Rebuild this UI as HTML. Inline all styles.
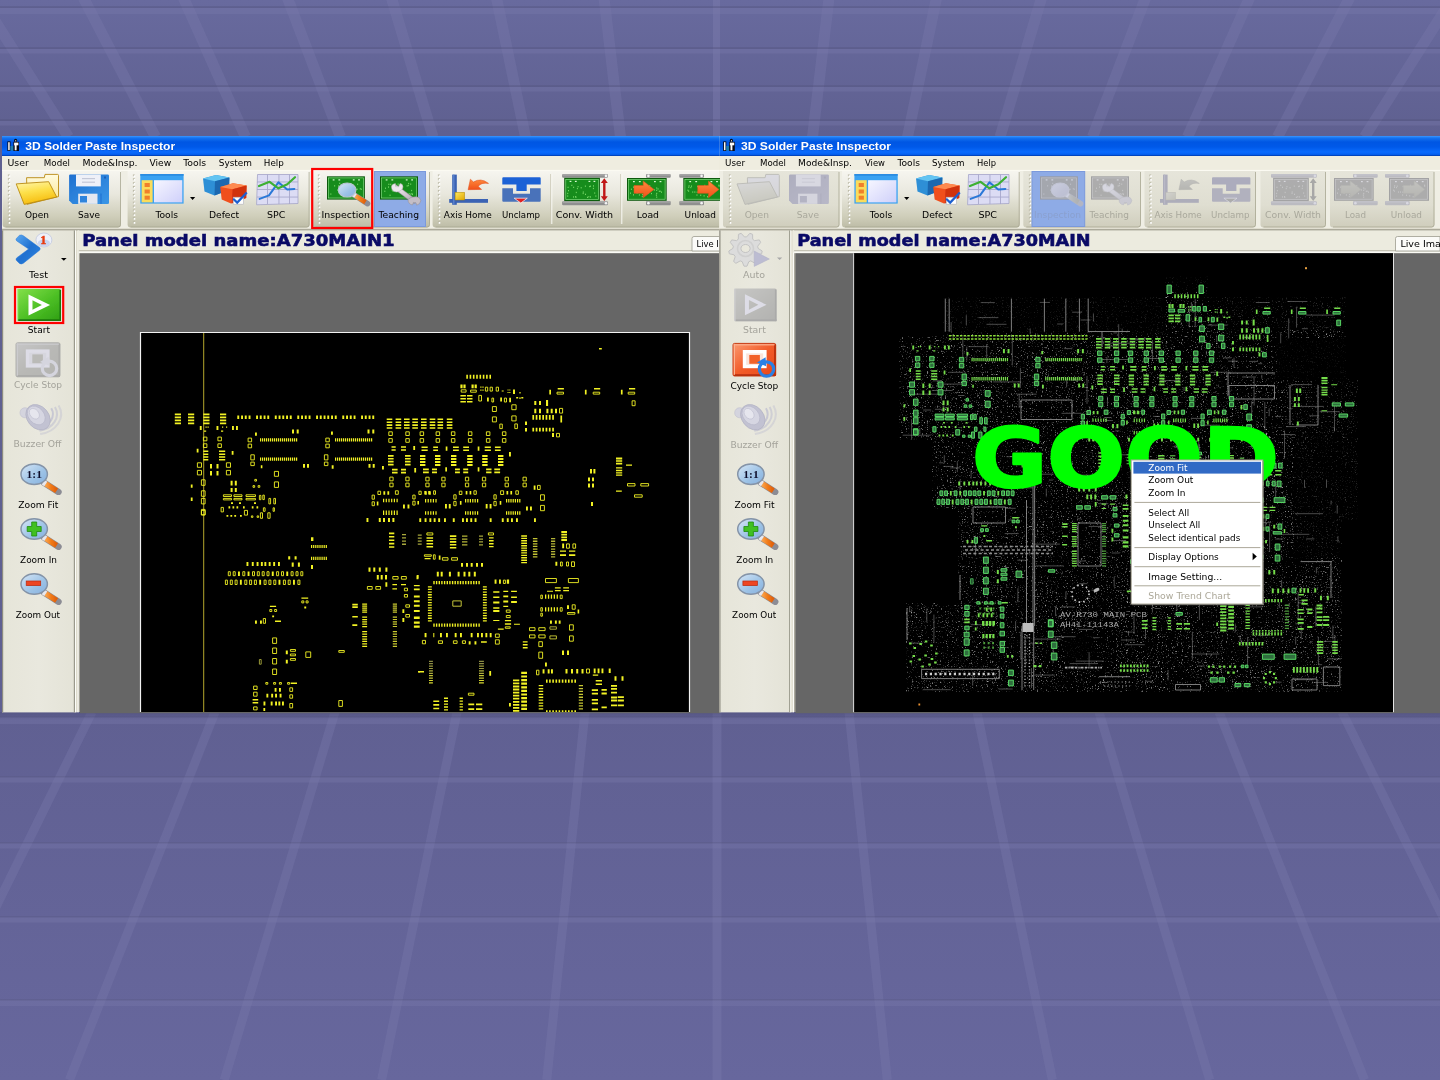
<!DOCTYPE html>
<html><head><meta charset="utf-8"><title>3D Solder Paste Inspector</title>
<style>
html,body{margin:0;padding:0;width:1440px;height:1080px;overflow:hidden;background:#65659a;}
svg{display:block;position:absolute;left:0;top:0;opacity:0.9999;}
text{white-space:pre;}
</style></head><body>
<svg width="1440" height="1080" viewBox="0 0 1440 1080">
<defs>
<linearGradient id="bgg" x1="0" y1="0" x2="0" y2="1">
<stop offset="0" stop-color="#686a9e"/><stop offset="0.125" stop-color="#5f6090"/>
<stop offset="0.66" stop-color="#606092"/><stop offset="1" stop-color="#67679d"/></linearGradient>
</defs>
<rect x="0" y="0" width="1440" height="1080" fill="url(#bgg)" />
<g stroke="#7a7aac" stroke-opacity="0.36" fill="none">
<line x1="604.0" y1="-2" x2="620.5" y2="137" stroke-width="11"/>
<line x1="829.0" y1="-2" x2="812.5" y2="137" stroke-width="11"/>
<line x1="496.5" y1="-2" x2="525.5" y2="137" stroke-width="11"/>
<line x1="936.5" y1="-2" x2="907.5" y2="137" stroke-width="11"/>
<line x1="391.5" y1="-2" x2="433.0" y2="137" stroke-width="11"/>
<line x1="1041.5" y1="-2" x2="1000.0" y2="137" stroke-width="11"/>
<line x1="287.5" y1="-2" x2="340.5" y2="137" stroke-width="11"/>
<line x1="1145.5" y1="-2" x2="1092.5" y2="137" stroke-width="11"/>
<line x1="183.5" y1="-2" x2="245.5" y2="137" stroke-width="11"/>
<line x1="1249.5" y1="-2" x2="1187.5" y2="137" stroke-width="11"/>
<line x1="83.5" y1="-2" x2="155.5" y2="137" stroke-width="11"/>
<line x1="1349.5" y1="-2" x2="1277.5" y2="137" stroke-width="11"/>
<line x1="-19.5" y1="-2" x2="68.5" y2="137" stroke-width="11"/>
<line x1="1452.5" y1="-2" x2="1364.5" y2="137" stroke-width="11"/>
<line x1="716.5" y1="0" x2="716.5" y2="136" stroke-width="7" stroke-opacity="0.5"/>
<line x1="585" y1="712" x2="546.72" y2="1080" stroke-width="9"/>
<line x1="849" y1="712" x2="887.28" y2="1080" stroke-width="9"/>
<line x1="457" y1="712" x2="381.59999999999997" y2="1080" stroke-width="9"/>
<line x1="977" y1="712" x2="1052.4" y2="1080" stroke-width="9"/>
<line x1="335" y1="712" x2="224.21999999999997" y2="1080" stroke-width="9"/>
<line x1="1099" y1="712" x2="1209.78" y2="1080" stroke-width="9"/>
<line x1="215" y1="712" x2="69.41999999999996" y2="1080" stroke-width="9"/>
<line x1="1219" y1="712" x2="1364.58" y2="1080" stroke-width="9"/>
<line x1="92" y1="712" x2="-89.25" y2="1080" stroke-width="9"/>
<line x1="1342" y1="712" x2="1523.25" y2="1080" stroke-width="9"/>
<line x1="717" y1="712" x2="717" y2="1080" stroke-width="9" stroke-opacity="0.4"/>
</g>
<rect x="0" y="6.2" width="1440" height="1.8" fill="#55557f" opacity="0.45"/>
<rect x="0" y="8" width="1440" height="6" fill="#7a7aac" opacity="0.38"/>
<rect x="0" y="47.2" width="1440" height="1.8" fill="#55557f" opacity="0.45"/>
<rect x="0" y="49" width="1440" height="4.5" fill="#7a7aac" opacity="0.38"/>
<rect x="0" y="85.2" width="1440" height="1.8" fill="#55557f" opacity="0.45"/>
<rect x="0" y="87" width="1440" height="4.5" fill="#7a7aac" opacity="0.38"/>
<rect x="0" y="119.2" width="1440" height="1.8" fill="#55557f" opacity="0.45"/>
<rect x="0" y="121" width="1440" height="4.5" fill="#7a7aac" opacity="0.38"/>
<rect x="0" y="716.0" width="1440" height="1.5" fill="#55557f" opacity="0.3"/>
<rect x="0" y="717.5" width="1440" height="6.5" fill="#7a7aac" opacity="0.38"/>
<rect x="0" y="776.0" width="1440" height="1.5" fill="#55557f" opacity="0.3"/>
<rect x="0" y="777.5" width="1440" height="5" fill="#7a7aac" opacity="0.38"/>
<rect x="0" y="842.0" width="1440" height="1.5" fill="#55557f" opacity="0.3"/>
<rect x="0" y="843.5" width="1440" height="5" fill="#7a7aac" opacity="0.38"/>
<rect x="0" y="916.0" width="1440" height="1.5" fill="#55557f" opacity="0.3"/>
<rect x="0" y="917.5" width="1440" height="5" fill="#7a7aac" opacity="0.38"/>
<rect x="0" y="999.0" width="1440" height="1.5" fill="#55557f" opacity="0.3"/>
<rect x="0" y="1000.5" width="1440" height="5.5" fill="#7a7aac" opacity="0.38"/>
<linearGradient id="shd" x1="0" y1="0" x2="0" y2="1"><stop offset="0" stop-color="#4c4c78" stop-opacity="0.5"/><stop offset="1" stop-color="#4c4c78" stop-opacity="0"/></linearGradient>
<rect x="0" y="712" width="1440" height="8" fill="url(#shd)" />
<defs>
<linearGradient id="ttl" x1="0" y1="0" x2="0" y2="1">
<stop offset="0" stop-color="#3b97ff"/><stop offset="0.1" stop-color="#1473f0"/>
<stop offset="0.3" stop-color="#0056e3"/><stop offset="0.55" stop-color="#0059e9"/><stop offset="0.8" stop-color="#0a6bfd"/><stop offset="0.92" stop-color="#0560f0"/><stop offset="1" stop-color="#0038a8"/></linearGradient>
<linearGradient id="tbg" x1="0" y1="0" x2="0" y2="1">
<stop offset="0" stop-color="#f6f5ef"/><stop offset="0.4" stop-color="#e9e8de"/>
<stop offset="0.8" stop-color="#cfceba"/><stop offset="1" stop-color="#bdbca6"/></linearGradient>
<linearGradient id="tbd" x1="0" y1="0" x2="0" y2="1">
<stop offset="0" stop-color="#e6e5da"/><stop offset="0.6" stop-color="#dfded1"/>
<stop offset="1" stop-color="#cfcdbc"/></linearGradient>
<linearGradient id="sbg" x1="0" y1="0" x2="1" y2="0">
<stop offset="0" stop-color="#e6e5d9"/><stop offset="0.5" stop-color="#e9e8de"/><stop offset="1" stop-color="#e4e3d7"/></linearGradient>
</defs>
<rect x="2" y="136" width="718" height="576" fill="#ece9d8" />
<rect x="2" y="136" width="718" height="20" fill="url(#ttl)" />
<rect x="7.3999999999999995" y="141.4" width="3.1" height="9.6" fill="#0a0a14" />
<rect x="8.2" y="142.2" width="1.5" height="8.0" fill="#fafafa" />
<rect x="10.5" y="146" width="3.2" height="4.6" fill="#1d7fae" />
<rect x="13.399999999999999" y="141.8" width="5.6" height="9.2" fill="#0a0a14" />
<rect x="14.1" y="142.6" width="4.3" height="2.7" fill="#fafafa" />
<rect x="14.7" y="145" width="1.9" height="5.3" fill="#fafafa" />
<circle cx="15.6" cy="140.4" r="1.6" fill="#0a0a14"/>
<rect x="15.2" y="140.2" width="1.0" height="1.2" fill="#e8e8e8" />
<text x="25.2" y="150.3" font-size="11" fill="#fff" text-anchor="start" font-weight="bold" font-family="'Liberation Sans',sans-serif" textLength="150" lengthAdjust="spacingAndGlyphs" stroke="#0a3aa0" stroke-width="0.25" paint-order="stroke">3D Solder Paste Inspector</text>
<rect x="2" y="156" width="718" height="14.5" fill="#efede0" />
<rect x="2" y="170.5" width="718" height="58" fill="#efeee4" />
<rect x="2" y="169.9" width="718" height="1" fill="#fcfcf4" />
<rect x="2" y="228.2" width="718" height="1.2" fill="#dddbcc" />
<rect x="2" y="229.3" width="718" height="1.5" fill="#939182" />
<text x="7.5" y="165.8" font-size="8.6" fill="#000" text-anchor="start" font-weight="normal" font-family="'DejaVu Sans','Liberation Sans',sans-serif" textLength="21.4" lengthAdjust="spacingAndGlyphs" >User</text>
<text x="43.8" y="165.8" font-size="8.6" fill="#000" text-anchor="start" font-weight="normal" font-family="'DejaVu Sans','Liberation Sans',sans-serif" textLength="26.2" lengthAdjust="spacingAndGlyphs" >Model</text>
<text x="82.5" y="165.8" font-size="8.6" fill="#000" text-anchor="start" font-weight="normal" font-family="'DejaVu Sans','Liberation Sans',sans-serif" textLength="55.0" lengthAdjust="spacingAndGlyphs" >Mode&amp;Insp.</text>
<text x="149.5" y="165.8" font-size="8.6" fill="#000" text-anchor="start" font-weight="normal" font-family="'DejaVu Sans','Liberation Sans',sans-serif" textLength="21.7" lengthAdjust="spacingAndGlyphs" >View</text>
<text x="183.2" y="165.8" font-size="8.6" fill="#000" text-anchor="start" font-weight="normal" font-family="'DejaVu Sans','Liberation Sans',sans-serif" textLength="23.0" lengthAdjust="spacingAndGlyphs" >Tools</text>
<text x="218.8" y="165.8" font-size="8.6" fill="#000" text-anchor="start" font-weight="normal" font-family="'DejaVu Sans','Liberation Sans',sans-serif" textLength="33.2" lengthAdjust="spacingAndGlyphs" >System</text>
<text x="263.8" y="165.8" font-size="8.6" fill="#000" text-anchor="start" font-weight="normal" font-family="'DejaVu Sans','Liberation Sans',sans-serif" textLength="20.0" lengthAdjust="spacingAndGlyphs" >Help</text>
<path d="M2.6,171 H121 V224.5 Q121,227.5 118,227.5 H5.6 Q2.6,227.5 2.6,224.5 Z" fill="url(#tbg)"/>
<path d="M120.5,172 V224.5 Q120.5,227.0 118,227.0 H5.6" fill="none" stroke="#a9a792" stroke-width="1" stroke-opacity="0.8"/>
<path d="M127.6,171 H309.6 V224.5 Q309.6,227.5 306.6,227.5 H130.6 Q127.6,227.5 127.6,224.5 Z" fill="url(#tbg)"/>
<path d="M309.1,172 V224.5 Q309.1,227.0 306.6,227.0 H130.6" fill="none" stroke="#a9a792" stroke-width="1" stroke-opacity="0.8"/>
<path d="M312.5,171 H430 V224.5 Q430,227.5 427,227.5 H315.5 Q312.5,227.5 312.5,224.5 Z" fill="url(#tbg)"/>
<path d="M429.5,172 V224.5 Q429.5,227.0 427,227.0 H315.5" fill="none" stroke="#a9a792" stroke-width="1" stroke-opacity="0.8"/>
<path d="M432.6,171 H722 V224.5 Q722,227.5 719,227.5 H435.6 Q432.6,227.5 432.6,224.5 Z" fill="url(#tbg)"/>
<path d="M721.5,172 V224.5 Q721.5,227.0 719,227.0 H435.6" fill="none" stroke="#a9a792" stroke-width="1" stroke-opacity="0.8"/>
<path d="M8.8,174.4V224.6" stroke="#b8b6a2" stroke-width="1.8" stroke-dasharray="1.9 2"/>
<path d="M9.5,175.20000000000002V225.4" stroke="#ffffff" stroke-width="1.6" stroke-dasharray="1.7 2.2"/>
<path d="M133.8,174.4V224.6" stroke="#b8b6a2" stroke-width="1.8" stroke-dasharray="1.9 2"/>
<path d="M134.5,175.20000000000002V225.4" stroke="#ffffff" stroke-width="1.6" stroke-dasharray="1.7 2.2"/>
<path d="M318.8,174.4V224.6" stroke="#b8b6a2" stroke-width="1.8" stroke-dasharray="1.9 2"/>
<path d="M319.5,175.20000000000002V225.4" stroke="#ffffff" stroke-width="1.6" stroke-dasharray="1.7 2.2"/>
<path d="M438.8,174.4V224.6" stroke="#b8b6a2" stroke-width="1.8" stroke-dasharray="1.9 2"/>
<path d="M439.5,175.20000000000002V225.4" stroke="#ffffff" stroke-width="1.6" stroke-dasharray="1.7 2.2"/>
<rect x="550.3" y="174" width="1" height="50" fill="#c9c7b4" />
<rect x="551.3" y="174" width="1" height="50" fill="#fafaf5" />
<rect x="620.3" y="174" width="1" height="50" fill="#c9c7b4" />
<rect x="621.3" y="174" width="1" height="50" fill="#fafaf5" />
<rect x="374.5" y="171.5" width="51" height="55" fill="#8eabe6" stroke="#7b99dc" stroke-width="1"/>
<rect x="312.2" y="169" width="60" height="59" fill="none" stroke="#fe0000" stroke-width="2.2"/>
<text x="25" y="217.8" font-size="8.6" fill="#000" text-anchor="start" font-weight="normal" font-family="'DejaVu Sans','Liberation Sans',sans-serif" textLength="24" lengthAdjust="spacingAndGlyphs" >Open</text>
<text x="78" y="217.8" font-size="8.6" fill="#000" text-anchor="start" font-weight="normal" font-family="'DejaVu Sans','Liberation Sans',sans-serif" textLength="22" lengthAdjust="spacingAndGlyphs" >Save</text>
<text x="155.4" y="217.8" font-size="8.6" fill="#000" text-anchor="start" font-weight="normal" font-family="'DejaVu Sans','Liberation Sans',sans-serif" textLength="22.6" lengthAdjust="spacingAndGlyphs" >Tools</text>
<text x="208.9" y="217.8" font-size="8.6" fill="#000" text-anchor="start" font-weight="normal" font-family="'DejaVu Sans','Liberation Sans',sans-serif" textLength="30.3" lengthAdjust="spacingAndGlyphs" >Defect</text>
<text x="267" y="217.8" font-size="8.6" fill="#000" text-anchor="start" font-weight="normal" font-family="'DejaVu Sans','Liberation Sans',sans-serif" textLength="18.3" lengthAdjust="spacingAndGlyphs" >SPC</text>
<text x="321.5" y="217.8" font-size="8.6" fill="#000" text-anchor="start" font-weight="normal" font-family="'DejaVu Sans','Liberation Sans',sans-serif" textLength="48.5" lengthAdjust="spacingAndGlyphs" >Inspection</text>
<text x="378.5" y="217.8" font-size="8.6" fill="#000" text-anchor="start" font-weight="normal" font-family="'DejaVu Sans','Liberation Sans',sans-serif" textLength="40.5" lengthAdjust="spacingAndGlyphs" >Teaching</text>
<text x="443.8" y="217.8" font-size="8.6" fill="#000" text-anchor="start" font-weight="normal" font-family="'DejaVu Sans','Liberation Sans',sans-serif" textLength="47.9" lengthAdjust="spacingAndGlyphs" >Axis Home</text>
<text x="502" y="217.8" font-size="8.6" fill="#000" text-anchor="start" font-weight="normal" font-family="'DejaVu Sans','Liberation Sans',sans-serif" textLength="38" lengthAdjust="spacingAndGlyphs" >Unclamp</text>
<text x="555.8" y="217.8" font-size="8.6" fill="#000" text-anchor="start" font-weight="normal" font-family="'DejaVu Sans','Liberation Sans',sans-serif" textLength="57.2" lengthAdjust="spacingAndGlyphs" >Conv. Width</text>
<text x="636.7" y="217.8" font-size="8.6" fill="#000" text-anchor="start" font-weight="normal" font-family="'DejaVu Sans','Liberation Sans',sans-serif" textLength="22.3" lengthAdjust="spacingAndGlyphs" >Load</text>
<text x="684.6" y="217.8" font-size="8.6" fill="#000" text-anchor="start" font-weight="normal" font-family="'DejaVu Sans','Liberation Sans',sans-serif" textLength="31.4" lengthAdjust="spacingAndGlyphs" >Unload</text>
<rect x="2" y="230.4" width="73.5" height="482" fill="url(#sbg)" />
<rect x="2" y="230.4" width="1.2" height="482" fill="#8c8b80" />
<rect x="73.8" y="230.4" width="1.2" height="482" fill="#9a998c" />
<rect x="75" y="230.4" width="1.3" height="482" fill="#fdfdf8" />
<rect x="76.3" y="230.4" width="1.2" height="482" fill="#d5d3c4" />
<rect x="77.5" y="230.4" width="1.3" height="482" fill="#fcfcf8" />
<rect x="78.8" y="252" width="1.2" height="460" fill="#a3a296" />
<rect x="77.5" y="230.4" width="642.5" height="22" fill="#ecebdf" />
<rect x="78.8" y="250.4" width="641.2" height="1" fill="#a9a799" />
<rect x="78.8" y="251.4" width="641.2" height="1.8" fill="#fafaf5" />
<text x="82.2" y="246.2" font-size="16.6" fill="#0a0a66" text-anchor="start" font-weight="bold" font-family="'DejaVu Sans','Liberation Sans',sans-serif" textLength="312.4" lengthAdjust="spacingAndGlyphs" stroke="#0a0a66" stroke-width="0.6">Panel model name:A730MAIN1</text>
<rect x="80" y="253.2" width="640" height="460" fill="#666666" />
<rect x="140.5" y="332.5" width="549.0" height="379.5" fill="#000" />
<path d="M140.5,712 V332.5 H689.5 V712" fill="none" stroke="#f2f2f2" stroke-width="1.2"/>
<path d="M692,251 V238.5 Q692,236.5 694,236.5 H720 V251 Z" fill="#fbfbf8" stroke="#9d9c8f" stroke-width="0.8"/>
<text x="696.6" y="246.8" font-size="8" fill="#000" text-anchor="start" font-weight="normal" font-family="'DejaVu Sans','Liberation Sans',sans-serif" textLength="30.4" lengthAdjust="spacingAndGlyphs" >Live Im</text>
<text x="29" y="277.8" font-size="8.6" fill="#000" text-anchor="start" font-weight="normal" font-family="'DejaVu Sans','Liberation Sans',sans-serif" textLength="19" lengthAdjust="spacingAndGlyphs" >Test</text>
<text x="27.8" y="332.5" font-size="8.6" fill="#000" text-anchor="start" font-weight="normal" font-family="'DejaVu Sans','Liberation Sans',sans-serif" textLength="22.2" lengthAdjust="spacingAndGlyphs" >Start</text>
<text x="13.9" y="388" font-size="8.6" fill="#a4a39b" text-anchor="start" font-weight="normal" font-family="'DejaVu Sans','Liberation Sans',sans-serif" textLength="48.1" lengthAdjust="spacingAndGlyphs" >Cycle Stop</text>
<text x="13.5" y="447" font-size="8.6" fill="#a4a39b" text-anchor="start" font-weight="normal" font-family="'DejaVu Sans','Liberation Sans',sans-serif" textLength="48.0" lengthAdjust="spacingAndGlyphs" >Buzzer Off</text>
<text x="18.3" y="507.5" font-size="8.6" fill="#000" text-anchor="start" font-weight="normal" font-family="'DejaVu Sans','Liberation Sans',sans-serif" textLength="40.0" lengthAdjust="spacingAndGlyphs" >Zoom Fit</text>
<text x="20" y="562.5" font-size="8.6" fill="#000" text-anchor="start" font-weight="normal" font-family="'DejaVu Sans','Liberation Sans',sans-serif" textLength="37" lengthAdjust="spacingAndGlyphs" >Zoom In</text>
<text x="15.8" y="617.5" font-size="8.6" fill="#000" text-anchor="start" font-weight="normal" font-family="'DejaVu Sans','Liberation Sans',sans-serif" textLength="44.2" lengthAdjust="spacingAndGlyphs" >Zoom Out</text>
<rect x="719.3" y="136" width="720.7" height="576" fill="#ece9d8" />
<rect x="719.3" y="136" width="720.7" height="20" fill="url(#ttl)" />
<rect x="723.2" y="141.4" width="3.1" height="9.6" fill="#0a0a14" />
<rect x="724.0" y="142.2" width="1.5" height="8.0" fill="#fafafa" />
<rect x="726.3" y="146" width="3.2" height="4.6" fill="#1d7fae" />
<rect x="729.2" y="141.8" width="5.6" height="9.2" fill="#0a0a14" />
<rect x="729.9" y="142.6" width="4.3" height="2.7" fill="#fafafa" />
<rect x="730.5" y="145" width="1.9" height="5.3" fill="#fafafa" />
<circle cx="731.4" cy="140.4" r="1.6" fill="#0a0a14"/>
<rect x="731.0" y="140.2" width="1.0" height="1.2" fill="#e8e8e8" />
<text x="741" y="150.3" font-size="11" fill="#fff" text-anchor="start" font-weight="bold" font-family="'Liberation Sans',sans-serif" textLength="150" lengthAdjust="spacingAndGlyphs" stroke="#0a3aa0" stroke-width="0.25" paint-order="stroke">3D Solder Paste Inspector</text>
<rect x="719.3" y="156" width="720.7" height="14.5" fill="#efede0" />
<rect x="719.3" y="170.5" width="720.7" height="58" fill="#efeee4" />
<rect x="719.3" y="169.9" width="720.7" height="1" fill="#fcfcf4" />
<rect x="719.3" y="228.2" width="720.7" height="1.2" fill="#dddbcc" />
<rect x="719.3" y="229.3" width="720.7" height="1.5" fill="#939182" />
<text x="725" y="165.8" font-size="8.6" fill="#000" text-anchor="start" font-weight="normal" font-family="'DejaVu Sans','Liberation Sans',sans-serif" textLength="20" lengthAdjust="spacingAndGlyphs" >User</text>
<text x="760" y="165.8" font-size="8.6" fill="#000" text-anchor="start" font-weight="normal" font-family="'DejaVu Sans','Liberation Sans',sans-serif" textLength="26" lengthAdjust="spacingAndGlyphs" >Model</text>
<text x="798" y="165.8" font-size="8.6" fill="#000" text-anchor="start" font-weight="normal" font-family="'DejaVu Sans','Liberation Sans',sans-serif" textLength="54" lengthAdjust="spacingAndGlyphs" >Mode&amp;Insp.</text>
<text x="865" y="165.8" font-size="8.6" fill="#000" text-anchor="start" font-weight="normal" font-family="'DejaVu Sans','Liberation Sans',sans-serif" textLength="20" lengthAdjust="spacingAndGlyphs" >View</text>
<text x="897.5" y="165.8" font-size="8.6" fill="#000" text-anchor="start" font-weight="normal" font-family="'DejaVu Sans','Liberation Sans',sans-serif" textLength="22.5" lengthAdjust="spacingAndGlyphs" >Tools</text>
<text x="932" y="165.8" font-size="8.6" fill="#000" text-anchor="start" font-weight="normal" font-family="'DejaVu Sans','Liberation Sans',sans-serif" textLength="32.5" lengthAdjust="spacingAndGlyphs" >System</text>
<text x="977" y="165.8" font-size="8.6" fill="#000" text-anchor="start" font-weight="normal" font-family="'DejaVu Sans','Liberation Sans',sans-serif" textLength="19" lengthAdjust="spacingAndGlyphs" >Help</text>
<path d="M723,171 H839.5 V224.5 Q839.5,227.5 836.5,227.5 H726 Q723,227.5 723,224.5 Z" fill="url(#tbd)"/>
<path d="M839.0,172 V224.5 Q839.0,227.0 836.5,227.0 H726" fill="none" stroke="#a9a792" stroke-width="1" stroke-opacity="0.8"/>
<path d="M842,171 H1019.7 V224.5 Q1019.7,227.5 1016.7,227.5 H845 Q842,227.5 842,224.5 Z" fill="url(#tbg)"/>
<path d="M1019.2,172 V224.5 Q1019.2,227.0 1016.7,227.0 H845" fill="none" stroke="#a9a792" stroke-width="1" stroke-opacity="0.8"/>
<path d="M1023.3,171 H1141 V224.5 Q1141,227.5 1138,227.5 H1026.3 Q1023.3,227.5 1023.3,224.5 Z" fill="url(#tbd)"/>
<path d="M1140.5,172 V224.5 Q1140.5,227.0 1138,227.0 H1026.3" fill="none" stroke="#a9a792" stroke-width="1" stroke-opacity="0.8"/>
<path d="M1144.5,171 H1256 V224.5 Q1256,227.5 1253,227.5 H1147.5 Q1144.5,227.5 1144.5,224.5 Z" fill="url(#tbd)"/>
<path d="M1255.5,172 V224.5 Q1255.5,227.0 1253,227.0 H1147.5" fill="none" stroke="#a9a792" stroke-width="1" stroke-opacity="0.8"/>
<path d="M1260.5,171 H1326 V224.5 Q1326,227.5 1323,227.5 H1263.5 Q1260.5,227.5 1260.5,224.5 Z" fill="url(#tbd)"/>
<path d="M1325.5,172 V224.5 Q1325.5,227.0 1323,227.0 H1263.5" fill="none" stroke="#a9a792" stroke-width="1" stroke-opacity="0.8"/>
<path d="M1330,171 H1434.5 V224.5 Q1434.5,227.5 1431.5,227.5 H1333 Q1330,227.5 1330,224.5 Z" fill="url(#tbd)"/>
<path d="M1434.0,172 V224.5 Q1434.0,227.0 1431.5,227.0 H1333" fill="none" stroke="#a9a792" stroke-width="1" stroke-opacity="0.8"/>
<path d="M729.8,174.4V224.6" stroke="#b8b6a2" stroke-width="1.8" stroke-dasharray="1.9 2"/>
<path d="M730.5,175.20000000000002V225.4" stroke="#ffffff" stroke-width="1.6" stroke-dasharray="1.7 2.2"/>
<path d="M848.8,174.4V224.6" stroke="#b8b6a2" stroke-width="1.8" stroke-dasharray="1.9 2"/>
<path d="M849.5,175.20000000000002V225.4" stroke="#ffffff" stroke-width="1.6" stroke-dasharray="1.7 2.2"/>
<path d="M1029.8,174.4V224.6" stroke="#b8b6a2" stroke-width="1.8" stroke-dasharray="1.9 2"/>
<path d="M1030.5,175.20000000000002V225.4" stroke="#ffffff" stroke-width="1.6" stroke-dasharray="1.7 2.2"/>
<path d="M1150.3,174.4V224.6" stroke="#b8b6a2" stroke-width="1.8" stroke-dasharray="1.9 2"/>
<path d="M1151.0,175.20000000000002V225.4" stroke="#ffffff" stroke-width="1.6" stroke-dasharray="1.7 2.2"/>
<rect x="1032" y="171.5" width="52.7" height="55" fill="#8eabe6" stroke="#7b99dc" stroke-width="1"/>
<text x="744.7" y="217.8" font-size="8.6" fill="#a9a89c" text-anchor="start" font-weight="normal" font-family="'DejaVu Sans','Liberation Sans',sans-serif" textLength="24.3" lengthAdjust="spacingAndGlyphs" >Open</text>
<text x="796.8" y="217.8" font-size="8.6" fill="#a9a89c" text-anchor="start" font-weight="normal" font-family="'DejaVu Sans','Liberation Sans',sans-serif" textLength="22.2" lengthAdjust="spacingAndGlyphs" >Save</text>
<text x="869.7" y="217.8" font-size="8.6" fill="#000" text-anchor="start" font-weight="normal" font-family="'DejaVu Sans','Liberation Sans',sans-serif" textLength="22.5" lengthAdjust="spacingAndGlyphs" >Tools</text>
<text x="922" y="217.8" font-size="8.6" fill="#000" text-anchor="start" font-weight="normal" font-family="'DejaVu Sans','Liberation Sans',sans-serif" textLength="30.5" lengthAdjust="spacingAndGlyphs" >Defect</text>
<text x="978.5" y="217.8" font-size="8.6" fill="#000" text-anchor="start" font-weight="normal" font-family="'DejaVu Sans','Liberation Sans',sans-serif" textLength="18.5" lengthAdjust="spacingAndGlyphs" >SPC</text>
<text x="1034" y="217.8" font-size="8.6" fill="#8aa0cf" text-anchor="start" font-weight="normal" font-family="'DejaVu Sans','Liberation Sans',sans-serif" textLength="47" lengthAdjust="spacingAndGlyphs" >Inspection</text>
<text x="1089.5" y="217.8" font-size="8.6" fill="#a9a89c" text-anchor="start" font-weight="normal" font-family="'DejaVu Sans','Liberation Sans',sans-serif" textLength="39.5" lengthAdjust="spacingAndGlyphs" >Teaching</text>
<text x="1154.5" y="217.8" font-size="8.6" fill="#a9a89c" text-anchor="start" font-weight="normal" font-family="'DejaVu Sans','Liberation Sans',sans-serif" textLength="47.2" lengthAdjust="spacingAndGlyphs" >Axis Home</text>
<text x="1211" y="217.8" font-size="8.6" fill="#a9a89c" text-anchor="start" font-weight="normal" font-family="'DejaVu Sans','Liberation Sans',sans-serif" textLength="38.5" lengthAdjust="spacingAndGlyphs" >Unclamp</text>
<text x="1265" y="217.8" font-size="8.6" fill="#a9a89c" text-anchor="start" font-weight="normal" font-family="'DejaVu Sans','Liberation Sans',sans-serif" textLength="56" lengthAdjust="spacingAndGlyphs" >Conv. Width</text>
<text x="1345" y="217.8" font-size="8.6" fill="#a9a89c" text-anchor="start" font-weight="normal" font-family="'DejaVu Sans','Liberation Sans',sans-serif" textLength="21" lengthAdjust="spacingAndGlyphs" >Load</text>
<text x="1390.8" y="217.8" font-size="8.6" fill="#a9a89c" text-anchor="start" font-weight="normal" font-family="'DejaVu Sans','Liberation Sans',sans-serif" textLength="31.2" lengthAdjust="spacingAndGlyphs" >Unload</text>
<rect x="719.3" y="230.4" width="71.5" height="482" fill="url(#sbg)" />
<rect x="719.3" y="230.4" width="1.2" height="482" fill="#8c8b80" />
<rect x="789.0999999999999" y="230.4" width="1.2" height="482" fill="#9a998c" />
<rect x="790.3" y="230.4" width="1.3" height="482" fill="#fdfdf8" />
<rect x="791.5999999999999" y="230.4" width="1.2" height="482" fill="#d5d3c4" />
<rect x="792.8" y="230.4" width="1.3" height="482" fill="#fcfcf8" />
<rect x="794.0999999999999" y="252" width="1.2" height="460" fill="#a3a296" />
<rect x="792.8" y="230.4" width="647.2" height="22" fill="#ecebdf" />
<rect x="794.0999999999999" y="250.4" width="645.9000000000001" height="1" fill="#a9a799" />
<rect x="794.0999999999999" y="251.4" width="645.9000000000001" height="1.8" fill="#fafaf5" />
<text x="797.2" y="246.2" font-size="16.6" fill="#0a0a66" text-anchor="start" font-weight="bold" font-family="'DejaVu Sans','Liberation Sans',sans-serif" textLength="293.4" lengthAdjust="spacingAndGlyphs" stroke="#0a0a66" stroke-width="0.6">Panel model name:A730MAIN</text>
<rect x="795.3" y="253.2" width="644.7" height="460" fill="#666666" />
<rect x="853.5" y="253.2" width="539.5" height="458.8" fill="#000" />
<path d="M1395.5,251 V238.5 Q1395.5,236.5 1397.5,236.5 H1440 V251 Z" fill="#fbfbf8" stroke="#9d9c8f" stroke-width="0.8"/>
<text x="1400.4" y="246.8" font-size="8" fill="#000" text-anchor="start" font-weight="normal" font-family="'DejaVu Sans','Liberation Sans',sans-serif" textLength="46.6" lengthAdjust="spacingAndGlyphs" >Live Imag</text>
<rect x="1393" y="253.2" width="0.9" height="459" fill="#f2f2f2" />
<rect x="853.2" y="253.2" width="0.9" height="459" fill="#f2f2f2" />
<text x="743" y="277.5" font-size="8.6" fill="#a4a39b" text-anchor="start" font-weight="normal" font-family="'DejaVu Sans','Liberation Sans',sans-serif" textLength="22" lengthAdjust="spacingAndGlyphs" >Auto</text>
<text x="743" y="332.5" font-size="8.6" fill="#a4a39b" text-anchor="start" font-weight="normal" font-family="'DejaVu Sans','Liberation Sans',sans-serif" textLength="22.8" lengthAdjust="spacingAndGlyphs" >Start</text>
<text x="730.4" y="447.6" font-size="8.6" fill="#a4a39b" text-anchor="start" font-weight="normal" font-family="'DejaVu Sans','Liberation Sans',sans-serif" textLength="47.6" lengthAdjust="spacingAndGlyphs" >Buzzer Off</text>
<text x="730.4" y="388.6" font-size="8.6" fill="#000" text-anchor="start" font-weight="normal" font-family="'DejaVu Sans','Liberation Sans',sans-serif" textLength="47.9" lengthAdjust="spacingAndGlyphs" >Cycle Stop</text>
<text x="734.6" y="507.5" font-size="8.6" fill="#000" text-anchor="start" font-weight="normal" font-family="'DejaVu Sans','Liberation Sans',sans-serif" textLength="40.0" lengthAdjust="spacingAndGlyphs" >Zoom Fit</text>
<text x="736.3" y="562.5" font-size="8.6" fill="#000" text-anchor="start" font-weight="normal" font-family="'DejaVu Sans','Liberation Sans',sans-serif" textLength="37.0" lengthAdjust="spacingAndGlyphs" >Zoom In</text>
<text x="732.1" y="617.5" font-size="8.6" fill="#000" text-anchor="start" font-weight="normal" font-family="'DejaVu Sans','Liberation Sans',sans-serif" textLength="44.2" lengthAdjust="spacingAndGlyphs" >Zoom Out</text>
<defs>
<filter id="dis" x="-10%" y="-10%" width="120%" height="120%" color-interpolation-filters="sRGB">
<feColorMatrix type="matrix" values="0.1 0.19 0.035 0 0.535  0.1 0.19 0.035 0 0.535  0.07 0.15 0.13 0 0.555  0 0 0 0.9 0"/>
</filter>
<filter id="soft" x="-10%" y="-10%" width="120%" height="120%"><feGaussianBlur stdDeviation="0.35"/></filter>
<linearGradient id="fold" x1="0" y1="0" x2="0.3" y2="1"><stop offset="0" stop-color="#fff6b0"/><stop offset="0.5" stop-color="#fde04a"/><stop offset="1" stop-color="#f6bd10"/></linearGradient>
<linearGradient id="foldb" x1="0" y1="0" x2="0" y2="1"><stop offset="0" stop-color="#fffbe0"/><stop offset="1" stop-color="#fbe58a"/></linearGradient>
<linearGradient id="flop" x1="0" y1="0" x2="1" y2="1"><stop offset="0" stop-color="#1f6fd0"/><stop offset="0.5" stop-color="#2d84dc"/><stop offset="1" stop-color="#3a96e6"/></linearGradient>
<linearGradient id="lav" x1="0" y1="0" x2="1" y2="1"><stop offset="0" stop-color="#f6f6ff"/><stop offset="1" stop-color="#cfd0fa"/></linearGradient>
<linearGradient id="lens" x1="0" y1="0" x2="1" y2="1"><stop offset="0" stop-color="#d6e6f6"/><stop offset="0.6" stop-color="#9cc2e6"/><stop offset="1" stop-color="#86b0de"/></linearGradient>
<linearGradient id="hand" x1="0" y1="0" x2="1" y2="0"><stop offset="0" stop-color="#f9a24a"/><stop offset="0.5" stop-color="#f07a18"/><stop offset="1" stop-color="#e0600c"/></linearGradient>
<linearGradient id="grn" x1="0" y1="0" x2="1" y2="1"><stop offset="0" stop-color="#84e04a"/><stop offset="0.55" stop-color="#4cbf24"/><stop offset="1" stop-color="#2f9e14"/></linearGradient>
<linearGradient id="org" x1="0" y1="0" x2="1" y2="1"><stop offset="0" stop-color="#fb9a70"/><stop offset="0.5" stop-color="#f25c2a"/><stop offset="1" stop-color="#e8481a"/></linearGradient>
<linearGradient id="arw" x1="0" y1="0" x2="0" y2="1"><stop offset="0" stop-color="#ff8a3c"/><stop offset="1" stop-color="#f0501a"/></linearGradient>
<linearGradient id="chev" x1="0" y1="0" x2="1" y2="1"><stop offset="0" stop-color="#5aa8f0"/><stop offset="0.5" stop-color="#2070d0"/><stop offset="1" stop-color="#2f86e0"/></linearGradient>
<linearGradient id="ylw" x1="0" y1="0" x2="1" y2="1"><stop offset="0" stop-color="#ffe860"/><stop offset="1" stop-color="#e0a800"/></linearGradient>
<linearGradient id="wr" x1="0" y1="0" x2="1" y2="1"><stop offset="0" stop-color="#f4f0f4"/><stop offset="0.5" stop-color="#d4ccd4"/><stop offset="1" stop-color="#a8a4ac"/></linearGradient>
</defs>
<g transform="translate(0,0)" filter="url(#soft)">
<path d="M26.6,177.7 H44.3 L45,174.4 H57.6 Q58.5,174.4 58.5,175.4 V196.6 L27.1,204.3 Z" fill="url(#foldb)" stroke="#b98a12" stroke-width="0.9"/>
<path d="M16.2,183.9 L48.7,181.7 L56.7,197 L24.2,204.4 Z" fill="url(#fold)" stroke="#b98a12" stroke-width="0.9" stroke-linejoin="round"/>
</g>
<g transform="translate(0,0)" filter="url(#soft)">
<path d="M70.3,174.5 H107.8 Q109,174.5 109,175.7 V202.7 Q109,203.9 107.8,203.9 H72.6 L69.1,200.6 V175.7 Q69.1,174.5 70.3,174.5 Z" fill="url(#flop)"/>
<rect x="76" y="174.5" width="24.8" height="11.9" fill="#eef0f8" />
<rect x="82" y="178" width="13" height="1.2" fill="#c4c8d8" />
<rect x="82" y="181.6" width="13" height="1.2" fill="#c4c8d8" />
<rect x="78.2" y="193.7" width="19.3" height="10.2" fill="#e4e8f0" />
<rect x="80" y="196" width="7" height="6.5" fill="#2d84dc" />
<rect x="100.5" y="193.5" width="1" height="10.4" fill="#1f6fd0" />
<rect x="104" y="176.5" width="2" height="2" fill="#1a5fb8" />
</g>
<g transform="translate(0,0)" filter="url(#soft)">
<rect x="140.3" y="174.1" width="43.3" height="29.5" fill="#3aa2f2" />
<rect x="140.3" y="174.1" width="43.3" height="1.6" fill="#2a8ae0" />
<rect x="141.6" y="180.2" width="11" height="22.2" fill="#fbdc5a" />
<rect x="144.6" y="183" width="5.2" height="4" fill="#f0802a" />
<rect x="144.6" y="189.5" width="5.2" height="4" fill="#f0802a" />
<rect x="144.6" y="195.7" width="5.2" height="4" fill="#f0802a" />
<rect x="154" y="180.2" width="28.3" height="22.2" fill="url(#lav)" />
</g>
<path d="M190,197 h5.2 l-2.6,3 z" fill="#000"/>
<g transform="translate(0,0)" filter="url(#soft)">
<path d="M203,178.5 L216,175 L229.4,177.5 L229,190 L214.5,195.4 L204.5,191.5 Z" fill="#2f8fd6"/>
<path d="M203,178.5 L216,175 L229.4,177.5 L215,181.2 Z" fill="#63c4f2"/>
<path d="M215,181.2 L229.4,177.5 L229,190 L214.5,195.4 Z" fill="#1a68b0"/>
<path d="M220.2,187 L233,183.2 L246.6,185.5 L246.2,198 L231,203.6 L221.7,199.5 Z" fill="#f0501c"/>
<path d="M220.2,187 L233,183.2 L246.6,185.5 L232.5,189.2 Z" fill="#ff8a50"/>
<path d="M232.5,189.2 L246.6,185.5 L246.2,198 L231.8,203.4 Z" fill="#d03010"/>
<rect x="233.2" y="197.2" width="10.4" height="7" fill="#fdfdfd" stroke="#b0b0b8" stroke-width="0.6"/>
<path d="M233.2,198.8 L237.2,202.6 L246.8,192.6" fill="none" stroke="#1c5fd0" stroke-width="2.2"/>
</g>
<g transform="translate(0,0)" filter="url(#soft)">
<path d="M257.5,174.5 H298 V203.5 L256.6,204.8 Z" fill="#dcdcf4" stroke="#a4a4c8" stroke-width="0.8"/>
<rect x="267" y="174.5" width="0.9" height="29.5" fill="#a8a8cc" />
<rect x="278.5" y="174.5" width="0.9" height="29.5" fill="#a8a8cc" />
<rect x="289" y="174.5" width="0.9" height="29.5" fill="#a8a8cc" />
<rect x="257" y="181.5" width="41" height="0.9" fill="#a8a8cc" />
<rect x="257" y="189" width="41" height="0.9" fill="#a8a8cc" />
<rect x="257" y="196.6" width="41" height="0.9" fill="#a8a8cc" />
<polyline points="259.6,198.9 269,195.4 278.4,182.4 287.3,189.5 294.4,188.9" fill="none" stroke="#2a78d8" stroke-width="2" stroke-linejoin="round" stroke-linecap="round"/>
<polyline points="259,186 269.6,181.8 278.4,188.3 287.3,184.2 295,177.2" fill="none" stroke="#3cb030" stroke-width="2.2" stroke-linejoin="round" stroke-linecap="round"/>
</g>
<g transform="translate(0,0)" filter="url(#soft)">
<rect x="327" y="176.3" width="37.9" height="23.3" fill="#0c5a10" />
<rect x="328" y="177.3" width="35.9" height="21.3" fill="#188c1c" />
<rect x="328.6" y="177.9" width="34.699999999999996" height="20.1" fill="none" stroke="#8fe08c" stroke-width="0.6"/>
<rect x="332.7" y="179.3" width="1.8" height="1.2" fill="#d8f8d0" />
<rect x="338.4" y="179.3" width="1.8" height="1.2" fill="#d8f8d0" />
<rect x="352.8" y="179.3" width="1.8" height="1.2" fill="#d8f8d0" />
<rect x="358.1" y="179.3" width="1.8" height="1.2" fill="#d8f8d0" />
<rect x="337.4" y="189.5" width="0.9" height="1.3" fill="#7fe070" />
<rect x="341.4" y="190.3" width="0.9" height="1.3" fill="#7fe070" />
<rect x="349.3" y="183.2" width="0.9" height="1.3" fill="#7fe070" />
<rect x="330.4" y="193.4" width="0.9" height="1.3" fill="#7fe070" />
<rect x="338.0" y="185.4" width="0.9" height="1.3" fill="#7fe070" />
<rect x="360.8" y="188.6" width="0.9" height="1.3" fill="#7fe070" />
<rect x="355.8" y="188.6" width="0.9" height="1.3" fill="#7fe070" />
<rect x="349.7" y="184.3" width="0.9" height="1.3" fill="#7fe070" />
<rect x="349.6" y="193.8" width="0.9" height="1.3" fill="#7fe070" />
<rect x="346.2" y="192.2" width="0.9" height="1.3" fill="#7fe070" />
<rect x="350.7" y="183.2" width="0.9" height="1.3" fill="#7fe070" />
<rect x="353.4" y="190.2" width="0.9" height="1.3" fill="#7fe070" />
<rect x="339.3" y="182.7" width="0.9" height="1.3" fill="#7fe070" />
<rect x="356.7" y="188.6" width="0.9" height="1.3" fill="#7fe070" />
<rect x="352.2" y="194.0" width="0.9" height="1.3" fill="#7fe070" />
<rect x="352.1" y="194.6" width="0.9" height="1.3" fill="#7fe070" />
<rect x="342.2" y="193.0" width="0.9" height="1.3" fill="#7fe070" />
<rect x="343.7" y="194.7" width="0.9" height="1.3" fill="#7fe070" />
<rect x="357.2" y="183.6" width="0.9" height="1.3" fill="#7fe070" />
<rect x="334.2" y="185.2" width="0.9" height="1.3" fill="#7fe070" />
<rect x="359.8" y="188.1" width="0.9" height="1.3" fill="#7fe070" />
<rect x="349.4" y="186.3" width="0.9" height="1.3" fill="#7fe070" />
<rect x="345.7" y="187.4" width="0.9" height="1.3" fill="#7fe070" />
<rect x="340.8" y="190.1" width="0.9" height="1.3" fill="#7fe070" />
<rect x="348.1" y="194.3" width="0.9" height="1.3" fill="#7fe070" />
<rect x="351.1" y="194.7" width="0.9" height="1.3" fill="#7fe070" />
<path d="M353.5,194.5 L367.5,203.6" stroke="#8c8c94" stroke-width="5.6" stroke-linecap="round"/>
<path d="M355.5,195.9 L365.4,202.3" stroke="url(#hand)" stroke-width="4.6"/>
<path d="M353.2,194.4 L355.6,195.9" stroke="#e8e8ee" stroke-width="4.6"/>
<ellipse cx="347.1" cy="190" rx="8.8" ry="7" fill="url(#lens)" stroke="#b8c4d2" stroke-width="1.2"/>
</g>
<g transform="translate(0,0)" filter="url(#soft)">
<rect x="380" y="176.3" width="38" height="23.3" fill="#0c5a10" />
<rect x="381" y="177.3" width="36" height="21.3" fill="#188c1c" />
<rect x="381.6" y="177.9" width="34.8" height="20.1" fill="none" stroke="#8fe08c" stroke-width="0.6"/>
<rect x="385.7" y="179.3" width="1.8" height="1.2" fill="#d8f8d0" />
<rect x="391.4" y="179.3" width="1.8" height="1.2" fill="#d8f8d0" />
<rect x="405.8" y="179.3" width="1.8" height="1.2" fill="#d8f8d0" />
<rect x="411.2" y="179.3" width="1.8" height="1.2" fill="#d8f8d0" />
<rect x="390.3" y="183.7" width="0.9" height="1.3" fill="#7fe070" />
<rect x="395.3" y="184.4" width="0.9" height="1.3" fill="#7fe070" />
<rect x="385.1" y="187.6" width="0.9" height="1.3" fill="#7fe070" />
<rect x="411.5" y="192.9" width="0.9" height="1.3" fill="#7fe070" />
<rect x="406.7" y="185.3" width="0.9" height="1.3" fill="#7fe070" />
<rect x="399.6" y="186.0" width="0.9" height="1.3" fill="#7fe070" />
<rect x="388.4" y="183.7" width="0.9" height="1.3" fill="#7fe070" />
<rect x="389.6" y="194.6" width="0.9" height="1.3" fill="#7fe070" />
<rect x="408.7" y="193.0" width="0.9" height="1.3" fill="#7fe070" />
<rect x="407.8" y="184.9" width="0.9" height="1.3" fill="#7fe070" />
<rect x="392.6" y="190.6" width="0.9" height="1.3" fill="#7fe070" />
<rect x="405.7" y="193.7" width="0.9" height="1.3" fill="#7fe070" />
<rect x="410.3" y="183.5" width="0.9" height="1.3" fill="#7fe070" />
<rect x="401.8" y="191.2" width="0.9" height="1.3" fill="#7fe070" />
<rect x="398.7" y="184.7" width="0.9" height="1.3" fill="#7fe070" />
<rect x="397.7" y="183.5" width="0.9" height="1.3" fill="#7fe070" />
<rect x="412.0" y="193.8" width="0.9" height="1.3" fill="#7fe070" />
<rect x="400.0" y="186.3" width="0.9" height="1.3" fill="#7fe070" />
<rect x="411.2" y="189.9" width="0.9" height="1.3" fill="#7fe070" />
<rect x="410.4" y="193.6" width="0.9" height="1.3" fill="#7fe070" />
<rect x="398.8" y="187.8" width="0.9" height="1.3" fill="#7fe070" />
<rect x="401.6" y="188.0" width="0.9" height="1.3" fill="#7fe070" />
<rect x="388.0" y="186.4" width="0.9" height="1.3" fill="#7fe070" />
<rect x="408.2" y="182.9" width="0.9" height="1.3" fill="#7fe070" />
<rect x="384.4" y="190.6" width="0.9" height="1.3" fill="#7fe070" />
<rect x="391.7" y="189.4" width="0.9" height="1.3" fill="#7fe070" />
<path d="M396,187.5 L414,201" stroke="#9a949c" stroke-width="5.2" stroke-linecap="round"/>
<path d="M396,187.5 L414,201" stroke="url(#wr)" stroke-width="3.8" stroke-linecap="round"/>
<path d="M391.5,186 Q391,191.5 396.5,192 Q402,191.5 403,187 Q403,184 400,183.6 L398.6,186.8 L395.6,186.6 L395.4,183.6 Q392.4,183.8 391.5,186 Z" fill="#ece8ee" stroke="#b4aeb6" stroke-width="0.5"/>
<path d="M408,199.5 Q408,204 412.5,205 L413.4,202.4 L416,202.8 L416.6,205.2 Q420.4,204.4 420.8,200.6 Q420.4,197 416,196.7 Q410,196.7 408,199.5 Z" fill="#c4bec6" stroke="#8e8a92" stroke-width="0.5"/>
</g>
<g transform="translate(0,0)" filter="url(#soft)">
<rect x="452.2" y="174.6" width="4.6" height="30.2" fill="#3a62b4" />
<rect x="449.2" y="199" width="38.8" height="3.8" fill="#3a62b4" />
<rect x="453.2" y="174.6" width="1.2" height="30" fill="#6088d0" />
<rect x="455.1" y="192.3" width="9.5" height="7.7" fill="url(#ylw)" stroke="#b08800" stroke-width="0.5"/>
<path d="M468.1,189.7 L470.4,179.2 L473.4,182 Q481,177.4 488.5,183.4 Q481.4,182.2 478.2,186.4 L481.6,189.4 Z" fill="url(#arw)" stroke="#e04a18" stroke-width="0.5"/>
</g>
<g transform="translate(0,0)" filter="url(#soft)">
<path d="M503.3,177.3 H539.7 Q540.7,177.3 540.7,178.3 V184.5 H526.7 V191 H516.4 V184.5 H502.3 V178.3 Q502.3,177.3 503.3,177.3 Z" fill="#1f62d6"/>
<path d="M502.3,188.3 H513 V193.7 H530 V188.3 H540.7 V200.7 Q540.7,201.7 539.7,201.7 H503.3 Q502.3,201.7 502.3,200.7 Z" fill="#4a72ba"/>
<path d="M514.2,198.2 H527.3 L520.8,203 Z" fill="#e02020" stroke="#fff" stroke-width="0.7"/>
</g>
<g transform="translate(0,0)" filter="url(#soft)">
<rect x="562.1" y="174" width="45.799999999999955" height="3.8000000000000114" rx="1" fill="#8f8f8f"/>
<rect x="562.6" y="174.4" width="44.799999999999955" height="1" fill="#b4b4b4" />
<circle cx="606" cy="175.9" r="1.3" fill="#f4f4f4"/>
<rect x="562.1" y="201.2" width="45.799999999999955" height="4.100000000000023" rx="1" fill="#8f8f8f"/>
<rect x="562.6" y="201.6" width="44.799999999999955" height="1" fill="#b4b4b4" />
<circle cx="606" cy="203.25" r="1.3" fill="#f4f4f4"/>
<rect x="564.2" y="177.8" width="35.7" height="23.3" fill="#0c5a10" />
<rect x="565.2" y="178.8" width="33.7" height="21.3" fill="#188c1c" />
<rect x="565.8000000000001" y="179.4" width="32.5" height="20.1" fill="none" stroke="#8fe08c" stroke-width="0.6"/>
<rect x="569.6" y="180.8" width="1.8" height="1.2" fill="#d8f8d0" />
<rect x="574.9" y="180.8" width="1.8" height="1.2" fill="#d8f8d0" />
<rect x="588.5" y="180.8" width="1.8" height="1.2" fill="#d8f8d0" />
<rect x="593.5" y="180.8" width="1.8" height="1.2" fill="#d8f8d0" />
<rect x="585.1" y="193.7" width="0.9" height="1.3" fill="#7fe070" />
<rect x="590.0" y="196.3" width="0.9" height="1.3" fill="#7fe070" />
<rect x="588.4" y="196.1" width="0.9" height="1.3" fill="#7fe070" />
<rect x="568.0" y="190.0" width="0.9" height="1.3" fill="#7fe070" />
<rect x="594.3" y="192.4" width="0.9" height="1.3" fill="#7fe070" />
<rect x="593.1" y="185.3" width="0.9" height="1.3" fill="#7fe070" />
<rect x="580.7" y="187.1" width="0.9" height="1.3" fill="#7fe070" />
<rect x="582.8" y="191.4" width="0.9" height="1.3" fill="#7fe070" />
<rect x="567.6" y="186.7" width="0.9" height="1.3" fill="#7fe070" />
<rect x="575.2" y="196.0" width="0.9" height="1.3" fill="#7fe070" />
<rect x="589.2" y="185.9" width="0.9" height="1.3" fill="#7fe070" />
<rect x="590.1" y="185.6" width="0.9" height="1.3" fill="#7fe070" />
<rect x="584.9" y="185.5" width="0.9" height="1.3" fill="#7fe070" />
<rect x="567.3" y="195.4" width="0.9" height="1.3" fill="#7fe070" />
<rect x="573.2" y="186.7" width="0.9" height="1.3" fill="#7fe070" />
<rect x="595.4" y="195.4" width="0.9" height="1.3" fill="#7fe070" />
<rect x="575.5" y="196.6" width="0.9" height="1.3" fill="#7fe070" />
<rect x="582.7" y="192.8" width="0.9" height="1.3" fill="#7fe070" />
<rect x="573.1" y="196.3" width="0.9" height="1.3" fill="#7fe070" />
<rect x="587.0" y="196.7" width="0.9" height="1.3" fill="#7fe070" />
<rect x="592.9" y="187.8" width="0.9" height="1.3" fill="#7fe070" />
<rect x="577.6" y="186.0" width="0.9" height="1.3" fill="#7fe070" />
<rect x="571.4" y="184.7" width="0.9" height="1.3" fill="#7fe070" />
<rect x="575.8" y="191.8" width="0.9" height="1.3" fill="#7fe070" />
<rect x="567.3" y="192.8" width="0.9" height="1.3" fill="#7fe070" />
<rect x="576.9" y="187.9" width="0.9" height="1.3" fill="#7fe070" />
<path d="M604.3,178.2 L607.8,183 H605.5 V196.2 H607.8 L604.3,201 L600.8,196.2 H603.1 V183 H600.8 Z" fill="#c01818"/>
</g>
<g transform="translate(0,0)" filter="url(#soft)">
<rect x="646" y="174" width="24.700000000000045" height="3.8000000000000114" rx="1" fill="#8f8f8f"/>
<rect x="646.5" y="174.4" width="23.700000000000045" height="1" fill="#b4b4b4" />
<circle cx="648.4" cy="175.9" r="1.3" fill="#f4f4f4"/>
<rect x="646" y="201" width="24.700000000000045" height="4.300000000000011" rx="1" fill="#8f8f8f"/>
<rect x="646.5" y="201.4" width="23.700000000000045" height="1" fill="#b4b4b4" />
<circle cx="648.4" cy="203.15" r="1.3" fill="#f4f4f4"/>
<rect x="627" y="178" width="39.7" height="22.8" fill="#0c5a10" />
<rect x="628" y="179" width="37.7" height="20.8" fill="#188c1c" />
<rect x="628.6" y="179.6" width="36.5" height="19.6" fill="none" stroke="#8fe08c" stroke-width="0.6"/>
<rect x="633.0" y="181" width="1.8" height="1.2" fill="#d8f8d0" />
<rect x="638.9" y="181" width="1.8" height="1.2" fill="#d8f8d0" />
<rect x="654.0" y="181" width="1.8" height="1.2" fill="#d8f8d0" />
<rect x="659.6" y="181" width="1.8" height="1.2" fill="#d8f8d0" />
<rect x="655.9" y="194.5" width="0.9" height="1.3" fill="#7fe070" />
<rect x="645.9" y="187.3" width="0.9" height="1.3" fill="#7fe070" />
<rect x="630.0" y="192.5" width="0.9" height="1.3" fill="#7fe070" />
<rect x="645.4" y="193.7" width="0.9" height="1.3" fill="#7fe070" />
<rect x="642.2" y="193.9" width="0.9" height="1.3" fill="#7fe070" />
<rect x="638.9" y="194.3" width="0.9" height="1.3" fill="#7fe070" />
<rect x="653.9" y="189.3" width="0.9" height="1.3" fill="#7fe070" />
<rect x="647.6" y="192.7" width="0.9" height="1.3" fill="#7fe070" />
<rect x="636.3" y="191.1" width="0.9" height="1.3" fill="#7fe070" />
<rect x="656.3" y="187.4" width="0.9" height="1.3" fill="#7fe070" />
<rect x="656.3" y="192.8" width="0.9" height="1.3" fill="#7fe070" />
<rect x="657.6" y="188.3" width="0.9" height="1.3" fill="#7fe070" />
<rect x="633.0" y="194.2" width="0.9" height="1.3" fill="#7fe070" />
<rect x="656.3" y="189.7" width="0.9" height="1.3" fill="#7fe070" />
<rect x="633.1" y="186.5" width="0.9" height="1.3" fill="#7fe070" />
<rect x="650.8" y="187.7" width="0.9" height="1.3" fill="#7fe070" />
<rect x="661.1" y="191.5" width="0.9" height="1.3" fill="#7fe070" />
<rect x="636.6" y="192.4" width="0.9" height="1.3" fill="#7fe070" />
<rect x="641.8" y="195.9" width="0.9" height="1.3" fill="#7fe070" />
<rect x="659.7" y="190.6" width="0.9" height="1.3" fill="#7fe070" />
<rect x="651.1" y="192.9" width="0.9" height="1.3" fill="#7fe070" />
<rect x="656.3" y="196.5" width="0.9" height="1.3" fill="#7fe070" />
<rect x="630.9" y="188.6" width="0.9" height="1.3" fill="#7fe070" />
<rect x="649.7" y="187.9" width="0.9" height="1.3" fill="#7fe070" />
<rect x="649.3" y="185.1" width="0.9" height="1.3" fill="#7fe070" />
<rect x="658.8" y="190.7" width="0.9" height="1.3" fill="#7fe070" />
<path d="M634,185.5 H643.2 V181.0 L654,189.4 L643.2,197.8 V193.3 H634 Z" fill="url(#arw)" stroke="#e8501a" stroke-width="0.5"/>
</g>
<clipPath id="clipL"><rect x="0" y="136" width="720" height="576"/></clipPath><g clip-path="url(#clipL)">
<g transform="translate(0,0)" filter="url(#soft)">
<rect x="679.3" y="174" width="24.700000000000045" height="3.8000000000000114" rx="1" fill="#8f8f8f"/>
<rect x="679.8" y="174.4" width="23.700000000000045" height="1" fill="#b4b4b4" />
<circle cx="701.6" cy="175.9" r="1.3" fill="#f4f4f4"/>
<rect x="679.3" y="201" width="24.700000000000045" height="4.300000000000011" rx="1" fill="#8f8f8f"/>
<rect x="679.8" y="201.4" width="23.700000000000045" height="1" fill="#b4b4b4" />
<circle cx="701.6" cy="203.15" r="1.3" fill="#f4f4f4"/>
<rect x="683.3" y="178" width="40" height="22.8" fill="#0c5a10" />
<rect x="684.3" y="179" width="38" height="20.8" fill="#188c1c" />
<rect x="684.9" y="179.6" width="36.8" height="19.6" fill="none" stroke="#8fe08c" stroke-width="0.6"/>
<rect x="689.3" y="181" width="1.8" height="1.2" fill="#d8f8d0" />
<rect x="695.3" y="181" width="1.8" height="1.2" fill="#d8f8d0" />
<rect x="710.5" y="181" width="1.8" height="1.2" fill="#d8f8d0" />
<rect x="716.1" y="181" width="1.8" height="1.2" fill="#d8f8d0" />
<rect x="697.0" y="185.9" width="0.9" height="1.3" fill="#7fe070" />
<rect x="707.8" y="184.9" width="0.9" height="1.3" fill="#7fe070" />
<rect x="704.0" y="188.7" width="0.9" height="1.3" fill="#7fe070" />
<rect x="688.2" y="190.5" width="0.9" height="1.3" fill="#7fe070" />
<rect x="687.5" y="189.6" width="0.9" height="1.3" fill="#7fe070" />
<rect x="688.6" y="185.2" width="0.9" height="1.3" fill="#7fe070" />
<rect x="700.3" y="194.6" width="0.9" height="1.3" fill="#7fe070" />
<rect x="690.4" y="186.9" width="0.9" height="1.3" fill="#7fe070" />
<rect x="707.0" y="196.1" width="0.9" height="1.3" fill="#7fe070" />
<rect x="705.3" y="189.1" width="0.9" height="1.3" fill="#7fe070" />
<rect x="718.5" y="184.6" width="0.9" height="1.3" fill="#7fe070" />
<rect x="714.6" y="187.7" width="0.9" height="1.3" fill="#7fe070" />
<rect x="691.1" y="185.5" width="0.9" height="1.3" fill="#7fe070" />
<rect x="696.5" y="194.4" width="0.9" height="1.3" fill="#7fe070" />
<rect x="692.3" y="191.4" width="0.9" height="1.3" fill="#7fe070" />
<rect x="707.4" y="188.8" width="0.9" height="1.3" fill="#7fe070" />
<rect x="704.4" y="184.8" width="0.9" height="1.3" fill="#7fe070" />
<rect x="688.3" y="186.6" width="0.9" height="1.3" fill="#7fe070" />
<rect x="708.8" y="189.5" width="0.9" height="1.3" fill="#7fe070" />
<rect x="696.7" y="191.5" width="0.9" height="1.3" fill="#7fe070" />
<rect x="701.3" y="187.8" width="0.9" height="1.3" fill="#7fe070" />
<rect x="712.5" y="192.9" width="0.9" height="1.3" fill="#7fe070" />
<rect x="694.4" y="191.4" width="0.9" height="1.3" fill="#7fe070" />
<rect x="703.6" y="195.2" width="0.9" height="1.3" fill="#7fe070" />
<rect x="710.4" y="187.7" width="0.9" height="1.3" fill="#7fe070" />
<rect x="718.6" y="185.5" width="0.9" height="1.3" fill="#7fe070" />
<path d="M697.7,185.5 H708.5 V181.0 L718.9,189.4 L708.5,197.8 V193.3 H697.7 Z" fill="url(#arw)" stroke="#e8501a" stroke-width="0.5"/>
</g>
</g>
<g transform="translate(720.8,0)" filter="url(#dis)">
<path d="M26.6,177.7 H44.3 L45,174.4 H57.6 Q58.5,174.4 58.5,175.4 V196.6 L27.1,204.3 Z" fill="url(#foldb)" stroke="#b98a12" stroke-width="0.9"/>
<path d="M16.2,183.9 L48.7,181.7 L56.7,197 L24.2,204.4 Z" fill="url(#fold)" stroke="#b98a12" stroke-width="0.9" stroke-linejoin="round"/>
</g>
<g transform="translate(719.9,0)" filter="url(#dis)">
<path d="M70.3,174.5 H107.8 Q109,174.5 109,175.7 V202.7 Q109,203.9 107.8,203.9 H72.6 L69.1,200.6 V175.7 Q69.1,174.5 70.3,174.5 Z" fill="url(#flop)"/>
<rect x="76" y="174.5" width="24.8" height="11.9" fill="#eef0f8" />
<rect x="82" y="178" width="13" height="1.2" fill="#c4c8d8" />
<rect x="82" y="181.6" width="13" height="1.2" fill="#c4c8d8" />
<rect x="78.2" y="193.7" width="19.3" height="10.2" fill="#e4e8f0" />
<rect x="80" y="196" width="7" height="6.5" fill="#2d84dc" />
<rect x="100.5" y="193.5" width="1" height="10.4" fill="#1f6fd0" />
<rect x="104" y="176.5" width="2" height="2" fill="#1a5fb8" />
</g>
<g transform="translate(714.0999999999999,0)" filter="url(#soft)">
<rect x="140.3" y="174.1" width="43.3" height="29.5" fill="#3aa2f2" />
<rect x="140.3" y="174.1" width="43.3" height="1.6" fill="#2a8ae0" />
<rect x="141.6" y="180.2" width="11" height="22.2" fill="#fbdc5a" />
<rect x="144.6" y="183" width="5.2" height="4" fill="#f0802a" />
<rect x="144.6" y="189.5" width="5.2" height="4" fill="#f0802a" />
<rect x="144.6" y="195.7" width="5.2" height="4" fill="#f0802a" />
<rect x="154" y="180.2" width="28.3" height="22.2" fill="url(#lav)" />
</g>
<path d="M904.0999999999999,197 h5.2 l-2.6,3 z" fill="#000"/>
<g transform="translate(713,0)" filter="url(#soft)">
<path d="M203,178.5 L216,175 L229.4,177.5 L229,190 L214.5,195.4 L204.5,191.5 Z" fill="#2f8fd6"/>
<path d="M203,178.5 L216,175 L229.4,177.5 L215,181.2 Z" fill="#63c4f2"/>
<path d="M215,181.2 L229.4,177.5 L229,190 L214.5,195.4 Z" fill="#1a68b0"/>
<path d="M220.2,187 L233,183.2 L246.6,185.5 L246.2,198 L231,203.6 L221.7,199.5 Z" fill="#f0501c"/>
<path d="M220.2,187 L233,183.2 L246.6,185.5 L232.5,189.2 Z" fill="#ff8a50"/>
<path d="M232.5,189.2 L246.6,185.5 L246.2,198 L231.8,203.4 Z" fill="#d03010"/>
<rect x="233.2" y="197.2" width="10.4" height="7" fill="#fdfdfd" stroke="#b0b0b8" stroke-width="0.6"/>
<path d="M233.2,198.8 L237.2,202.6 L246.8,192.6" fill="none" stroke="#1c5fd0" stroke-width="2.2"/>
</g>
<g transform="translate(711,0)" filter="url(#soft)">
<path d="M257.5,174.5 H298 V203.5 L256.6,204.8 Z" fill="#dcdcf4" stroke="#a4a4c8" stroke-width="0.8"/>
<rect x="267" y="174.5" width="0.9" height="29.5" fill="#a8a8cc" />
<rect x="278.5" y="174.5" width="0.9" height="29.5" fill="#a8a8cc" />
<rect x="289" y="174.5" width="0.9" height="29.5" fill="#a8a8cc" />
<rect x="257" y="181.5" width="41" height="0.9" fill="#a8a8cc" />
<rect x="257" y="189" width="41" height="0.9" fill="#a8a8cc" />
<rect x="257" y="196.6" width="41" height="0.9" fill="#a8a8cc" />
<polyline points="259.6,198.9 269,195.4 278.4,182.4 287.3,189.5 294.4,188.9" fill="none" stroke="#2a78d8" stroke-width="2" stroke-linejoin="round" stroke-linecap="round"/>
<polyline points="259,186 269.6,181.8 278.4,188.3 287.3,184.2 295,177.2" fill="none" stroke="#3cb030" stroke-width="2.2" stroke-linejoin="round" stroke-linecap="round"/>
</g>
<g transform="translate(713,0)" filter="url(#dis)">
<rect x="327" y="176.3" width="37.9" height="23.3" fill="#0c5a10" />
<rect x="328" y="177.3" width="35.9" height="21.3" fill="#188c1c" />
<rect x="328.6" y="177.9" width="34.699999999999996" height="20.1" fill="none" stroke="#8fe08c" stroke-width="0.6"/>
<rect x="332.7" y="179.3" width="1.8" height="1.2" fill="#d8f8d0" />
<rect x="338.4" y="179.3" width="1.8" height="1.2" fill="#d8f8d0" />
<rect x="352.8" y="179.3" width="1.8" height="1.2" fill="#d8f8d0" />
<rect x="358.1" y="179.3" width="1.8" height="1.2" fill="#d8f8d0" />
<rect x="337.4" y="189.5" width="0.9" height="1.3" fill="#7fe070" />
<rect x="341.4" y="190.3" width="0.9" height="1.3" fill="#7fe070" />
<rect x="349.3" y="183.2" width="0.9" height="1.3" fill="#7fe070" />
<rect x="330.4" y="193.4" width="0.9" height="1.3" fill="#7fe070" />
<rect x="338.0" y="185.4" width="0.9" height="1.3" fill="#7fe070" />
<rect x="360.8" y="188.6" width="0.9" height="1.3" fill="#7fe070" />
<rect x="355.8" y="188.6" width="0.9" height="1.3" fill="#7fe070" />
<rect x="349.7" y="184.3" width="0.9" height="1.3" fill="#7fe070" />
<rect x="349.6" y="193.8" width="0.9" height="1.3" fill="#7fe070" />
<rect x="346.2" y="192.2" width="0.9" height="1.3" fill="#7fe070" />
<rect x="350.7" y="183.2" width="0.9" height="1.3" fill="#7fe070" />
<rect x="353.4" y="190.2" width="0.9" height="1.3" fill="#7fe070" />
<rect x="339.3" y="182.7" width="0.9" height="1.3" fill="#7fe070" />
<rect x="356.7" y="188.6" width="0.9" height="1.3" fill="#7fe070" />
<rect x="352.2" y="194.0" width="0.9" height="1.3" fill="#7fe070" />
<rect x="352.1" y="194.6" width="0.9" height="1.3" fill="#7fe070" />
<rect x="342.2" y="193.0" width="0.9" height="1.3" fill="#7fe070" />
<rect x="343.7" y="194.7" width="0.9" height="1.3" fill="#7fe070" />
<rect x="357.2" y="183.6" width="0.9" height="1.3" fill="#7fe070" />
<rect x="334.2" y="185.2" width="0.9" height="1.3" fill="#7fe070" />
<rect x="359.8" y="188.1" width="0.9" height="1.3" fill="#7fe070" />
<rect x="349.4" y="186.3" width="0.9" height="1.3" fill="#7fe070" />
<rect x="345.7" y="187.4" width="0.9" height="1.3" fill="#7fe070" />
<rect x="340.8" y="190.1" width="0.9" height="1.3" fill="#7fe070" />
<rect x="348.1" y="194.3" width="0.9" height="1.3" fill="#7fe070" />
<rect x="351.1" y="194.7" width="0.9" height="1.3" fill="#7fe070" />
<path d="M353.5,194.5 L367.5,203.6" stroke="#8c8c94" stroke-width="5.6" stroke-linecap="round"/>
<path d="M355.5,195.9 L365.4,202.3" stroke="url(#hand)" stroke-width="4.6"/>
<path d="M353.2,194.4 L355.6,195.9" stroke="#e8e8ee" stroke-width="4.6"/>
<ellipse cx="347.1" cy="190" rx="8.8" ry="7" fill="url(#lens)" stroke="#b8c4d2" stroke-width="1.2"/>
</g>
<g transform="translate(711,0)" filter="url(#dis)">
<rect x="380" y="176.3" width="38" height="23.3" fill="#0c5a10" />
<rect x="381" y="177.3" width="36" height="21.3" fill="#188c1c" />
<rect x="381.6" y="177.9" width="34.8" height="20.1" fill="none" stroke="#8fe08c" stroke-width="0.6"/>
<rect x="385.7" y="179.3" width="1.8" height="1.2" fill="#d8f8d0" />
<rect x="391.4" y="179.3" width="1.8" height="1.2" fill="#d8f8d0" />
<rect x="405.8" y="179.3" width="1.8" height="1.2" fill="#d8f8d0" />
<rect x="411.2" y="179.3" width="1.8" height="1.2" fill="#d8f8d0" />
<rect x="390.3" y="183.7" width="0.9" height="1.3" fill="#7fe070" />
<rect x="395.3" y="184.4" width="0.9" height="1.3" fill="#7fe070" />
<rect x="385.1" y="187.6" width="0.9" height="1.3" fill="#7fe070" />
<rect x="411.5" y="192.9" width="0.9" height="1.3" fill="#7fe070" />
<rect x="406.7" y="185.3" width="0.9" height="1.3" fill="#7fe070" />
<rect x="399.6" y="186.0" width="0.9" height="1.3" fill="#7fe070" />
<rect x="388.4" y="183.7" width="0.9" height="1.3" fill="#7fe070" />
<rect x="389.6" y="194.6" width="0.9" height="1.3" fill="#7fe070" />
<rect x="408.7" y="193.0" width="0.9" height="1.3" fill="#7fe070" />
<rect x="407.8" y="184.9" width="0.9" height="1.3" fill="#7fe070" />
<rect x="392.6" y="190.6" width="0.9" height="1.3" fill="#7fe070" />
<rect x="405.7" y="193.7" width="0.9" height="1.3" fill="#7fe070" />
<rect x="410.3" y="183.5" width="0.9" height="1.3" fill="#7fe070" />
<rect x="401.8" y="191.2" width="0.9" height="1.3" fill="#7fe070" />
<rect x="398.7" y="184.7" width="0.9" height="1.3" fill="#7fe070" />
<rect x="397.7" y="183.5" width="0.9" height="1.3" fill="#7fe070" />
<rect x="412.0" y="193.8" width="0.9" height="1.3" fill="#7fe070" />
<rect x="400.0" y="186.3" width="0.9" height="1.3" fill="#7fe070" />
<rect x="411.2" y="189.9" width="0.9" height="1.3" fill="#7fe070" />
<rect x="410.4" y="193.6" width="0.9" height="1.3" fill="#7fe070" />
<rect x="398.8" y="187.8" width="0.9" height="1.3" fill="#7fe070" />
<rect x="401.6" y="188.0" width="0.9" height="1.3" fill="#7fe070" />
<rect x="388.0" y="186.4" width="0.9" height="1.3" fill="#7fe070" />
<rect x="408.2" y="182.9" width="0.9" height="1.3" fill="#7fe070" />
<rect x="384.4" y="190.6" width="0.9" height="1.3" fill="#7fe070" />
<rect x="391.7" y="189.4" width="0.9" height="1.3" fill="#7fe070" />
<path d="M396,187.5 L414,201" stroke="#9a949c" stroke-width="5.2" stroke-linecap="round"/>
<path d="M396,187.5 L414,201" stroke="url(#wr)" stroke-width="3.8" stroke-linecap="round"/>
<path d="M391.5,186 Q391,191.5 396.5,192 Q402,191.5 403,187 Q403,184 400,183.6 L398.6,186.8 L395.6,186.6 L395.4,183.6 Q392.4,183.8 391.5,186 Z" fill="#ece8ee" stroke="#b4aeb6" stroke-width="0.5"/>
<path d="M408,199.5 Q408,204 412.5,205 L413.4,202.4 L416,202.8 L416.6,205.2 Q420.4,204.4 420.8,200.6 Q420.4,197 416,196.7 Q410,196.7 408,199.5 Z" fill="#c4bec6" stroke="#8e8a92" stroke-width="0.5"/>
</g>
<g transform="translate(710.8,0)" filter="url(#dis)">
<rect x="452.2" y="174.6" width="4.6" height="30.2" fill="#3a62b4" />
<rect x="449.2" y="199" width="38.8" height="3.8" fill="#3a62b4" />
<rect x="453.2" y="174.6" width="1.2" height="30" fill="#6088d0" />
<rect x="455.1" y="192.3" width="9.5" height="7.7" fill="url(#ylw)" stroke="#b08800" stroke-width="0.5"/>
<path d="M468.1,189.7 L470.4,179.2 L473.4,182 Q481,177.4 488.5,183.4 Q481.4,182.2 478.2,186.4 L481.6,189.4 Z" fill="url(#arw)" stroke="#e04a18" stroke-width="0.5"/>
</g>
<g transform="translate(709.7,0)" filter="url(#dis)">
<path d="M503.3,177.3 H539.7 Q540.7,177.3 540.7,178.3 V184.5 H526.7 V191 H516.4 V184.5 H502.3 V178.3 Q502.3,177.3 503.3,177.3 Z" fill="#1f62d6"/>
<path d="M502.3,188.3 H513 V193.7 H530 V188.3 H540.7 V200.7 Q540.7,201.7 539.7,201.7 H503.3 Q502.3,201.7 502.3,200.7 Z" fill="#4a72ba"/>
<path d="M514.2,198.2 H527.3 L520.8,203 Z" fill="#e02020" stroke="#fff" stroke-width="0.7"/>
</g>
<g transform="translate(708.9,0)" filter="url(#dis)">
<rect x="562.1" y="174" width="45.799999999999955" height="3.8000000000000114" rx="1" fill="#8f8f8f"/>
<rect x="562.6" y="174.4" width="44.799999999999955" height="1" fill="#b4b4b4" />
<circle cx="606" cy="175.9" r="1.3" fill="#f4f4f4"/>
<rect x="562.1" y="201.2" width="45.799999999999955" height="4.100000000000023" rx="1" fill="#8f8f8f"/>
<rect x="562.6" y="201.6" width="44.799999999999955" height="1" fill="#b4b4b4" />
<circle cx="606" cy="203.25" r="1.3" fill="#f4f4f4"/>
<rect x="564.2" y="177.8" width="35.7" height="23.3" fill="#0c5a10" />
<rect x="565.2" y="178.8" width="33.7" height="21.3" fill="#188c1c" />
<rect x="565.8000000000001" y="179.4" width="32.5" height="20.1" fill="none" stroke="#8fe08c" stroke-width="0.6"/>
<rect x="569.6" y="180.8" width="1.8" height="1.2" fill="#d8f8d0" />
<rect x="574.9" y="180.8" width="1.8" height="1.2" fill="#d8f8d0" />
<rect x="588.5" y="180.8" width="1.8" height="1.2" fill="#d8f8d0" />
<rect x="593.5" y="180.8" width="1.8" height="1.2" fill="#d8f8d0" />
<rect x="585.1" y="193.7" width="0.9" height="1.3" fill="#7fe070" />
<rect x="590.0" y="196.3" width="0.9" height="1.3" fill="#7fe070" />
<rect x="588.4" y="196.1" width="0.9" height="1.3" fill="#7fe070" />
<rect x="568.0" y="190.0" width="0.9" height="1.3" fill="#7fe070" />
<rect x="594.3" y="192.4" width="0.9" height="1.3" fill="#7fe070" />
<rect x="593.1" y="185.3" width="0.9" height="1.3" fill="#7fe070" />
<rect x="580.7" y="187.1" width="0.9" height="1.3" fill="#7fe070" />
<rect x="582.8" y="191.4" width="0.9" height="1.3" fill="#7fe070" />
<rect x="567.6" y="186.7" width="0.9" height="1.3" fill="#7fe070" />
<rect x="575.2" y="196.0" width="0.9" height="1.3" fill="#7fe070" />
<rect x="589.2" y="185.9" width="0.9" height="1.3" fill="#7fe070" />
<rect x="590.1" y="185.6" width="0.9" height="1.3" fill="#7fe070" />
<rect x="584.9" y="185.5" width="0.9" height="1.3" fill="#7fe070" />
<rect x="567.3" y="195.4" width="0.9" height="1.3" fill="#7fe070" />
<rect x="573.2" y="186.7" width="0.9" height="1.3" fill="#7fe070" />
<rect x="595.4" y="195.4" width="0.9" height="1.3" fill="#7fe070" />
<rect x="575.5" y="196.6" width="0.9" height="1.3" fill="#7fe070" />
<rect x="582.7" y="192.8" width="0.9" height="1.3" fill="#7fe070" />
<rect x="573.1" y="196.3" width="0.9" height="1.3" fill="#7fe070" />
<rect x="587.0" y="196.7" width="0.9" height="1.3" fill="#7fe070" />
<rect x="592.9" y="187.8" width="0.9" height="1.3" fill="#7fe070" />
<rect x="577.6" y="186.0" width="0.9" height="1.3" fill="#7fe070" />
<rect x="571.4" y="184.7" width="0.9" height="1.3" fill="#7fe070" />
<rect x="575.8" y="191.8" width="0.9" height="1.3" fill="#7fe070" />
<rect x="567.3" y="192.8" width="0.9" height="1.3" fill="#7fe070" />
<rect x="576.9" y="187.9" width="0.9" height="1.3" fill="#7fe070" />
<path d="M604.3,178.2 L607.8,183 H605.5 V196.2 H607.8 L604.3,201 L600.8,196.2 H603.1 V183 H600.8 Z" fill="#c01818"/>
</g>
<g transform="translate(707,0)" filter="url(#dis)">
<rect x="646" y="174" width="24.700000000000045" height="3.8000000000000114" rx="1" fill="#8f8f8f"/>
<rect x="646.5" y="174.4" width="23.700000000000045" height="1" fill="#b4b4b4" />
<circle cx="648.4" cy="175.9" r="1.3" fill="#f4f4f4"/>
<rect x="646" y="201" width="24.700000000000045" height="4.300000000000011" rx="1" fill="#8f8f8f"/>
<rect x="646.5" y="201.4" width="23.700000000000045" height="1" fill="#b4b4b4" />
<circle cx="648.4" cy="203.15" r="1.3" fill="#f4f4f4"/>
<rect x="627" y="178" width="39.7" height="22.8" fill="#0c5a10" />
<rect x="628" y="179" width="37.7" height="20.8" fill="#188c1c" />
<rect x="628.6" y="179.6" width="36.5" height="19.6" fill="none" stroke="#8fe08c" stroke-width="0.6"/>
<rect x="633.0" y="181" width="1.8" height="1.2" fill="#d8f8d0" />
<rect x="638.9" y="181" width="1.8" height="1.2" fill="#d8f8d0" />
<rect x="654.0" y="181" width="1.8" height="1.2" fill="#d8f8d0" />
<rect x="659.6" y="181" width="1.8" height="1.2" fill="#d8f8d0" />
<rect x="655.9" y="194.5" width="0.9" height="1.3" fill="#7fe070" />
<rect x="645.9" y="187.3" width="0.9" height="1.3" fill="#7fe070" />
<rect x="630.0" y="192.5" width="0.9" height="1.3" fill="#7fe070" />
<rect x="645.4" y="193.7" width="0.9" height="1.3" fill="#7fe070" />
<rect x="642.2" y="193.9" width="0.9" height="1.3" fill="#7fe070" />
<rect x="638.9" y="194.3" width="0.9" height="1.3" fill="#7fe070" />
<rect x="653.9" y="189.3" width="0.9" height="1.3" fill="#7fe070" />
<rect x="647.6" y="192.7" width="0.9" height="1.3" fill="#7fe070" />
<rect x="636.3" y="191.1" width="0.9" height="1.3" fill="#7fe070" />
<rect x="656.3" y="187.4" width="0.9" height="1.3" fill="#7fe070" />
<rect x="656.3" y="192.8" width="0.9" height="1.3" fill="#7fe070" />
<rect x="657.6" y="188.3" width="0.9" height="1.3" fill="#7fe070" />
<rect x="633.0" y="194.2" width="0.9" height="1.3" fill="#7fe070" />
<rect x="656.3" y="189.7" width="0.9" height="1.3" fill="#7fe070" />
<rect x="633.1" y="186.5" width="0.9" height="1.3" fill="#7fe070" />
<rect x="650.8" y="187.7" width="0.9" height="1.3" fill="#7fe070" />
<rect x="661.1" y="191.5" width="0.9" height="1.3" fill="#7fe070" />
<rect x="636.6" y="192.4" width="0.9" height="1.3" fill="#7fe070" />
<rect x="641.8" y="195.9" width="0.9" height="1.3" fill="#7fe070" />
<rect x="659.7" y="190.6" width="0.9" height="1.3" fill="#7fe070" />
<rect x="651.1" y="192.9" width="0.9" height="1.3" fill="#7fe070" />
<rect x="656.3" y="196.5" width="0.9" height="1.3" fill="#7fe070" />
<rect x="630.9" y="188.6" width="0.9" height="1.3" fill="#7fe070" />
<rect x="649.7" y="187.9" width="0.9" height="1.3" fill="#7fe070" />
<rect x="649.3" y="185.1" width="0.9" height="1.3" fill="#7fe070" />
<rect x="658.8" y="190.7" width="0.9" height="1.3" fill="#7fe070" />
<path d="M634,185.5 H643.2 V181.0 L654,189.4 L643.2,197.8 V193.3 H634 Z" fill="url(#arw)" stroke="#e8501a" stroke-width="0.5"/>
</g>
<g transform="translate(705.7,0)" filter="url(#dis)">
<rect x="679.3" y="174" width="24.700000000000045" height="3.8000000000000114" rx="1" fill="#8f8f8f"/>
<rect x="679.8" y="174.4" width="23.700000000000045" height="1" fill="#b4b4b4" />
<circle cx="701.6" cy="175.9" r="1.3" fill="#f4f4f4"/>
<rect x="679.3" y="201" width="24.700000000000045" height="4.300000000000011" rx="1" fill="#8f8f8f"/>
<rect x="679.8" y="201.4" width="23.700000000000045" height="1" fill="#b4b4b4" />
<circle cx="701.6" cy="203.15" r="1.3" fill="#f4f4f4"/>
<rect x="683.3" y="178" width="40" height="22.8" fill="#0c5a10" />
<rect x="684.3" y="179" width="38" height="20.8" fill="#188c1c" />
<rect x="684.9" y="179.6" width="36.8" height="19.6" fill="none" stroke="#8fe08c" stroke-width="0.6"/>
<rect x="689.3" y="181" width="1.8" height="1.2" fill="#d8f8d0" />
<rect x="695.3" y="181" width="1.8" height="1.2" fill="#d8f8d0" />
<rect x="710.5" y="181" width="1.8" height="1.2" fill="#d8f8d0" />
<rect x="716.1" y="181" width="1.8" height="1.2" fill="#d8f8d0" />
<rect x="697.0" y="185.9" width="0.9" height="1.3" fill="#7fe070" />
<rect x="707.8" y="184.9" width="0.9" height="1.3" fill="#7fe070" />
<rect x="704.0" y="188.7" width="0.9" height="1.3" fill="#7fe070" />
<rect x="688.2" y="190.5" width="0.9" height="1.3" fill="#7fe070" />
<rect x="687.5" y="189.6" width="0.9" height="1.3" fill="#7fe070" />
<rect x="688.6" y="185.2" width="0.9" height="1.3" fill="#7fe070" />
<rect x="700.3" y="194.6" width="0.9" height="1.3" fill="#7fe070" />
<rect x="690.4" y="186.9" width="0.9" height="1.3" fill="#7fe070" />
<rect x="707.0" y="196.1" width="0.9" height="1.3" fill="#7fe070" />
<rect x="705.3" y="189.1" width="0.9" height="1.3" fill="#7fe070" />
<rect x="718.5" y="184.6" width="0.9" height="1.3" fill="#7fe070" />
<rect x="714.6" y="187.7" width="0.9" height="1.3" fill="#7fe070" />
<rect x="691.1" y="185.5" width="0.9" height="1.3" fill="#7fe070" />
<rect x="696.5" y="194.4" width="0.9" height="1.3" fill="#7fe070" />
<rect x="692.3" y="191.4" width="0.9" height="1.3" fill="#7fe070" />
<rect x="707.4" y="188.8" width="0.9" height="1.3" fill="#7fe070" />
<rect x="704.4" y="184.8" width="0.9" height="1.3" fill="#7fe070" />
<rect x="688.3" y="186.6" width="0.9" height="1.3" fill="#7fe070" />
<rect x="708.8" y="189.5" width="0.9" height="1.3" fill="#7fe070" />
<rect x="696.7" y="191.5" width="0.9" height="1.3" fill="#7fe070" />
<rect x="701.3" y="187.8" width="0.9" height="1.3" fill="#7fe070" />
<rect x="712.5" y="192.9" width="0.9" height="1.3" fill="#7fe070" />
<rect x="694.4" y="191.4" width="0.9" height="1.3" fill="#7fe070" />
<rect x="703.6" y="195.2" width="0.9" height="1.3" fill="#7fe070" />
<rect x="710.4" y="187.7" width="0.9" height="1.3" fill="#7fe070" />
<rect x="718.6" y="185.5" width="0.9" height="1.3" fill="#7fe070" />
<path d="M697.7,185.5 H708.5 V181.0 L718.9,189.4 L708.5,197.8 V193.3 H697.7 Z" fill="url(#arw)" stroke="#e8501a" stroke-width="0.5"/>
</g>
<g transform="translate(0,0)" filter="url(#soft)">
<path d="M19.5,235.3 Q21.5,234.4 23.4,235.8 L39.6,247.6 Q40.8,248.8 39.6,250.2 L23.4,263.2 Q21.5,264.6 19.5,263.4 L16.4,260.4 Q15.4,259 16.8,257.8 L28.6,249 L16.8,241 Q15.4,239.8 16.4,238.4 Z" fill="url(#chev)" stroke="#2a78d8" stroke-width="0.5"/>
<ellipse cx="43.9" cy="240" rx="8" ry="7" fill="#eef0f8" stroke="#c0c8e0" stroke-width="0.8"/>
<ellipse cx="43.9" cy="243" rx="6" ry="3.4" fill="#c8d4f0"/>
<text x="43.4" y="244" font-size="11.5" fill="#e83a10" text-anchor="middle" font-weight="bold" font-family="'Liberation Serif',serif" stroke="#e83a10" stroke-width="0.5">1</text>
</g>
<path d="M61,258 h5.6 l-2.8,2.8 z" fill="#000"/>
<rect x="15" y="287" width="48.2" height="36" fill="none" stroke="#fe0000" stroke-width="2.2"/>
<g transform="translate(0,0)" filter="url(#soft)">
<rect x="17" y="289" width="44" height="32" rx="1.5" fill="url(#grn)"/>
<rect x="59.4" y="290" width="1.6" height="31" fill="#1e7a10" />
<rect x="18" y="319.2" width="43" height="1.8" fill="#1e7a10" />
<rect x="17" y="289" width="1.2" height="32" fill="#a8f080" />
<path d="M28.48,294.5 L50.08,305.0 L28.48,315.5 Z M32.48,300.2 L41.88,305.0 L32.48,309.8 Z" fill="#fff" fill-rule="evenodd"/>
</g>
<g transform="translate(0,0)" filter="url(#dis)">
<rect x="16" y="342.8" width="44" height="34" rx="1.5" fill="url(#org)" stroke="#c83c14" stroke-width="1"/>
<rect x="58.4" y="343.8" width="1.6" height="33" fill="#b83010" />
<rect x="17" y="375.0" width="43" height="1.8" fill="#b83010" />
<rect x="16.8" y="343.6" width="1.2" height="32" fill="#fcb090" />
<rect x="16.8" y="343.6" width="42" height="1.2" fill="#fcb090" />
<rect x="27.5" y="351.1" width="20.4" height="14.8" fill="#fbe4da" stroke="#fff" stroke-width="3.4"/>
<rect x="32.3" y="354.40000000000003" width="10.6" height="8.8" fill="#f2622c"/>
<circle cx="49.5" cy="368.40000000000003" r="7.2" fill="none" stroke="#e4e4ee" stroke-width="3.2"/>
<path d="M40.0,361.90000000000003 l8.6,-5.2 l0.6,9 z" fill="#e4e4ee"/>
</g>
<g transform="translate(5.2,41.5) scale(0.9)">
<path d="M51.2,407.6 A19,15.200000000000001 0 0,1 37.3,429.0" fill="none" stroke="#c4c4d2" stroke-width="2.2" stroke-opacity="0.9"/>
<path d="M55.3,406.1 A23.5,18.8 0 0,1 38.1,432.5" fill="none" stroke="#c4c4d2" stroke-width="2.2" stroke-opacity="0.7"/>
<path d="M59.4,404.5 A28,22.400000000000002 0 0,1 38.9,436.1" fill="none" stroke="#c4c4d2" stroke-width="2.2" stroke-opacity="0.5"/>
<circle cx="22" cy="412.5" r="5.6" fill="#d4d4de" stroke="#bcbccc" stroke-width="0.6"/>
<ellipse cx="36.5" cy="417.5" rx="12" ry="15.5" fill="#c2c2d2" stroke="#b2b2c4" stroke-width="0.8" transform="rotate(-40 36.5 417.5)"/>
<ellipse cx="34.5" cy="415.5" rx="8.6" ry="11.6" fill="#d6d6e2" stroke="#b8b8ca" stroke-width="0.8" transform="rotate(-40 34.5 415.5)"/>
<ellipse cx="32.4" cy="413.6" rx="4.8" ry="6.6" fill="#e6e6ee" stroke="#c0c0d0" stroke-width="0.7" transform="rotate(-40 32.4 413.6)"/>
</g>
<g transform="translate(0,0)" filter="url(#soft)">
<path d="M43.7,482.5 L58.5,492.0" stroke="#8c8c94" stroke-width="6.4" stroke-linecap="round"/>
<path d="M45.7,483.8 L56.6,490.8" stroke="url(#hand)" stroke-width="5.4"/>
<path d="M43.2,482.2 L45.800000000000004,483.9" stroke="#e8e8ee" stroke-width="5.4"/>
<ellipse cx="34.2" cy="474.2" rx="13.2" ry="10.3" fill="url(#lens)" stroke="#8594a8" stroke-width="1.5"/>
<text x="26.6" y="477.59999999999997" font-size="10.5" fill="#10102c" text-anchor="start" font-weight="bold" font-family="'Liberation Serif',serif" textLength="15.4" lengthAdjust="spacingAndGlyphs" >1:1</text>
</g>
<g transform="translate(0,0)" filter="url(#soft)">
<path d="M43.7,537.3 L58.5,546.8" stroke="#8c8c94" stroke-width="6.4" stroke-linecap="round"/>
<path d="M45.7,538.6 L56.6,545.6" stroke="url(#hand)" stroke-width="5.4"/>
<path d="M43.2,537 L45.800000000000004,538.7" stroke="#e8e8ee" stroke-width="5.4"/>
<ellipse cx="34.2" cy="529" rx="13.2" ry="10.3" fill="url(#lens)" stroke="#8594a8" stroke-width="1.5"/>
<path d="M32.7,522 h5 v4.5 h4.5 v5 h-4.5 v4.5 h-5 v-4.5 h-4.5 v-5 h4.5 z" fill="#3fc020" stroke="#1e8a10" stroke-width="0.8" transform="translate(-1,0)"/>
</g>
<g transform="translate(0,0)" filter="url(#soft)">
<path d="M43.7,592.3 L58.5,601.8" stroke="#8c8c94" stroke-width="6.4" stroke-linecap="round"/>
<path d="M45.7,593.6 L56.6,600.6" stroke="url(#hand)" stroke-width="5.4"/>
<path d="M43.2,592 L45.800000000000004,593.7" stroke="#e8e8ee" stroke-width="5.4"/>
<ellipse cx="34.2" cy="584" rx="13.2" ry="10.3" fill="url(#lens)" stroke="#8594a8" stroke-width="1.5"/>
<rect x="26.200000000000003" y="581" width="14.5" height="4.6" fill="#ee4422" stroke="#b82a10" stroke-width="0.7"/>
</g>
<g transform="translate(716.7,0)" filter="url(#soft)">
<path d="M45.5,251.0 L45.0,253.8 L40.2,254.8 L39.1,256.7 L40.7,261.4 L38.4,263.3 L34.1,260.9 L32.1,261.7 L30.3,266.2 L27.3,266.2 L25.5,261.7 L23.5,260.9 L19.2,263.3 L16.9,261.4 L18.5,256.7 L17.4,254.8 L12.6,253.8 L12.1,251.0 L16.2,248.4 L16.6,246.2 L13.6,242.4 L15.0,239.9 L19.9,240.6 L21.6,239.2 L21.7,234.3 L24.5,233.3 L27.7,236.9 L29.9,236.9 L33.1,233.3 L35.9,234.3 L36.0,239.2 L37.7,240.6 L42.6,239.9 L44.0,242.4 L41.0,246.2 L41.4,248.4 Z M33.4,248.5 a4.6,4 0 1,0 -9.2,0 a4.6,4 0 1,0 9.2,0 Z" fill="#dcdcdc" fill-rule="evenodd" stroke="#c2c2c2" stroke-width="1"/>
<circle cx="28.8" cy="248.5" r="8" fill="none" stroke="#cfcfcf" stroke-width="1.6"/>
<path d="M37.5,251 L52.7,259 L37.5,266.4 Z" fill="#bcbcd2" stroke="#b0b0c6" stroke-width="0.5"/>
</g>
<path d="M777.0,257.4 h5.2 l-2.6,2.6 z" fill="#a8a8a8"/>
<g transform="translate(0,0)" filter="url(#dis)">
<rect x="734.3" y="288.5" width="42.2" height="32.7" rx="1.5" fill="url(#grn)"/>
<rect x="774.9" y="289.5" width="1.6" height="31.700000000000003" fill="#1e7a10" />
<rect x="735.3" y="319.4" width="41.2" height="1.8" fill="#1e7a10" />
<rect x="734.3" y="288.5" width="1.2" height="32.7" fill="#a8f080" />
<path d="M744.9339999999999,294.35 L766.5339999999999,304.85 L744.9339999999999,315.35 Z M748.9339999999999,300.05 L758.334,304.85 L748.9339999999999,309.65000000000003 Z" fill="#fff" fill-rule="evenodd"/>
</g>
<g transform="translate(0,0)" filter="url(#soft)">
<rect x="733" y="343.4" width="42.7" height="32.6" rx="1.5" fill="url(#org)" stroke="#c83c14" stroke-width="1"/>
<rect x="774.1" y="344.4" width="1.6" height="31.6" fill="#b83010" />
<rect x="734" y="374.2" width="41.7" height="1.8" fill="#b83010" />
<rect x="733.8" y="344.2" width="1.2" height="30.6" fill="#fcb090" />
<rect x="733.8" y="344.2" width="40.7" height="1.2" fill="#fcb090" />
<rect x="744.5" y="351.7" width="20.4" height="14.8" fill="#fbe4da" stroke="#fff" stroke-width="3.4"/>
<rect x="749.3" y="355.0" width="10.6" height="8.8" fill="#f2622c"/>
<circle cx="766.5" cy="369.0" r="7.2" fill="none" stroke="#2a80e4" stroke-width="3.2"/>
<path d="M757.0,362.5 l8.6,-5.2 l0.6,9 z" fill="#2a80e4"/>
</g>
<g transform="translate(719.9000000000001,41.5) scale(0.9)">
<path d="M51.2,407.6 A19,15.200000000000001 0 0,1 37.3,429.0" fill="none" stroke="#c4c4d2" stroke-width="2.2" stroke-opacity="0.9"/>
<path d="M55.3,406.1 A23.5,18.8 0 0,1 38.1,432.5" fill="none" stroke="#c4c4d2" stroke-width="2.2" stroke-opacity="0.7"/>
<path d="M59.4,404.5 A28,22.400000000000002 0 0,1 38.9,436.1" fill="none" stroke="#c4c4d2" stroke-width="2.2" stroke-opacity="0.5"/>
<circle cx="22" cy="412.5" r="5.6" fill="#d4d4de" stroke="#bcbccc" stroke-width="0.6"/>
<ellipse cx="36.5" cy="417.5" rx="12" ry="15.5" fill="#c2c2d2" stroke="#b2b2c4" stroke-width="0.8" transform="rotate(-40 36.5 417.5)"/>
<ellipse cx="34.5" cy="415.5" rx="8.6" ry="11.6" fill="#d6d6e2" stroke="#b8b8ca" stroke-width="0.8" transform="rotate(-40 34.5 415.5)"/>
<ellipse cx="32.4" cy="413.6" rx="4.8" ry="6.6" fill="#e6e6ee" stroke="#c0c0d0" stroke-width="0.7" transform="rotate(-40 32.4 413.6)"/>
</g>
<g transform="translate(0,0)" filter="url(#soft)">
<path d="M760.4000000000001,482.5 L775.2,492.0" stroke="#8c8c94" stroke-width="6.4" stroke-linecap="round"/>
<path d="M762.4000000000001,483.8 L773.3000000000001,490.8" stroke="url(#hand)" stroke-width="5.4"/>
<path d="M759.9000000000001,482.2 L762.5000000000001,483.9" stroke="#e8e8ee" stroke-width="5.4"/>
<ellipse cx="750.9000000000001" cy="474.2" rx="13.2" ry="10.3" fill="url(#lens)" stroke="#8594a8" stroke-width="1.5"/>
<text x="743.3000000000001" y="477.59999999999997" font-size="10.5" fill="#10102c" text-anchor="start" font-weight="bold" font-family="'Liberation Serif',serif" textLength="15.4" lengthAdjust="spacingAndGlyphs" >1:1</text>
</g>
<g transform="translate(0,0)" filter="url(#soft)">
<path d="M760.4000000000001,537.3 L775.2,546.8" stroke="#8c8c94" stroke-width="6.4" stroke-linecap="round"/>
<path d="M762.4000000000001,538.6 L773.3000000000001,545.6" stroke="url(#hand)" stroke-width="5.4"/>
<path d="M759.9000000000001,537 L762.5000000000001,538.7" stroke="#e8e8ee" stroke-width="5.4"/>
<ellipse cx="750.9000000000001" cy="529" rx="13.2" ry="10.3" fill="url(#lens)" stroke="#8594a8" stroke-width="1.5"/>
<path d="M749.4000000000001,522 h5 v4.5 h4.5 v5 h-4.5 v4.5 h-5 v-4.5 h-4.5 v-5 h4.5 z" fill="#3fc020" stroke="#1e8a10" stroke-width="0.8" transform="translate(-1,0)"/>
</g>
<g transform="translate(0,0)" filter="url(#soft)">
<path d="M760.4000000000001,592.3 L775.2,601.8" stroke="#8c8c94" stroke-width="6.4" stroke-linecap="round"/>
<path d="M762.4000000000001,593.6 L773.3000000000001,600.6" stroke="url(#hand)" stroke-width="5.4"/>
<path d="M759.9000000000001,592 L762.5000000000001,593.7" stroke="#e8e8ee" stroke-width="5.4"/>
<ellipse cx="750.9000000000001" cy="584" rx="13.2" ry="10.3" fill="url(#lens)" stroke="#8594a8" stroke-width="1.5"/>
<rect x="742.9000000000001" y="581" width="14.5" height="4.6" fill="#ee4422" stroke="#b82a10" stroke-width="0.7"/>
</g>
<clipPath id="clipPL"><rect x="141" y="333" width="548" height="379"/></clipPath>
<g clip-path="url(#clipPL)">
<rect x="203.2" y="333" width="1" height="379" fill="#b4a62c"/>
<path fill="#f2f224" d="M174.8 413.5h6.2v1.7h-6.2zM174.8 416.5h6.2v1.7h-6.2zM174.8 419.5h6.2v1.7h-6.2zM174.8 422.5h6.2v1.7h-6.2zM188 413.5h6.2v1.7h-6.2zM188 416.5h6.2v1.7h-6.2zM188 419.5h6.2v1.7h-6.2zM188 422.5h6.2v1.7h-6.2zM203.3 413.5h6.2v1.7h-6.2zM203.3 416.5h6.2v1.7h-6.2zM203.3 419.5h6.2v1.7h-6.2zM203.3 422.5h6.2v1.7h-6.2zM220 413.5h6.2v1.7h-6.2zM220 416.5h6.2v1.7h-6.2zM220 419.5h6.2v1.7h-6.2zM220 422.5h6.2v1.7h-6.2zM237.3 415.4h1.9v3.6h-1.9zM241.1 415.4h1.9v3.6h-1.9zM244.8 415.4h1.9v3.6h-1.9zM248.6 415.4h1.9v3.6h-1.9zM256.1 415.4h1.9v3.6h-1.9zM259.8 415.4h1.9v3.6h-1.9zM263.6 415.4h1.9v3.6h-1.9zM267.3 415.4h1.9v3.6h-1.9zM274.8 415.4h1.9v3.6h-1.9zM278.6 415.4h1.9v3.6h-1.9zM282.3 415.4h1.9v3.6h-1.9zM286.1 415.4h1.9v3.6h-1.9zM289.8 415.4h1.9v3.6h-1.9zM297.3 415.4h1.9v3.6h-1.9zM301.1 415.4h1.9v3.6h-1.9zM304.8 415.4h1.9v3.6h-1.9zM308.6 415.4h1.9v3.6h-1.9zM316.1 415.4h1.9v3.6h-1.9zM319.8 415.4h1.9v3.6h-1.9zM323.6 415.4h1.9v3.6h-1.9zM327.3 415.4h1.9v3.6h-1.9zM331.1 415.4h1.9v3.6h-1.9zM334.8 415.4h1.9v3.6h-1.9zM342.3 415.4h1.9v3.6h-1.9zM346.1 415.4h1.9v3.6h-1.9zM349.8 415.4h1.9v3.6h-1.9zM353.6 415.4h1.9v3.6h-1.9zM361.1 415.4h1.9v3.6h-1.9zM364.8 415.4h1.9v3.6h-1.9zM368.6 415.4h1.9v3.6h-1.9zM372.3 415.4h1.9v3.6h-1.9zM199.8 426h1.9v4h-1.9zM216.5 426h1.9v4h-1.9zM232 426h1.9v4h-1.9zM236 426h1.9v4h-1.9zM205.5 426.5h1.2v1.2h-1.2zM207.5 426.5h1.2v1.2h-1.2zM222 426.5h1.2v1.2h-1.2zM226 426.5h1.2v1.2h-1.2zM204 430.6h2.2v1.2h-2.2zM221 430.6h2.2v1.2h-2.2zM260 438.3h1.2v3.3h-1.2zM262 438.3h1.2v3.3h-1.2zM264 438.3h1.2v3.3h-1.2zM266 438.3h1.2v3.3h-1.2zM268 438.3h1.2v3.3h-1.2zM270 438.3h1.2v3.3h-1.2zM272 438.3h1.2v3.3h-1.2zM274 438.3h1.2v3.3h-1.2zM276 438.3h1.2v3.3h-1.2zM278 438.3h1.2v3.3h-1.2zM280 438.3h1.2v3.3h-1.2zM282 438.3h1.2v3.3h-1.2zM284 438.3h1.2v3.3h-1.2zM286 438.3h1.2v3.3h-1.2zM288 438.3h1.2v3.3h-1.2zM290 438.3h1.2v3.3h-1.2zM292 438.3h1.2v3.3h-1.2zM294 438.3h1.2v3.3h-1.2zM296 438.3h1.2v3.3h-1.2zM260 457.5h1.2v3.3h-1.2zM262 457.5h1.2v3.3h-1.2zM264 457.5h1.2v3.3h-1.2zM266 457.5h1.2v3.3h-1.2zM268 457.5h1.2v3.3h-1.2zM270 457.5h1.2v3.3h-1.2zM272 457.5h1.2v3.3h-1.2zM274 457.5h1.2v3.3h-1.2zM276 457.5h1.2v3.3h-1.2zM278 457.5h1.2v3.3h-1.2zM280 457.5h1.2v3.3h-1.2zM282 457.5h1.2v3.3h-1.2zM284 457.5h1.2v3.3h-1.2zM286 457.5h1.2v3.3h-1.2zM288 457.5h1.2v3.3h-1.2zM290 457.5h1.2v3.3h-1.2zM292 457.5h1.2v3.3h-1.2zM294 457.5h1.2v3.3h-1.2zM296 457.5h1.2v3.3h-1.2zM335 438.3h1.2v3.3h-1.2zM337 438.3h1.2v3.3h-1.2zM339 438.3h1.2v3.3h-1.2zM341 438.3h1.2v3.3h-1.2zM343 438.3h1.2v3.3h-1.2zM345 438.3h1.2v3.3h-1.2zM347 438.3h1.2v3.3h-1.2zM349 438.3h1.2v3.3h-1.2zM351 438.3h1.2v3.3h-1.2zM353 438.3h1.2v3.3h-1.2zM355 438.3h1.2v3.3h-1.2zM357 438.3h1.2v3.3h-1.2zM359 438.3h1.2v3.3h-1.2zM361 438.3h1.2v3.3h-1.2zM363 438.3h1.2v3.3h-1.2zM365 438.3h1.2v3.3h-1.2zM367 438.3h1.2v3.3h-1.2zM369 438.3h1.2v3.3h-1.2zM371 438.3h1.2v3.3h-1.2zM335 457.5h1.2v3.3h-1.2zM337 457.5h1.2v3.3h-1.2zM339 457.5h1.2v3.3h-1.2zM341 457.5h1.2v3.3h-1.2zM343 457.5h1.2v3.3h-1.2zM345 457.5h1.2v3.3h-1.2zM347 457.5h1.2v3.3h-1.2zM349 457.5h1.2v3.3h-1.2zM351 457.5h1.2v3.3h-1.2zM353 457.5h1.2v3.3h-1.2zM355 457.5h1.2v3.3h-1.2zM357 457.5h1.2v3.3h-1.2zM359 457.5h1.2v3.3h-1.2zM361 457.5h1.2v3.3h-1.2zM363 457.5h1.2v3.3h-1.2zM365 457.5h1.2v3.3h-1.2zM367 457.5h1.2v3.3h-1.2zM369 457.5h1.2v3.3h-1.2zM371 457.5h1.2v3.3h-1.2zM292 429.4h2v4.2h-2zM296.7 429.4h2v4.2h-2zM367.5 429.4h2v4.2h-2zM372.3 429.4h2v4.2h-2zM255 432.5h1.9v3.2h-1.9zM331 431.5h1.9v3.2h-1.9zM303 464h2v3.8h-2zM307 464h2v3.8h-2zM368.5 464h2v3.8h-2zM372.7 464h2v3.8h-2zM260.8 465.2h1.6v3h-1.6zM331.7 465.2h1.9v3.6h-1.9zM382 466h1.9v3.6h-1.9zM196.7 448.7h1.8v3.8h-1.8zM203.3 450.6h5v1.5h-5zM203.3 453.4h5v1.5h-5zM203.3 456.2h5v1.5h-5zM203.3 459h5v1.5h-5zM219 450.6h6.2v1.5h-6.2zM219 453.4h6.2v1.5h-6.2zM219 456.2h6.2v1.5h-6.2zM219 459h6.2v1.5h-6.2zM231.7 451h1.8v3.8h-1.8zM210 464h2v4.4h-2zM216.5 464h2v4.4h-2zM210 471h2v4.4h-2zM216.5 471h2v4.4h-2zM190.8 484.6h1.8v3.2h-1.8zM190.8 497.5h1.8v3.6h-1.8zM230.6 480.8h2v4.8h-2zM234.8 480.8h2v4.8h-2zM230.6 488h2v4h-2zM234.8 488h2v4h-2zM231 502.3h2v1.6h-2zM239 502.3h2v1.6h-2zM254 502.3h2v1.6h-2zM228.5 506.3h1.7v2.2h-1.7zM232.5 506.3h1.7v2.2h-1.7zM236.5 506.3h1.7v2.2h-1.7zM243 506.3h1.7v2.2h-1.7zM251.8 506.3h1.7v2.2h-1.7zM256.5 506.3h1.7v2.2h-1.7zM226.5 515h1.8v1.8h-1.8zM230.4 515h1.8v1.8h-1.8zM234.3 515h1.8v1.8h-1.8zM240 515h1.8v1.8h-1.8zM386.7 418.5h5.6v1.6h-5.6zM386.7 421.4h5.6v1.6h-5.6zM386.7 424.3h5.6v1.6h-5.6zM386.7 427.2h5.6v1.6h-5.6zM395.6 418.5h5.6v1.6h-5.6zM395.6 421.4h5.6v1.6h-5.6zM395.6 424.3h5.6v1.6h-5.6zM395.6 427.2h5.6v1.6h-5.6zM404 418.5h5.6v1.6h-5.6zM404 421.4h5.6v1.6h-5.6zM404 424.3h5.6v1.6h-5.6zM404 427.2h5.6v1.6h-5.6zM412.3 418.5h5.6v1.6h-5.6zM412.3 421.4h5.6v1.6h-5.6zM412.3 424.3h5.6v1.6h-5.6zM412.3 427.2h5.6v1.6h-5.6zM421 418.5h5.6v1.6h-5.6zM421 421.4h5.6v1.6h-5.6zM421 424.3h5.6v1.6h-5.6zM421 427.2h5.6v1.6h-5.6zM429.7 418.5h5.6v1.6h-5.6zM429.7 421.4h5.6v1.6h-5.6zM429.7 424.3h5.6v1.6h-5.6zM429.7 427.2h5.6v1.6h-5.6zM437.5 418.5h5.6v1.6h-5.6zM437.5 421.4h5.6v1.6h-5.6zM437.5 424.3h5.6v1.6h-5.6zM437.5 427.2h5.6v1.6h-5.6zM446.8 418.5h5.6v1.6h-5.6zM446.8 421.4h5.6v1.6h-5.6zM446.8 424.3h5.6v1.6h-5.6zM446.8 427.2h5.6v1.6h-5.6zM391.5 446.3h4.2v1.5h-4.2zM391.5 449.3h4.2v1.5h-4.2zM401 446.3h5v1.5h-5zM401 449.3h5v1.5h-5zM413.3 446h1.8v4h-1.8zM388 455h5.6v1.7h-5.6zM388 457.9h5.6v1.7h-5.6zM388 460.8h5.6v1.7h-5.6zM388 463.7h5.6v1.7h-5.6zM405 455h5.6v1.7h-5.6zM405 457.9h5.6v1.7h-5.6zM405 460.8h5.6v1.7h-5.6zM405 463.7h5.6v1.7h-5.6zM392 468.8h5.6v1.6h-5.6zM392 471.8h5.6v1.6h-5.6zM401 468.8h5v1.6h-5zM401 471.8h5v1.6h-5zM414.3 468h1.8v4.4h-1.8zM383.4 491.3h1.8v3.4h-1.8zM387.4 491.3h1.8v3.4h-1.8zM425 491.3h1.8v3.4h-1.8zM429 491.3h1.8v3.4h-1.8zM376.8 501.5h1.6v4h-1.6zM383 498.8h1.2v3.4h-1.2zM385.7 498.8h1.2v3.4h-1.2zM388.4 498.8h1.2v3.4h-1.2zM391.1 498.8h1.2v3.4h-1.2zM393.8 498.8h1.2v3.4h-1.2zM396.5 498.8h1.2v3.4h-1.2zM383 510.6h1.2v3.4h-1.2zM385.7 510.6h1.2v3.4h-1.2zM388.4 510.6h1.2v3.4h-1.2zM391.1 510.6h1.2v3.4h-1.2zM393.8 510.6h1.2v3.4h-1.2zM396.5 510.6h1.2v3.4h-1.2zM417.4 501h1.6v3.6h-1.6zM403 504.4h1.9v4.2h-1.9zM407.5 504.4h1.9v4.2h-1.9zM599 348h2.8v1.5h-2.8zM466.3 374.7h1.6v4h-1.6zM469.6 374.7h1.6v4h-1.6zM472.9 374.7h1.6v4h-1.6zM476.2 374.7h1.6v4h-1.6zM479.5 374.7h1.6v4h-1.6zM482.8 374.7h1.6v4h-1.6zM486.1 374.7h1.6v4h-1.6zM489.4 374.7h1.6v4h-1.6zM460.4 384.4h2.2v3.9h-2.2zM463.4 384.4h2.2v3.9h-2.2zM471.5 384.4h2.2v3.9h-2.2zM474.6 384.4h2.2v3.9h-2.2zM480.3 386.6h1.2v1.2h-1.2zM482.4 386.6h1.2v1.2h-1.2zM480.3 389.6h1.2v1.2h-1.2zM482.4 389.6h1.2v1.2h-1.2zM501.7 390.4h2v1h-2zM507.5 389.4h1.1v1.1h-1.1zM509.3 389.4h1.1v1.1h-1.1zM507.5 392h1.1v1.1h-1.1zM509.3 392h1.1v1.1h-1.1zM513 389.5h2v4.5h-2zM519.4 392h1.2v1.6h-1.2zM460.4 395h5.5v1.6h-5.5zM460.4 398h5.5v1.6h-5.5zM460.4 401h5.5v1.6h-5.5zM467 395h5.5v1.6h-5.5zM467 398h5.5v1.6h-5.5zM467 401h5.5v1.6h-5.5zM487 397.6h1.8v3.8h-1.8zM500.2 397.6h1.8v4h-1.8zM509.2 397.8h1.8v4.4h-1.8zM516.2 397h2v1.5h-2zM519.2 397.6h1.6v1.2h-1.6zM521.3 397h2v1.5h-2zM534.3 401h2v4h-2zM539 401h2v4h-2zM546 400h2.1v6h-2.1zM534.3 408.7h2v4.5h-2zM539 408.7h2v4.5h-2zM546.4 408.7h2v4.5h-2zM550.7 408.7h2v4.5h-2zM555 408.7h2v4.5h-2zM532.4 415h1.7v4.8h-1.7zM535.7 415h1.7v4.8h-1.7zM539 415h1.7v4.8h-1.7zM542.3 415h1.7v4.8h-1.7zM545.6 415h1.7v4.8h-1.7zM548.9 415h1.7v4.8h-1.7zM552.2 415h1.7v4.8h-1.7zM560.4 415.5h1.7v6.9h-1.7zM525 421.4h2v3.6h-2zM525 428h2v3.6h-2zM532.4 427.8h1.7v3.8h-1.7zM535.7 427.8h1.7v3.8h-1.7zM539 427.8h1.7v3.8h-1.7zM542.3 427.8h1.7v3.8h-1.7zM545.6 427.8h1.7v3.8h-1.7zM548.9 427.8h1.7v3.8h-1.7zM552.2 427.8h1.7v3.8h-1.7zM552 433h2v4h-2zM549.3 389.8h1.7v4.6h-1.7zM584.9 389.8h1.7v4.6h-1.7zM620.9 389.8h1.7v4.6h-1.7zM557.7 388h6.2v1.5h-6.2zM594 388h6.2v1.5h-6.2zM629 388h6.2v1.5h-6.2zM421.5 446.5h6.2v1.6h-6.2zM421.5 449.5h6.2v1.6h-6.2zM433.2 446.5h4.8v1.6h-4.8zM433.2 449.5h4.8v1.6h-4.8zM453 446.5h5.8v1.6h-5.8zM453 449.5h5.8v1.6h-5.8zM463.2 446.5h5.8v1.6h-5.8zM463.2 449.5h5.8v1.6h-5.8zM484.7 446.5h6.2v1.6h-6.2zM484.7 449.5h6.2v1.6h-6.2zM494.9 446.5h5.8v1.6h-5.8zM494.9 449.5h5.8v1.6h-5.8zM445.7 446.5h1.7v4.2h-1.7zM477.7 446.5h1.7v4.2h-1.7zM420 455h5.4v1.9h-5.4zM420 458.1h5.4v1.9h-5.4zM420 461.1h5.4v1.9h-5.4zM420 464.1h5.4v1.9h-5.4zM435 455h5.4v1.9h-5.4zM435 458.1h5.4v1.9h-5.4zM435 461.1h5.4v1.9h-5.4zM435 464.1h5.4v1.9h-5.4zM451 455h5.4v1.9h-5.4zM451 458.1h5.4v1.9h-5.4zM451 461.1h5.4v1.9h-5.4zM451 464.1h5.4v1.9h-5.4zM467.2 455h5.4v1.9h-5.4zM467.2 458.1h5.4v1.9h-5.4zM467.2 461.1h5.4v1.9h-5.4zM467.2 464.1h5.4v1.9h-5.4zM482.2 455h5.4v1.9h-5.4zM482.2 458.1h5.4v1.9h-5.4zM482.2 461.1h5.4v1.9h-5.4zM482.2 464.1h5.4v1.9h-5.4zM498 455h5.4v1.9h-5.4zM498 458.1h5.4v1.9h-5.4zM498 461.1h5.4v1.9h-5.4zM498 464.1h5.4v1.9h-5.4zM509 452h1.9v4.4h-1.9zM423 468.6h5.8v1.6h-5.8zM423 471.6h5.8v1.6h-5.8zM432 468.6h5v1.6h-5zM432 471.6h5v1.6h-5zM455 468.6h4.9v1.6h-4.9zM455 471.6h4.9v1.6h-4.9zM463.2 468.6h5v1.6h-5zM463.2 471.6h5v1.6h-5zM486.1 468.6h5.4v1.6h-5.4zM486.1 471.6h5.4v1.6h-5.4zM494.3 468.6h5.8v1.6h-5.8zM494.3 471.6h5.8v1.6h-5.8zM445.3 467.2h1.7v4.4h-1.7zM477.7 467.2h1.7v4.4h-1.7zM533.7 485.4h1.8v4.4h-1.8zM424.3 491h1.7v3.6h-1.7zM428.2 491h1.7v3.6h-1.7zM465.7 491h1.7v3.6h-1.7zM469.6 491h1.7v3.6h-1.7zM506.5 491h1.7v3.6h-1.7zM510.4 491h1.7v3.6h-1.7zM425 499h1.2v3.6h-1.2zM427.6 499h1.2v3.6h-1.2zM430.2 499h1.2v3.6h-1.2zM432.8 499h1.2v3.6h-1.2zM435.4 499h1.2v3.6h-1.2zM465 499h1.2v3.6h-1.2zM467.4 499h1.2v3.6h-1.2zM469.8 499h1.2v3.6h-1.2zM472.2 499h1.2v3.6h-1.2zM474.6 499h1.2v3.6h-1.2zM477 499h1.2v3.6h-1.2zM506 499h1.2v3.6h-1.2zM508.2 499h1.2v3.6h-1.2zM510.4 499h1.2v3.6h-1.2zM512.6 499h1.2v3.6h-1.2zM514.8 499h1.2v3.6h-1.2zM517 499h1.2v3.6h-1.2zM519.2 499h1.2v3.6h-1.2zM459.9 501h1.6v3.8h-1.6zM499.7 501h1.6v3.8h-1.6zM445 504h1.9v4.4h-1.9zM448.8 504h1.9v4.4h-1.9zM485.7 504h1.9v4.4h-1.9zM489.6 504h1.9v4.4h-1.9zM526 506.5h1.9v3.9h-1.9zM530 506.5h1.9v3.9h-1.9zM425 511.3h1.2v3.5h-1.2zM427.6 511.3h1.2v3.5h-1.2zM430.2 511.3h1.2v3.5h-1.2zM432.8 511.3h1.2v3.5h-1.2zM435.4 511.3h1.2v3.5h-1.2zM465 511.3h1.2v3.5h-1.2zM467.4 511.3h1.2v3.5h-1.2zM469.8 511.3h1.2v3.5h-1.2zM472.2 511.3h1.2v3.5h-1.2zM474.6 511.3h1.2v3.5h-1.2zM477 511.3h1.2v3.5h-1.2zM506 511.3h1.2v3.5h-1.2zM508.2 511.3h1.2v3.5h-1.2zM510.4 511.3h1.2v3.5h-1.2zM512.6 511.3h1.2v3.5h-1.2zM514.8 511.3h1.2v3.5h-1.2zM517 511.3h1.2v3.5h-1.2zM519.2 511.3h1.2v3.5h-1.2zM590 469h2v4.4h-2zM593.4 469h2v4.4h-2zM588 477.4h2v3.9h-2zM592 477.4h2v3.9h-2zM588 483.6h2v3.9h-2zM592 483.6h2v3.9h-2zM591 502h2v4h-2zM616 457.5h6.2v1.9h-6.2zM616 460.2h6.2v1.6h-6.2zM616 462.8h6.2v1.6h-6.2zM616 467.2h6.2v1.4h-6.2zM616 469.8h6.2v1.4h-6.2zM616 472.2h6.2v1.4h-6.2zM616 474.4h6.2v1.4h-6.2zM626 464.6h6v1.1h-6zM616 490.6h5.8v1.1h-5.8zM383 511.6h1.2v3.4h-1.2zM385.7 511.6h1.2v3.4h-1.2zM388.4 511.6h1.2v3.4h-1.2zM391.1 511.6h1.2v3.4h-1.2zM393.8 511.6h1.2v3.4h-1.2zM396.5 511.6h1.2v3.4h-1.2zM366.5 518h1.9v4h-1.9zM378.8 518h2v3.9h-2zM383 518h2v3.9h-2zM388 518h2v3.9h-2zM392.4 518h2v3.9h-2zM389 532.6h5.3v1.6h-5.3zM389 536h5.3v1.6h-5.3zM389 539.4h5.3v1.6h-5.3zM389 542.8h5.3v1.6h-5.3zM389 546.2h5.3v1.6h-5.3zM311 537.2h2.4v3.8h-2.4zM311 545h1.2v3h-1.2zM313.1 545h1.2v3h-1.2zM315.2 545h1.2v3h-1.2zM317.3 545h1.2v3h-1.2zM319.4 545h1.2v3h-1.2zM321.5 545h1.2v3h-1.2zM323.6 545h1.2v3h-1.2zM325.7 545h1.2v3h-1.2zM311 556.7h1.2v3.4h-1.2zM313.1 556.7h1.2v3.4h-1.2zM315.2 556.7h1.2v3.4h-1.2zM317.3 556.7h1.2v3.4h-1.2zM319.4 556.7h1.2v3.4h-1.2zM321.5 556.7h1.2v3.4h-1.2zM323.6 556.7h1.2v3.4h-1.2zM325.7 556.7h1.2v3.4h-1.2zM288.2 556.3h2v3.3h-2zM294.6 556.3h2v3.3h-2zM311 565h2v4h-2zM291.7 562.5h2v4.3h-2zM297.9 562.5h2v4.3h-2zM246.5 562h1.9v3.9h-1.9zM251.8 562h1.9v3.9h-1.9zM256.6 562h1.9v3.9h-1.9zM260.9 562h1.9v3.9h-1.9zM264.4 562h1.9v3.9h-1.9zM268.7 562h1.9v3.9h-1.9zM273.2 562h1.9v3.9h-1.9zM278 562h1.9v3.9h-1.9zM238 571.4h1.9v4.6h-1.9zM239.9 579.8h1.9v5h-1.9zM247.6 571.4h1.9v4.6h-1.9zM259.2 579.8h1.9v5h-1.9zM271.8 571.4h1.9v4.6h-1.9zM278.5 579.8h1.9v5h-1.9zM286.3 571.4h1.9v4.6h-1.9zM293 579.8h1.9v5h-1.9zM301.4 597.5h6.8v1.3h-6.8zM304.3 606.6h1.9v2h-1.9zM269.9 605.7h6.2v1.2h-6.2zM272.2 615.4h1.9v1.9h-1.9zM275 620.5h6v1.5h-6zM255 620.4h1.9v3.3h-1.9zM260 620.4h1.9v3.3h-1.9zM285.8 650.4h2v3.9h-2zM285.8 659.7h2v3.9h-2zM290.7 682.5h6.3v1.5h-6.3zM252.6 699h5.6v1.6h-5.6zM252.6 702h5.6v1.6h-5.6zM274.6 688h1.9v3.8h-1.9zM279 688h1.9v3.8h-1.9zM266.4 693.7h1.9v3.9h-1.9zM271.2 693.7h1.9v3.9h-1.9zM275.1 693.7h1.9v3.9h-1.9zM279.6 693.7h1.9v3.9h-1.9zM263.5 701.5h1.9v3.9h-1.9zM270.7 701.5h1.9v3.9h-1.9zM275.1 701.5h1.9v3.9h-1.9zM278.4 701.5h1.9v3.9h-1.9zM282 701.5h1.9v3.9h-1.9zM263.4 708h1.8v3h-1.8zM368.5 567.4h2v4.4h-2zM373.3 567.4h2v4.4h-2zM378.8 567.4h2v4.4h-2zM385.4 567.4h2v4.4h-2zM376.8 575h2v4.6h-2zM380.7 575h2v4.6h-2zM385 575h2v4.6h-2zM416.5 575.6h1.9v3.6h-1.9zM385.4 582.3h1.9v4.5h-1.9zM392.4 584h4.6v1.2h-4.6zM392.4 588.3h4.6v1.2h-4.6zM401 584h5v1.2h-5zM402.4 609.2h1.9v3.9h-1.9zM402.4 618h1.9v3.9h-1.9zM362.2 603.5h4.9v1.2h-4.9zM362.2 605.5h4.9v1.2h-4.9zM362.2 607.5h4.9v1.2h-4.9zM362.2 609.5h4.9v1.2h-4.9zM362.2 611.5h4.9v1.2h-4.9zM362.2 616.5h4.9v1.3h-4.9zM362.2 618.9h4.9v1.3h-4.9zM362.2 621.2h4.9v1.3h-4.9zM362.2 623.5h4.9v1.3h-4.9zM362.2 625.9h4.9v1.3h-4.9zM362.2 631h4.9v1.3h-4.9zM362.2 633.5h4.9v1.3h-4.9zM362.2 635.9h4.9v1.3h-4.9zM362.2 638.4h4.9v1.3h-4.9zM362.2 640.8h4.9v1.3h-4.9zM362.2 643.2h4.9v1.3h-4.9zM362.2 645.7h4.9v1.3h-4.9zM352.3 603.7h5.5v1.7h-5.5zM352.3 606.3h5.5v1.7h-5.5zM352.3 616h5.5v1.4h-5.5zM352.3 624.3h5v1.7h-5zM418.4 671.4h1.6v1.4h-1.6zM419.3 518.2h1.9v3.8h-1.9zM424.6 518.2h1.9v3.8h-1.9zM429.4 518.2h1.9v3.8h-1.9zM433.7 518.2h1.9v3.8h-1.9zM438.2 518.2h1.9v3.8h-1.9zM444 518.2h1.9v3.8h-1.9zM452.8 518.2h1.9v3.8h-1.9zM462 518.2h1.9v3.8h-1.9zM466 518.2h1.9v3.8h-1.9zM470.3 518.2h1.9v3.8h-1.9zM474.6 518.2h1.9v3.8h-1.9zM489.7 518.2h1.9v3.8h-1.9zM501.8 518.2h1.9v3.8h-1.9zM506.8 518.2h1.9v3.8h-1.9zM511 518.2h1.9v3.8h-1.9zM516 518.2h1.9v3.8h-1.9zM534 518.2h1.9v3.8h-1.9zM426.5 537.2h6.6v1.5h-6.6zM426.5 540.1h6.6v1.5h-6.6zM426.5 543h6.6v1.5h-6.6zM426.5 545.9h6.6v1.5h-6.6zM449.9 535.3h6.4v1.6h-6.4zM449.9 538.2h6.4v1.6h-6.4zM449.9 541.1h6.4v1.6h-6.4zM449.9 544h6.4v1.6h-6.4zM449.9 546.9h6.4v1.6h-6.4zM489 537.2h4.6v1.4h-4.6zM489 540.1h4.6v1.4h-4.6zM489 543h4.6v1.4h-4.6zM489 545.9h4.6v1.4h-4.6zM521.2 535.3h5.8v1.4h-5.8zM521.2 537.7h5.8v1.4h-5.8zM521.2 540.1h5.8v1.4h-5.8zM521.2 542.6h5.8v1.4h-5.8zM521.2 545h5.8v1.4h-5.8zM521.2 547.4h5.8v1.4h-5.8zM521.2 549.8h5.8v1.4h-5.8zM521.2 552.2h5.8v1.4h-5.8zM521.2 554.7h5.8v1.4h-5.8zM521.2 557.1h5.8v1.4h-5.8zM521.2 559.5h5.8v1.4h-5.8zM521.2 561.9h5.8v1.4h-5.8zM561.3 531h5.7v1.9h-5.7zM561.3 533.7h5.7v1.9h-5.7zM561.3 536.4h5.7v1.9h-5.7zM561.3 539.1h5.7v1.9h-5.7zM562.2 543.6h1.9v4.6h-1.9zM560 550.4h6v1.4h-6zM560 554.3h6v1.7h-6zM569 550.4h6.3v1.4h-6.3zM569 554.3h6.3v1.7h-6.3zM555.4 561.8h1.9v4h-1.9zM424.6 558h6v1.2h-6zM438.8 555.6h1.7v4.2h-1.7zM461 563h2v3.8h-2zM466 563h2v3.8h-2zM470.7 563h2v3.8h-2zM476 563h2v3.8h-2zM481 563h2v3.8h-2zM436.8 571.8h2v4.7h-2zM440.7 571.8h2v4.7h-2zM448.9 571.8h2v4.7h-2zM457.6 571.8h2v4.7h-2zM463.5 571.8h2v4.7h-2zM468.3 571.8h2v4.7h-2zM473.8 571.8h2v4.7h-2zM416.8 575h1.9v3.5h-1.9zM433.3 581h1.4v3.2h-1.4zM435.9 581h1.4v3.2h-1.4zM438.6 581h1.4v3.2h-1.4zM441.2 581h1.4v3.2h-1.4zM443.9 581h1.4v3.2h-1.4zM446.6 581h1.4v3.2h-1.4zM449.2 581h1.4v3.2h-1.4zM451.9 581h1.4v3.2h-1.4zM454.5 581h1.4v3.2h-1.4zM457.2 581h1.4v3.2h-1.4zM459.8 581h1.4v3.2h-1.4zM462.4 581h1.4v3.2h-1.4zM465.1 581h1.4v3.2h-1.4zM467.8 581h1.4v3.2h-1.4zM470.4 581h1.4v3.2h-1.4zM473.1 581h1.4v3.2h-1.4zM475.7 581h1.4v3.2h-1.4zM478.4 581h1.4v3.2h-1.4zM433.3 623.6h1.4v3.1h-1.4zM435.9 623.6h1.4v3.1h-1.4zM438.6 623.6h1.4v3.1h-1.4zM441.2 623.6h1.4v3.1h-1.4zM443.9 623.6h1.4v3.1h-1.4zM446.6 623.6h1.4v3.1h-1.4zM449.2 623.6h1.4v3.1h-1.4zM451.9 623.6h1.4v3.1h-1.4zM454.5 623.6h1.4v3.1h-1.4zM457.2 623.6h1.4v3.1h-1.4zM459.8 623.6h1.4v3.1h-1.4zM462.4 623.6h1.4v3.1h-1.4zM465.1 623.6h1.4v3.1h-1.4zM467.8 623.6h1.4v3.1h-1.4zM470.4 623.6h1.4v3.1h-1.4zM473.1 623.6h1.4v3.1h-1.4zM475.7 623.6h1.4v3.1h-1.4zM478.4 623.6h1.4v3.1h-1.4zM427.9 586.2h3.9v1.3h-3.9zM427.9 588.8h3.9v1.3h-3.9zM427.9 591.4h3.9v1.3h-3.9zM427.9 594.1h3.9v1.3h-3.9zM427.9 596.7h3.9v1.3h-3.9zM427.9 599.3h3.9v1.3h-3.9zM427.9 601.9h3.9v1.3h-3.9zM427.9 604.5h3.9v1.3h-3.9zM427.9 607.2h3.9v1.3h-3.9zM427.9 609.8h3.9v1.3h-3.9zM427.9 612.4h3.9v1.3h-3.9zM427.9 615h3.9v1.3h-3.9zM427.9 617.6h3.9v1.3h-3.9zM427.9 620.3h3.9v1.3h-3.9zM482.9 586.2h3.9v1.3h-3.9zM482.9 588.8h3.9v1.3h-3.9zM482.9 591.4h3.9v1.3h-3.9zM482.9 594.1h3.9v1.3h-3.9zM482.9 596.7h3.9v1.3h-3.9zM482.9 599.3h3.9v1.3h-3.9zM482.9 601.9h3.9v1.3h-3.9zM482.9 604.5h3.9v1.3h-3.9zM482.9 607.2h3.9v1.3h-3.9zM482.9 609.8h3.9v1.3h-3.9zM482.9 612.4h3.9v1.3h-3.9zM482.9 615h3.9v1.3h-3.9zM482.9 617.6h3.9v1.3h-3.9zM482.9 620.3h3.9v1.3h-3.9zM413.9 584.9h5.8v1.4h-5.8zM413.9 588.5h5.8v1.7h-5.8zM413.9 595.4h5.8v2h-5.8zM413.9 600.2h5.8v2h-5.8zM413.9 604.7h5.8v2h-5.8zM413.9 610h5.8v2h-5.8zM413.9 616.6h5.8v2.4h-5.8zM413.9 621.6h5.8v2.2h-5.8zM413.9 625.6h5.8v2.2h-5.8zM494.6 579.6h1.9v4.2h-1.9zM499 579.6h1.9v4.2h-1.9zM506.8 579.6h2.3v4.2h-2.3zM493.2 591.3h6.2v1.4h-6.2zM493.2 596.5h6.2v1.4h-6.2zM493.2 601.4h6.2v2h-6.2zM493.2 607.2h6.2v1.6h-6.2zM493.2 610.1h6.2v2h-6.2zM493.2 619.9h6.2v1h-6.2zM503.3 590.7h4.9v1.4h-4.9zM503.3 595.6h4.9v1.6h-4.9zM503.3 600.4h4.9v2h-4.9zM503.3 605.7h4.9v1.2h-4.9zM511.1 590.7h5.8v1.4h-5.8zM511.1 596.5h5.8v1.4h-5.8zM511.1 601h5.8v2h-5.8zM504.9 619.9h6.2v1.4h-6.2zM504.9 623.2h6.2v1.6h-6.2zM514 623.7h5.9v1.1h-5.9zM497.9 628.6h5.8v1.2h-5.8zM424.6 632.9h1.9v4.4h-1.9zM440 632.9h1.9v4.4h-1.9zM446 632.9h1.9v4.4h-1.9zM454.7 632.9h1.9v4.4h-1.9zM460 632.9h1.9v4.4h-1.9zM470.7 632.9h1.9v4.4h-1.9zM477 632.9h1.9v4.4h-1.9zM481 632.9h1.9v4.4h-1.9zM485.4 632.9h1.9v4.4h-1.9zM489.7 632.9h1.9v4.4h-1.9zM433.3 632.9h1v4.4h-1zM468.7 641.2h1.9v3.4h-1.9zM474.5 641.2h1.9v3.4h-1.9zM481 641.2h5.8v1.6h-5.8zM522.8 641.2h4.8v1.4h-4.8zM522.8 644.1h4.8v1.4h-4.8zM522.8 647h4.8v1.4h-4.8zM547 590.7h6v1h-6zM554.9 587.2h5.8v1.2h-5.8zM554.9 590.1h5.8v1.2h-5.8zM563.2 587.2h5.8v1.2h-5.8zM563.2 590.1h5.8v1.2h-5.8zM545 594.6h1.3v4.2h-1.3zM547.9 594.6h1.3v4.2h-1.3zM550.8 594.6h1.3v4.2h-1.3zM553.7 594.6h1.3v4.2h-1.3zM556.6 594.6h1.3v4.2h-1.3zM545 607.2h1.3v4.2h-1.3zM547.9 607.2h1.3v4.2h-1.3zM550.8 607.2h1.3v4.2h-1.3zM553.7 607.2h1.3v4.2h-1.3zM556.6 607.2h1.3v4.2h-1.3zM567 605.2h2v3.8h-2zM577.6 609.5h1.6v3.9h-1.6zM550 620.4h1.9v3.3h-1.9zM554.9 620.4h1.9v3.3h-1.9zM558.7 620.4h1.9v3.3h-1.9zM562 650.4h2v4.5h-2zM567 650.4h2v4.5h-2zM545 662.6h1.9v3.9h-1.9zM418 671h6v1.5h-6zM489.3 671h1.8v4.7h-1.8zM433.3 700.5h5.9v1.6h-5.9zM433.3 704.1h5.9v1.6h-5.9zM433.3 707.7h5.9v1.6h-5.9zM444 697.6h4v1.4h-4zM444 700.5h4v1.4h-4zM444 703.4h4v1.4h-4zM444 706.3h4v1.4h-4zM444 709.2h4v1.4h-4zM459.6 697.6h3.3v1.3h-3.3zM459.6 700.5h3.3v1.3h-3.3zM459.6 703.4h3.3v1.3h-3.3zM459.6 706.3h3.3v1.3h-3.3zM459.6 709.2h3.3v1.3h-3.3zM468.3 703.5h5.9v1.7h-5.9zM468.3 708.3h5.9v1.7h-5.9zM476 703.5h6.3v1.7h-6.3zM476 708.3h6.3v1.7h-6.3zM509 703h1.9v3.4h-1.9zM513 679.5h6.3v1.8h-6.3zM513 682.5h6.3v1.8h-6.3zM513 685.6h6.3v1.8h-6.3zM513 688.6h6.3v1.8h-6.3zM513 691.7h6.3v1.8h-6.3zM513 694.8h6.3v1.8h-6.3zM513 697.8h6.3v1.8h-6.3zM513 700.9h6.3v1.8h-6.3zM513 703.9h6.3v1.8h-6.3zM513 707h6.3v1.8h-6.3zM513 710h6.3v1.8h-6.3zM521.2 671.8h5.8v2.2h-5.8zM521.2 675.4h5.8v2.2h-5.8zM521.2 679h5.8v2.2h-5.8zM521.2 682.6h5.8v2.2h-5.8zM521.2 686.2h5.8v2.2h-5.8zM521.2 689.8h5.8v2.2h-5.8zM521.2 693.4h5.8v2.2h-5.8zM521.2 697h5.8v2.2h-5.8zM521.2 700.6h5.8v2.2h-5.8zM521.2 704.2h5.8v2.2h-5.8zM521.2 707.8h5.8v2.2h-5.8zM546 679.5h1.6v3.2h-1.6zM549.1 679.5h1.6v3.2h-1.6zM552.3 679.5h1.6v3.2h-1.6zM555.5 679.5h1.6v3.2h-1.6zM558.6 679.5h1.6v3.2h-1.6zM561.8 679.5h1.6v3.2h-1.6zM564.9 679.5h1.6v3.2h-1.6zM568 679.5h1.6v3.2h-1.6zM571.2 679.5h1.6v3.2h-1.6zM574.4 679.5h1.6v3.2h-1.6zM538.7 685h4.5v1.3h-4.5zM538.7 687.9h4.5v1.3h-4.5zM538.7 690.8h4.5v1.3h-4.5zM538.7 693.7h4.5v1.3h-4.5zM538.7 696.6h4.5v1.3h-4.5zM538.7 699.5h4.5v1.3h-4.5zM538.7 702.4h4.5v1.3h-4.5zM538.7 705.3h4.5v1.3h-4.5zM538.7 708.2h4.5v1.3h-4.5zM546 710.3h1.6v1.7h-1.6zM549.1 710.3h1.6v1.7h-1.6zM552.3 710.3h1.6v1.7h-1.6zM555.5 710.3h1.6v1.7h-1.6zM558.6 710.3h1.6v1.7h-1.6zM561.8 710.3h1.6v1.7h-1.6zM564.9 710.3h1.6v1.7h-1.6zM568 710.3h1.6v1.7h-1.6zM571.2 710.3h1.6v1.7h-1.6zM574.4 710.3h1.6v1.7h-1.6zM542.6 669.2h1.9v4.4h-1.9zM547.7 669.2h1.9v4.4h-1.9zM551 669.2h1.9v4.4h-1.9zM565.5 669h2v4.6h-2zM571 669h2v4.6h-2zM576.2 669h2v4.6h-2zM581.5 669h2v4.6h-2zM593.7 668.6h1.9v4.6h-1.9zM597.6 668.6h1.9v4.6h-1.9zM601.5 668.6h1.9v4.6h-1.9zM592.8 674.4h5.4v1.4h-5.4zM608.7 668.6h2v4.4h-2zM614.5 676.2h2v4.5h-2zM621.5 676.2h2v4.5h-2zM595.7 680h6.3v1.6h-6.3zM595.7 683.5h6.3v1.6h-6.3zM591.8 689.3h6.2v1.7h-6.2zM591.8 692.8h6.2v1.7h-6.2zM591.8 699h6.2v1.7h-6.2zM591.8 702.5h6.2v1.7h-6.2zM591.8 708.5h6.2v1.7h-6.2zM601.5 689h5.3v1.8h-5.3zM601.5 692.6h5.3v1.8h-5.3zM601.5 706.5h5.3v1.8h-5.3zM611 685h6v1.8h-6zM611 688h6v1.8h-6zM611 691.8h6v1.8h-6zM611 696.6h6v1.8h-6zM611 699.6h6v1.8h-6zM611 704.5h6v1.8h-6zM617.7 696.3h6.2v1.8h-6.2zM617.7 699.6h6.2v1.8h-6.2zM617.7 704.5h6.2v1.8h-6.2zM679 713h1v1h-1z"/>
<path fill="#a8a83c" d="M402 534h4v1.3h-4zM402 537.2h4v1.3h-4zM402 540.4h4v1.3h-4zM402 543.6h4v1.3h-4zM417.8 534.5h3.9v1.2h-3.9zM417.8 537.5h3.9v1.2h-3.9zM417.8 540.5h3.9v1.2h-3.9zM417.8 543.5h3.9v1.2h-3.9zM479 535.5h4v1.3h-4zM479 538.4h4v1.3h-4zM479 541.3h4v1.3h-4zM479 544.2h4v1.3h-4z"/>
<path fill="#c8c830" d="M392.8 603.5h4.2v1.2h-4.2zM392.8 605.5h4.2v1.2h-4.2zM392.8 607.5h4.2v1.2h-4.2zM392.8 609.5h4.2v1.2h-4.2zM392.8 611.5h4.2v1.2h-4.2zM392.8 616.5h4.2v1.2h-4.2zM392.8 618.9h4.2v1.2h-4.2zM392.8 621.2h4.2v1.2h-4.2zM392.8 623.5h4.2v1.2h-4.2zM392.8 625.9h4.2v1.2h-4.2zM392.8 631h4.2v1.2h-4.2zM392.8 633.5h4.2v1.2h-4.2zM392.8 635.9h4.2v1.2h-4.2zM392.8 638.4h4.2v1.2h-4.2zM392.8 640.8h4.2v1.2h-4.2zM392.8 643.2h4.2v1.2h-4.2zM392.8 645.7h4.2v1.2h-4.2z"/>
<path fill="#b8b838" d="M462 535.5h5.4v1.3h-5.4zM462 538.4h5.4v1.3h-5.4zM462 541.3h5.4v1.3h-5.4zM462 544.2h5.4v1.3h-5.4z"/>
<path fill="#c4c434" d="M532.9 538h4.5v1.3h-4.5zM532.9 540.6h4.5v1.3h-4.5zM532.9 543.2h4.5v1.3h-4.5zM532.9 545.8h4.5v1.3h-4.5zM532.9 548.4h4.5v1.3h-4.5zM532.9 551h4.5v1.3h-4.5zM532.9 553.6h4.5v1.3h-4.5zM532.9 556.2h4.5v1.3h-4.5z"/>
<path fill="#b4b438" d="M551 538h4.2v1.3h-4.2zM551 540.6h4.2v1.3h-4.2zM551 543.2h4.2v1.3h-4.2zM551 545.8h4.2v1.3h-4.2zM551 548.4h4.2v1.3h-4.2zM551 551h4.2v1.3h-4.2zM551 553.6h4.2v1.3h-4.2zM551 556.2h4.2v1.3h-4.2z"/>
<path fill="#8c8c44" d="M429 660.7h3.9v1.2h-3.9zM479 660.7h4.9v1.2h-4.9zM429 663.1h3.9v1.2h-3.9zM479 663.1h4.9v1.2h-4.9z"/>
<path fill="#9c9c40" d="M429 665.5h3.9v1.2h-3.9zM479 665.5h4.9v1.2h-4.9zM429 667.9h3.9v1.2h-3.9zM479 667.9h4.9v1.2h-4.9z"/>
<path fill="#b0b03c" d="M429 670.3h3.9v1.2h-3.9zM479 670.3h4.9v1.2h-4.9zM429 672.7h3.9v1.2h-3.9zM479 672.7h4.9v1.2h-4.9z"/>
<path fill="#c4c438" d="M429 675.1h3.9v1.2h-3.9zM479 675.1h4.9v1.2h-4.9zM429 677.5h3.9v1.2h-3.9zM479 677.5h4.9v1.2h-4.9z"/>
<path fill="#d8d830" d="M429 679.9h3.9v1.2h-3.9zM479 679.9h4.9v1.2h-4.9zM429 682.3h3.9v1.2h-3.9zM479 682.3h4.9v1.2h-4.9z"/>
<path fill="#c8c834" d="M578.8 685h4.2v1.3h-4.2zM578.8 687.9h4.2v1.3h-4.2zM578.8 690.8h4.2v1.3h-4.2zM578.8 693.7h4.2v1.3h-4.2zM578.8 696.6h4.2v1.3h-4.2zM578.8 699.5h4.2v1.3h-4.2zM578.8 702.4h4.2v1.3h-4.2zM578.8 705.3h4.2v1.3h-4.2zM578.8 708.2h4.2v1.3h-4.2z"/>
<path fill="none" stroke="#f2f224" stroke-width="0.9" d="M203.4 437.1h3.5v3.7h-3.5zM203.4 443.8h3.5v3.7h-3.5zM217.9 437.1h3.5v3.7h-3.5zM217.9 443.8h3.5v3.7h-3.5zM248.1 438.1h3.5v3.7h-3.5zM248.1 444.1h3.5v3.7h-3.5zM325.8 438.1h3.5v3.7h-3.5zM325.8 444.1h3.5v3.7h-3.5zM250.8 454.8h3.5v5.1h-3.5zM250.8 462.1h3.5v3.5h-3.5zM324.4 454.8h3.5v5.1h-3.5zM324.4 462.1h3.5v3.5h-3.5zM197.4 462.8h4.1v4.5h-4.1zM197.4 470.4h4.1v4.5h-4.1zM226.4 462.8h4.1v4.5h-4.1zM226.4 470.4h4.1v4.5h-4.1zM201.4 479.8h3.7v5.5h-3.7zM201.4 490.8h3.7v5.5h-3.7zM201.4 498.4h3.7v5.5h-3.7zM201.4 509.4h3.7v5.5h-3.7zM254.8 479.4h1.7v1.7h-1.7zM253 485.6h1.7v1.7h-1.7zM258.1 485.6h1.7v1.7h-1.7zM274.4 471.4h4.1v4.9h-4.1zM274.4 481.9h4.1v5.5h-4.1zM223.4 494.8h8.1v1.7h-8.1zM223.4 498.4h8.1v1.5h-8.1zM233.9 494.8h8.1v1.7h-8.1zM233.9 498.4h8.1v1.5h-8.1zM246 494.8h9.5v1.7h-9.5zM246 498.4h9.5v1.5h-9.5zM259.4 495.4h1.5v4.3h-1.5zM262.8 495.1h1.5v4.5h-1.5zM268.9 498.4h1.7v5.5h-1.7zM273.8 498.4h1.7v5.5h-1.7zM221.1 507.4h2.3v4.5h-2.3zM263.4 507.8h1.7v3.5h-1.7zM273.1 507.8h1.3v3.5h-1.3zM244.4 510.4h3.1v4.7h-3.1zM260.4 512.8h2.1v5.5h-2.1zM267.8 512.8h2.3v5.5h-2.3zM251.4 515.9h1.5v1.5h-1.5zM257.1 515.9h1.5v1.5h-1.5zM201.4 510.4h3.7v4.5h-3.7zM388.8 431.8h3.5v3.7h-3.5zM388.8 438.6h3.5v3.7h-3.5zM405.8 431.8h3.5v3.7h-3.5zM405.8 438.6h3.5v3.7h-3.5zM420.1 431.8h3.5v3.7h-3.5zM420.1 438.6h3.5v3.7h-3.5zM436.1 431.8h3.5v3.7h-3.5zM436.1 438.6h3.5v3.7h-3.5zM451.4 431.8h3.5v3.7h-3.5zM451.4 438.6h3.5v3.7h-3.5zM468.4 431.8h3.5v3.7h-3.5zM468.4 438.6h3.5v3.7h-3.5zM486.4 431.8h3.5v3.7h-3.5zM486.4 438.6h3.5v3.7h-3.5zM502.4 431.8h3.5v3.7h-3.5zM502.4 438.6h3.5v3.7h-3.5zM389.8 477.1h3.3v3.7h-3.3zM389.8 483.1h3.3v3.7h-3.3zM405.8 477.1h3.3v3.7h-3.3zM405.8 483.1h3.3v3.7h-3.3zM377.9 491.2h2.7v3.3h-2.7zM395.4 490.8h2.9v3.5h-2.9zM418.9 491.2h2.3v3.3h-2.3zM372.1 495.1h2.3v4.1h-2.3zM372.1 501.8h2.3v3.9h-2.3zM412.8 495.1h2.3v3.9h-2.3zM412.8 501.2h2.3v3.9h-2.3zM461.2 389.8h4.9v2.3h-4.9zM470.6 390.1h5.7v2.1h-5.7zM485.4 387.2h2.3v3.9h-2.3zM490.1 387.2h2.3v3.9h-2.3zM496.2 387.2h2.3v3.9h-2.3zM478.8 395.4h2.7v5.6h-2.7zM491.9 398.1h1.7v3.9h-1.7zM504.4 398.1h2.1v3.9h-2.1zM492.4 406.6h4v4.9h-4zM511.8 404.8h4.3v4.9h-4.3zM492.4 416.9h4v5h-4zM511.8 415.9h4.3v5h-4.3zM559.5 408.4h3.1v4.7h-3.1zM556.5 433.4h3v3.5h-3zM499.8 424.1h2.5v4.5h-2.5zM514.8 423.9h2.6v4.7h-2.6zM557 392.2h6.5v1.9h-6.5zM593.2 392.2h6.5v1.9h-6.5zM628.2 392.2h6.5v1.9h-6.5zM632.1 400.8h3v4.9h-3zM425.8 477.2h3.3v3.7h-3.3zM425.8 483.1h3.3v3.7h-3.3zM441.8 477.2h3.3v3.7h-3.3zM441.8 483.1h3.3v3.7h-3.3zM465.4 477.2h3.3v3.7h-3.3zM465.4 483.1h3.3v3.7h-3.3zM482.4 477.2h3.3v3.7h-3.3zM482.4 483.1h3.3v3.7h-3.3zM505.1 477.2h3.3v3.7h-3.3zM505.1 483.1h3.3v3.7h-3.3zM523 477.2h3.3v3.7h-3.3zM523 483.1h3.3v3.7h-3.3zM537.5 485.4h2.7v4.1h-2.7zM433.6 490.8h1.9v3.5h-1.9zM459.3 491.2h2.6v3.3h-2.6zM473.9 490.8h2.4v3.5h-2.4zM500.6 490.8h3v3.7h-3zM515.8 490.8h2.6v3.5h-2.6zM453.8 494.8h2.3v4.3h-2.3zM453.8 501.4h2.3v4.3h-2.3zM493.9 494.8h2.3v4.3h-2.3zM493.9 501.4h2.3v4.3h-2.3zM540.5 494.8h3.9v5.5h-3.9zM540.5 505.4h3.9v5.3h-3.9zM627.5 483.6h7.5v2.4h-7.5zM640.8 483.6h7.8v2.4h-7.8zM634.5 494.8h7.7v2.4h-7.7zM228.3 571.7h2v4h-2zM225.4 580.1h2v4.4h-2zM233.2 571.7h2v4h-2zM230.3 580.1h2v4.4h-2zM235.1 580.1h2v4.4h-2zM242.8 571.7h2v4h-2zM244.8 580.1h2v4.4h-2zM252.5 571.7h2v4h-2zM249.6 580.1h2v4.4h-2zM257.3 571.7h2v4h-2zM254.4 580.1h2v4.4h-2zM262.2 571.7h2v4h-2zM267 571.7h2v4h-2zM264.1 580.1h2v4.4h-2zM268.9 580.1h2v4.4h-2zM276.6 571.7h2v4h-2zM273.8 580.1h2v4.4h-2zM281.5 571.7h2v4h-2zM283.4 580.1h2v4.4h-2zM291.1 571.7h2v4h-2zM288.2 580.1h2v4.4h-2zM296 571.7h2v4h-2zM300.8 571.7h2v4h-2zM297.9 580.1h2v4.4h-2zM301.8 600.9h2v2h-2zM306.1 600.9h2v2h-2zM269.8 609.5h2v2h-2zM274.6 609.5h2v2h-2zM263.3 618.5h2.2v4.8h-2.2zM272.6 637.9h4v5.5h-4zM272.6 648h4v5.5h-4zM272.6 658.5h4v5.5h-4zM272.6 669h4v5.5h-4zM290.4 649.5h5.1v1.8h-5.1zM290.4 654h5.1v1.8h-5.1zM290.4 658.5h5.1v1.8h-5.1zM305.8 651.9h4.9v5.5h-4.9zM338.8 650.5h5.5v1.8h-5.5zM265.8 682.5h2v1.7h-2zM273.6 682.5h2v1.7h-2zM279.4 682.5h2v1.7h-2zM287.6 682.5h2v1.7h-2zM253.6 686.1h3.5v3.4h-3.5zM253.6 692.2h3.5v4h-3.5zM253.6 706.9h3.5v3h-3.5zM289.8 687.8h2.8v3.6h-2.8zM289.8 694.8h2.8v3.4h-2.8zM289.8 703.5h2.8v4.4h-2.8zM338.8 700.5h3.6v5.9h-3.6zM392.8 576.5h5.3v2.7h-5.3zM401.4 576.5h4.9v2.7h-4.9zM367.4 586.5h4.8v2.8h-4.8zM375.8 586.5h4.8v2.8h-4.8zM404.4 588.2h3.1v2.6h-3.1zM404.4 594.5h3.1v2.6h-3.1zM405.8 604.8h3.7v2.4h-3.7zM405.8 614.5h3.7v2.6h-3.7zM426.9 532.9h5.9v2.1h-5.9zM488.4 532.9h5.1v2.1h-5.1zM566.5 543.9h2.9v4.3h-2.9zM572.9 543.9h2.7v4.3h-2.7zM560.5 562h1.8v4h-1.8zM566.5 562h2v4h-2zM571.5 561.8h3v4.7h-3zM424.4 554.8h6.9v1.5h-6.9zM433.4 554.8h1.8v4.4h-1.8zM442.4 557.7h5.6v2.5h-5.6zM451.6 557.7h5.9v2.5h-5.9zM503.4 580.1h2v3.4h-2zM506.3 610h3.9v2.3h-3.9zM506.3 615.5h3.9v2.1h-3.9zM505.3 626.8h4.9v1.5h-4.9zM422.4 640.4h3.1v3.4h-3.1zM438.4 640.8h4.1v2.6h-4.1zM453.4 640.8h3.7v2.6h-3.7zM462.4 640.8h3.1v2.6h-3.1zM495.4 634h3.9v3.3h-3.9zM495.4 639.8h3.9v4.3h-3.9zM545.5 578.5h10.9v4.1h-10.9zM568.4 578.5h10v4.1h-10zM540.8 595.1h1.6v3.5h-1.6zM560.2 595.1h2v3.5h-2zM540.8 607.7h1.6v3.5h-1.6zM560.2 607.7h2v3.5h-2zM540.8 613.2h1.6v3h-1.6zM572.2 604.8h3v4.4h-3zM567.5 612.5h7.4v1.7h-7.4zM529.5 627.7h5.5v2.9h-5.5zM538.8 627.7h6.3v2.9h-6.3zM529.5 634.9h5.5v3h-5.5zM538.8 634.9h6.3v3h-6.3zM569.5 624.8h3.8v5.4h-3.8zM569.5 635.9h3.8v5.3h-3.8zM538.8 641.7h3.6v4.9h-3.6zM538.8 652.1h3.8v6.2h-3.8zM468.4 693.2h5.6v2h-5.6zM536.5 670.2h2.4v4.6h-2.4zM586.5 669h3v4h-3z"/>
<path fill="none" stroke="#a8a83c" stroke-width="0.9" d="M259.4 659.5h1.8v4.7h-1.8z"/>
<path fill="none" stroke="#d8d840" stroke-width="0.9" d="M452.8 600.9h8.4v5.3h-8.4z"/>
<path fill="none" stroke="#b8b83c" stroke-width="0.9" d="M549.9 626.8h6.5v2.4h-6.5z"/>
<path fill="none" stroke="#d0d038" stroke-width="0.9" d="M549.9 635.9h6.5v3h-6.5z"/>
</g>
<defs>
<filter id="nz" x="0" y="0" width="100%" height="100%" color-interpolation-filters="sRGB">
<feTurbulence type="fractalNoise" baseFrequency="0.62" numOctaves="2" seed="7" result="t"/>
<feColorMatrix in="t" type="matrix" values="0 0 0 0 0  0 0 0 0 0  0 0 0 0 0  4.2 3.2 0 0 -4.5" result="a"/>
<feTurbulence type="fractalNoise" baseFrequency="0.035" numOctaves="2" seed="11" result="c"/>
<feColorMatrix in="c" type="matrix" values="0 0 0 0 0  0 0 0 0 0  0 0 0 0 0  0 5 0 0 -1.9" result="cm"/>
<feComposite in="a" in2="cm" operator="in" result="sp"/>
<feFlood flood-color="#a2a2a2"/>
<feComposite in2="sp" operator="in" result="col"/>
<feComposite in="col" in2="SourceGraphic" operator="in"/>
</filter>
<filter id="nz2" x="0" y="0" width="100%" height="100%" color-interpolation-filters="sRGB">
<feTurbulence type="fractalNoise" baseFrequency="0.8" numOctaves="1" seed="23" result="t"/>
<feColorMatrix in="t" type="matrix" values="0 0 0 0 0  0 0 0 0 0  0 0 0 0 0  0 6 3 0 -5.3" result="a"/>
<feFlood flood-color="#6a6a6a"/>
<feComposite in2="a" operator="in" result="col"/>
<feComposite in="col" in2="SourceGraphic" operator="in"/>
</filter>
<clipPath id="clipBD"><polygon points="943,297 1165,297 1165,276 1208,276 1208,297 1346,297 1346,378 1358,378 1358,520 1342,520 1342,692 906,692 906,603 958,603 958,509 932,509 932,440 899,440 899,336 943,336"/></clipPath>
<clipPath id="clipPR"><rect x="853.5" y="252.8" width="539.5" height="459.2"/></clipPath>
</defs>
<g clip-path="url(#clipPR)">
<polygon points="943,297 1165,297 1165,276 1208,276 1208,297 1346,297 1346,378 1358,378 1358,520 1342,520 1342,692 906,692 906,603 958,603 958,509 932,509 932,440 899,440 899,336 943,336" fill="#fff" filter="url(#nz2)"/>
<polygon points="943,297 1165,297 1165,276 1208,276 1208,297 1346,297 1346,378 1358,378 1358,520 1342,520 1342,692 906,692 906,603 958,603 958,509 932,509 932,440 899,440 899,336 943,336" fill="#fff" filter="url(#nz)"/>
<rect x="1277" y="338" width="69" height="42" fill="#000" opacity="0.8"/>
<rect x="943" y="297" width="222" height="36" fill="#000" opacity="0.72"/>
<rect x="1165" y="276" width="43" height="16" fill="#000" opacity="0.7"/>
<rect x="1212" y="297" width="134" height="32" fill="#000" opacity="0.55"/>
<rect x="1290" y="380" width="68" height="60" fill="#000" opacity="0.4"/>
<rect x="1294" y="440" width="64" height="118" fill="#000" opacity="0.6"/>
<rect x="1066" y="633" width="28" height="34" fill="#000" opacity="0.75"/>
<rect x="1104" y="440" width="40" height="40" fill="#000" opacity="0.5"/>
<path d="M945.3 298.6L945.3 331.7M949.2 298.6L949.2 331.7M1011.4 298.6L1011.4 331.7M1044.4 298.6L1044.4 331.7M1065.8 298.6L1065.8 331.7M1079.4 298.6L1079.4 331.7M1088.2 298.6L1088.2 331.7M1088 331.5L1130 331.5M1102 331.5L1102 347M1021 400h51v19.5h-51zM1078 523h23v43h-23zM1022 626L1022 690M1033.7 626L1033.7 690M921.6 669.3h77.7v9.3h-77.7zM1300.6 561.6L1332 561.6M1331 561.6L1331 598M1323.4 667h16.4v18.6h-16.4zM1292 679h25v11h-25zM1175.5 684.5h25v5.5h-25zM1099 676.7L1130 676.7M1228 373L1275 373M1228 373L1228 395M1290 385L1290 425M1318 385L1318 425M1296 425L1318 425M907 608L907 640M960 575L960 600M990 455L990 470M1026.5 500L1026.5 626M1033 455L1033 626M1034.6 455L1034.6 626M973 507h32.5v16h-32.5zM1229 385.5h45.5v13.5h-45.5z" fill="none" stroke="#9a9a9a" stroke-width="0.8"/>
<path d="M1187.7 306.8h8M962.8 337.3v20M939.1 462.8h4M1004.7 533.6h14M1192.4 511.2h6M1025.2 638.6v28M1214.2 430.7h6M1243.6 337.2h10M1281.4 534.3h28M1106.7 346.1h10M1031.9 544.1h28M986.5 324.3h20M1030.2 328.4v6M1071.1 475.2h28M1066.6 379.3v8M1207.6 325.1h20M1228.1 361.2h10M1316.4 567.4v6M1279.3 602v6M1262.3 454.7h4M1324.3 641.4h8M1124.7 644.7h20M1019.2 393.9v14M1236.2 465.4h14M998.7 689h14M1240.1 635.4v6M1256.4 462.9h4M1168.1 480.9v8M1287.4 301.5h20M1298.2 592.1v28M950.2 467.9h10M1224.9 579.8v14M1128.5 338.8h20M1187.5 536.3h6M972.7 671.7v14M1169.5 489v4M1295.4 623.8h8M1008.4 520h4M1118.7 324.2v28M1137.5 535.4v6M1239.9 568.1h20M1097.1 500.4h4M1149.3 528.3h4M1184 387v4M931.9 390.5h20M1142.7 581.3v14M1009.3 482.9h10M943.6 466.4h10M1288.7 318.3v20M944.3 455.2v8M949.2 372.3h14M1089.8 406.5v6M933.9 614.6v28M922.8 689.7h28M1006.4 456.7h10M1080.5 320h10M1075.7 661.1h28M1223.3 357.8h8M927.4 420.2v4M1126.3 632.1h6M1128.5 631.6v4M1203.8 389.4v4M1156.4 524.5v4M1088.7 526.4h14M1017.3 560.2h8M1078.1 561h8M1318.1 664.7h4M933 380.8h8M1057.1 324h6M971 624.7h20M1138 559.5h14M1198.5 666h6M1300.4 588.8h6M1172.2 579v6M1283.8 495.6v8M1280.7 333.3v10M919.8 428.1v6M1017.9 588.3v14M1152.4 341v20M1145.5 625v14M1093.4 313.4v8M1258.3 635.3h8M1012.3 337.4v28M1293.6 679.7h20M1318.4 636.8v28M1296.6 306.7v20M1252.1 458.8v20M1264.8 401.9v28M1072.1 312.2h10M1267.5 477.9v8M1292.1 384.6h20M1047.7 636.7h28M1188.7 454.1v28M1333.1 401.3v4M1055.6 606.1v10M1130.1 448.4h14M1134 614v20M1233.9 560.6h8M1327 658.9h14M1281.6 579.9v8M1200.1 425.2h20M957.3 462.2v10M1306.3 538.9h8M1275.2 416.4h6M1161 554.3h10M1204 497.9v28M1258.2 363.7h4M1198.7 540.4v4M1238 561.4v6M966.3 315.2v10M1245.8 476v20M1223.3 447.9h10M1195.2 299.2v28M1298.5 602.9h6M1331.1 500.6v4M960 479.6v14M1168 670.4v10M1223.7 495.4v28M1100.7 359.5h28M1016.6 394.2h20M1250 487.4h6M934.9 409.3h8M1301.9 328.7h6M1212.3 574.6h4M1048.9 480.1h4M1089.1 652.6v14M908.8 643.1h14M902.7 435.2h28M1301.2 625.4v14M1145.8 534.1h6M1022.8 487.9h10M1205.6 455.9v6M1313.8 682.4h14M1077.3 518.8h4M1092.9 637.7h6M1070.6 380.2h8M1295.8 406.4h28M1275.7 481.8v20M1192.6 604h20M914 394.2h28M968.6 346.6h20M1326.5 479.8v8M975.5 535.6v20M1250 361.4h8M911.6 419.6v20M1068.9 667h6M1210.8 543.5v4M1035.7 565.9h28M1056.2 465.4h8M1191.4 302v10M1106.9 357.1v6M1334.5 403.1v28M1248.6 479.7v28M1020.8 631.7v28M1025.5 474.2h28M1174.6 445.9h4M1046.3 488.6v8M1053.2 643v20M1150.1 500h6M1224 489h28M1114.2 576.8v10M941.9 384.1h20M1198.8 442v14M1091.5 590.2h8M1104.2 417.5h6M986.7 344v14M1210.6 372.3h20M980.7 302.6h14M1031.5 668v20M1120.9 640h14M1115.4 430.9h4M1159.7 566.8h6M1153.3 416.4h6M1244 535.3v28M1249.1 446.5h10M1164.8 465.5v14M1174.3 587.9h28M995 556.5h6M1148.4 358.5h10M1167.2 411.5h6M1027.2 634.8v4M1315.8 606.6v20M1261.8 374.7v4M1191.4 654h28M926.8 608.5v14M1156.1 410.4h4M1036.8 455.2v8M1122.2 328.6v4M1230.5 534.3h4M1332.9 625.5v14M1269.6 523.5v28M1111.7 553h8M1163.4 546.5v10M1111.5 457.5v8M1286 426.6h20M1198.2 454.4v28M1104.7 420.6h8M1247.6 636.9v28M1195.9 510.2h10M1133.3 541.7v10M1242 377h14M1029.6 643.2h10M1337.9 536.3v6M1039.8 302.4h10M1107.7 343.2h28M1319.7 411.7h20M1275.6 682.2h6M965.1 371.9v14M1295.7 636.6v8M1284.5 430.6v28M1269.2 408.2v8M1161 556.4h28M1142.4 432.6v14M1069.7 663.6h28M1213.9 521.7v6M1084.8 422v10M1265.1 448.7v20M1193.4 356.8h4M1334.4 427.5v4M1098.1 503.7h10M964.9 639.3h6M1251.7 401.2v14M1192.4 631.7v28M1241.7 639.8v4M1005.6 566v8M1236 467.6v4M1216.8 336.5v6M1306.5 315.1h28M1061.3 466.3v6M1154.7 608.5h6M1174.3 447.3h20M1107.5 396.8v8M1304.5 479.8v8M971.1 470.6v8M1034.6 675.1h20M1073.1 486.9h6M1061.5 413.3h20M1289.3 602.9v4M1235.3 624.3v8M1003.6 612.2v6M1179.4 563.4v20M1206.4 350.8v4M1190.9 418.4h10M1064.2 348.6h8M1087 375.9v28M1337.2 505.6v8M1015.6 621.1v10M1032.8 639.1h28M1334.9 635v20M1078.8 629.4h14M1255.8 302.5h14M1065.9 591.4v8M1270.1 666.5v4M1112.2 540.5h14M1174.5 551.5v20M1309.2 415.8h10M1005.7 508.3h10M1201.7 589.1h14M1234 357.7v10M1275.2 539h8M1066.7 471.2v6M1145 681.3h8M941.3 380.4v20M909.6 606.2v6M1254.1 377.6v28M993.2 381.9h28M1248.5 606.9h14M958.5 395.5h6M1061.2 606.9h14M978.4 317.6h20M951.1 322v10M1131 339.9h14M1176.8 582.8v28M1035.7 549.8h4M1115.5 454.8h20M1220.6 471.3h4M966.8 346.6v14M1146.8 424.8v14M1104.2 534.9v4M1295 513.7h28M1103.2 386.8v8M1079.4 583.7h8M1199.3 444.1v6M1113.4 332.9h4M1265.3 515.7v14M1152.8 560.3h10M1199.4 591.9v28M923.2 410h8M1160.1 380.6h20M1281.3 434.6h14M1243.2 522.6h28M1152.4 598.6v14M1189.2 307.3v20M1020.4 367.9v20" fill="none" stroke="#8c8c8c" stroke-width="0.7" stroke-opacity="0.75"/>
<path d="M963,546.5h90M965,550h88M963,553.5h90" stroke="#8e8e8e" stroke-width="1.3" stroke-dasharray="3 2.2" fill="none"/>
<rect x="1022.5" y="623" width="11" height="9" fill="#bdbdbd"/>
<circle cx="1080.5" cy="593.5" r="8.6" fill="none" stroke="#d0d0d0" stroke-width="1.6" stroke-dasharray="1.6 3"/>
<ellipse cx="1096.5" cy="590" rx="3.2" ry="1.8" fill="#b8b8b8" transform="rotate(-30 1096.5 590)"/>
<path d="M925,674h71" stroke="#cfcfcf" stroke-width="2.4" stroke-dasharray="2.2 2.6" fill="none"/>
<path d="M1025,634v54M1029.5,634v54" stroke="#b0b0b0" stroke-width="1.3" stroke-dasharray="1.2 2" fill="none"/>
<path d="M1100,682h30M1104,686h26" stroke="#a0a0a0" stroke-width="1.2" stroke-dasharray="1.2 2.4" fill="none"/>
<text x="1060" y="617.4" font-size="7.4" fill="#a8a8a8" text-anchor="start" font-weight="normal" font-family="'Liberation Mono',monospace" textLength="87" lengthAdjust="spacingAndGlyphs" >AV-R730 MAIN PCB</text>
<text x="1060" y="627" font-size="7.4" fill="#a8a8a8" text-anchor="start" font-weight="normal" font-family="'Liberation Mono',monospace" textLength="59" lengthAdjust="spacingAndGlyphs" >AH41-11143A</text>
<path d="M1065,667.6h37" stroke="#b0b0b0" stroke-width="1.6" stroke-dasharray="2.4 1.1 1.2 0.9 3 1.3" fill="none"/>
<rect x="1305" y="267.2" width="2" height="2" fill="#e8a040"/><rect x="918.4" y="703.5" width="1.8" height="2" fill="#e89030"/>
<g clip-path="url(#clipBD)"><g transform="matrix(0.983,0,0,1,715.9,-80.4)">
<path d="M237,416.2h141M237,419.4h141" stroke="#8ee23a" stroke-width="1.6" stroke-dasharray="2.5 1.25" fill="none"/>
<path fill="#74dc4a" d="M199.8 426h1.9v4h-1.9zM216.5 426h1.9v4h-1.9zM232 426h1.9v4h-1.9zM236 426h1.9v4h-1.9zM205.5 426.5h1.2v1.2h-1.2zM207.5 426.5h1.2v1.2h-1.2zM222 426.5h1.2v1.2h-1.2zM226 426.5h1.2v1.2h-1.2zM204 430.6h2.2v1.2h-2.2zM221 430.6h2.2v1.2h-2.2zM260 438.3h1.2v3.3h-1.2zM262 438.3h1.2v3.3h-1.2zM264 438.3h1.2v3.3h-1.2zM266 438.3h1.2v3.3h-1.2zM268 438.3h1.2v3.3h-1.2zM270 438.3h1.2v3.3h-1.2zM272 438.3h1.2v3.3h-1.2zM274 438.3h1.2v3.3h-1.2zM276 438.3h1.2v3.3h-1.2zM278 438.3h1.2v3.3h-1.2zM280 438.3h1.2v3.3h-1.2zM282 438.3h1.2v3.3h-1.2zM284 438.3h1.2v3.3h-1.2zM286 438.3h1.2v3.3h-1.2zM288 438.3h1.2v3.3h-1.2zM290 438.3h1.2v3.3h-1.2zM292 438.3h1.2v3.3h-1.2zM294 438.3h1.2v3.3h-1.2zM296 438.3h1.2v3.3h-1.2zM260 457.5h1.2v3.3h-1.2zM262 457.5h1.2v3.3h-1.2zM264 457.5h1.2v3.3h-1.2zM266 457.5h1.2v3.3h-1.2zM268 457.5h1.2v3.3h-1.2zM270 457.5h1.2v3.3h-1.2zM272 457.5h1.2v3.3h-1.2zM274 457.5h1.2v3.3h-1.2zM276 457.5h1.2v3.3h-1.2zM278 457.5h1.2v3.3h-1.2zM280 457.5h1.2v3.3h-1.2zM282 457.5h1.2v3.3h-1.2zM284 457.5h1.2v3.3h-1.2zM286 457.5h1.2v3.3h-1.2zM288 457.5h1.2v3.3h-1.2zM290 457.5h1.2v3.3h-1.2zM292 457.5h1.2v3.3h-1.2zM294 457.5h1.2v3.3h-1.2zM296 457.5h1.2v3.3h-1.2zM335 438.3h1.2v3.3h-1.2zM337 438.3h1.2v3.3h-1.2zM339 438.3h1.2v3.3h-1.2zM341 438.3h1.2v3.3h-1.2zM343 438.3h1.2v3.3h-1.2zM345 438.3h1.2v3.3h-1.2zM347 438.3h1.2v3.3h-1.2zM349 438.3h1.2v3.3h-1.2zM351 438.3h1.2v3.3h-1.2zM353 438.3h1.2v3.3h-1.2zM355 438.3h1.2v3.3h-1.2zM357 438.3h1.2v3.3h-1.2zM359 438.3h1.2v3.3h-1.2zM361 438.3h1.2v3.3h-1.2zM363 438.3h1.2v3.3h-1.2zM365 438.3h1.2v3.3h-1.2zM367 438.3h1.2v3.3h-1.2zM369 438.3h1.2v3.3h-1.2zM371 438.3h1.2v3.3h-1.2zM335 457.5h1.2v3.3h-1.2zM337 457.5h1.2v3.3h-1.2zM339 457.5h1.2v3.3h-1.2zM341 457.5h1.2v3.3h-1.2zM343 457.5h1.2v3.3h-1.2zM345 457.5h1.2v3.3h-1.2zM347 457.5h1.2v3.3h-1.2zM349 457.5h1.2v3.3h-1.2zM351 457.5h1.2v3.3h-1.2zM353 457.5h1.2v3.3h-1.2zM355 457.5h1.2v3.3h-1.2zM357 457.5h1.2v3.3h-1.2zM359 457.5h1.2v3.3h-1.2zM361 457.5h1.2v3.3h-1.2zM363 457.5h1.2v3.3h-1.2zM365 457.5h1.2v3.3h-1.2zM367 457.5h1.2v3.3h-1.2zM369 457.5h1.2v3.3h-1.2zM371 457.5h1.2v3.3h-1.2zM292 429.4h2v4.2h-2zM296.7 429.4h2v4.2h-2zM367.5 429.4h2v4.2h-2zM372.3 429.4h2v4.2h-2zM255 432.5h1.9v3.2h-1.9zM331 431.5h1.9v3.2h-1.9zM303 464h2v3.8h-2zM307 464h2v3.8h-2zM368.5 464h2v3.8h-2zM372.7 464h2v3.8h-2zM260.8 465.2h1.6v3h-1.6zM331.7 465.2h1.9v3.6h-1.9zM382 466h1.9v3.6h-1.9zM196.7 448.7h1.8v3.8h-1.8zM203.3 450.6h5v1.5h-5zM203.3 453.4h5v1.5h-5zM203.3 456.2h5v1.5h-5zM203.3 459h5v1.5h-5zM219 450.6h6.2v1.5h-6.2zM219 453.4h6.2v1.5h-6.2zM219 456.2h6.2v1.5h-6.2zM219 459h6.2v1.5h-6.2zM231.7 451h1.8v3.8h-1.8zM210 464h2v4.4h-2zM216.5 464h2v4.4h-2zM210 471h2v4.4h-2zM216.5 471h2v4.4h-2zM190.8 484.6h1.8v3.2h-1.8zM190.8 497.5h1.8v3.6h-1.8zM230.6 480.8h2v4.8h-2zM234.8 480.8h2v4.8h-2zM230.6 488h2v4h-2zM234.8 488h2v4h-2zM231 502.3h2v1.6h-2zM239 502.3h2v1.6h-2zM254 502.3h2v1.6h-2zM228.5 506.3h1.7v2.2h-1.7zM232.5 506.3h1.7v2.2h-1.7zM236.5 506.3h1.7v2.2h-1.7zM243 506.3h1.7v2.2h-1.7zM251.8 506.3h1.7v2.2h-1.7zM256.5 506.3h1.7v2.2h-1.7zM226.5 515h1.8v1.8h-1.8zM230.4 515h1.8v1.8h-1.8zM234.3 515h1.8v1.8h-1.8zM240 515h1.8v1.8h-1.8zM386.7 418.5h5.6v1.6h-5.6zM386.7 421.4h5.6v1.6h-5.6zM386.7 424.3h5.6v1.6h-5.6zM386.7 427.2h5.6v1.6h-5.6zM395.6 418.5h5.6v1.6h-5.6zM395.6 421.4h5.6v1.6h-5.6zM395.6 424.3h5.6v1.6h-5.6zM395.6 427.2h5.6v1.6h-5.6zM404 418.5h5.6v1.6h-5.6zM404 421.4h5.6v1.6h-5.6zM404 424.3h5.6v1.6h-5.6zM404 427.2h5.6v1.6h-5.6zM412.3 418.5h5.6v1.6h-5.6zM412.3 421.4h5.6v1.6h-5.6zM412.3 424.3h5.6v1.6h-5.6zM412.3 427.2h5.6v1.6h-5.6zM421 418.5h5.6v1.6h-5.6zM421 421.4h5.6v1.6h-5.6zM421 424.3h5.6v1.6h-5.6zM421 427.2h5.6v1.6h-5.6zM429.7 418.5h5.6v1.6h-5.6zM429.7 421.4h5.6v1.6h-5.6zM429.7 424.3h5.6v1.6h-5.6zM429.7 427.2h5.6v1.6h-5.6zM437.5 418.5h5.6v1.6h-5.6zM437.5 421.4h5.6v1.6h-5.6zM437.5 424.3h5.6v1.6h-5.6zM437.5 427.2h5.6v1.6h-5.6zM446.8 418.5h5.6v1.6h-5.6zM446.8 421.4h5.6v1.6h-5.6zM446.8 424.3h5.6v1.6h-5.6zM446.8 427.2h5.6v1.6h-5.6zM391.5 446.3h4.2v1.5h-4.2zM391.5 449.3h4.2v1.5h-4.2zM401 446.3h5v1.5h-5zM401 449.3h5v1.5h-5zM413.3 446h1.8v4h-1.8zM388 455h5.6v1.7h-5.6zM388 457.9h5.6v1.7h-5.6zM388 460.8h5.6v1.7h-5.6zM388 463.7h5.6v1.7h-5.6zM405 455h5.6v1.7h-5.6zM405 457.9h5.6v1.7h-5.6zM405 460.8h5.6v1.7h-5.6zM405 463.7h5.6v1.7h-5.6zM392 468.8h5.6v1.6h-5.6zM392 471.8h5.6v1.6h-5.6zM401 468.8h5v1.6h-5zM401 471.8h5v1.6h-5zM414.3 468h1.8v4.4h-1.8zM383.4 491.3h1.8v3.4h-1.8zM387.4 491.3h1.8v3.4h-1.8zM425 491.3h1.8v3.4h-1.8zM429 491.3h1.8v3.4h-1.8zM376.8 501.5h1.6v4h-1.6zM383 498.8h1.2v3.4h-1.2zM385.7 498.8h1.2v3.4h-1.2zM388.4 498.8h1.2v3.4h-1.2zM391.1 498.8h1.2v3.4h-1.2zM393.8 498.8h1.2v3.4h-1.2zM396.5 498.8h1.2v3.4h-1.2zM383 510.6h1.2v3.4h-1.2zM385.7 510.6h1.2v3.4h-1.2zM388.4 510.6h1.2v3.4h-1.2zM391.1 510.6h1.2v3.4h-1.2zM393.8 510.6h1.2v3.4h-1.2zM396.5 510.6h1.2v3.4h-1.2zM417.4 501h1.6v3.6h-1.6zM403 504.4h1.9v4.2h-1.9zM407.5 504.4h1.9v4.2h-1.9zM599 348h2.8v1.5h-2.8zM466.3 374.7h1.6v4h-1.6zM469.6 374.7h1.6v4h-1.6zM472.9 374.7h1.6v4h-1.6zM476.2 374.7h1.6v4h-1.6zM479.5 374.7h1.6v4h-1.6zM482.8 374.7h1.6v4h-1.6zM486.1 374.7h1.6v4h-1.6zM489.4 374.7h1.6v4h-1.6zM460.4 384.4h2.2v3.9h-2.2zM463.4 384.4h2.2v3.9h-2.2zM471.5 384.4h2.2v3.9h-2.2zM474.6 384.4h2.2v3.9h-2.2zM480.3 386.6h1.2v1.2h-1.2zM482.4 386.6h1.2v1.2h-1.2zM480.3 389.6h1.2v1.2h-1.2zM482.4 389.6h1.2v1.2h-1.2zM501.7 390.4h2v1h-2zM507.5 389.4h1.1v1.1h-1.1zM509.3 389.4h1.1v1.1h-1.1zM507.5 392h1.1v1.1h-1.1zM509.3 392h1.1v1.1h-1.1zM513 389.5h2v4.5h-2zM519.4 392h1.2v1.6h-1.2zM460.4 395h5.5v1.6h-5.5zM460.4 398h5.5v1.6h-5.5zM460.4 401h5.5v1.6h-5.5zM467 395h5.5v1.6h-5.5zM467 398h5.5v1.6h-5.5zM467 401h5.5v1.6h-5.5zM487 397.6h1.8v3.8h-1.8zM500.2 397.6h1.8v4h-1.8zM509.2 397.8h1.8v4.4h-1.8zM516.2 397h2v1.5h-2zM519.2 397.6h1.6v1.2h-1.6zM521.3 397h2v1.5h-2zM534.3 401h2v4h-2zM539 401h2v4h-2zM546 400h2.1v6h-2.1zM534.3 408.7h2v4.5h-2zM539 408.7h2v4.5h-2zM546.4 408.7h2v4.5h-2zM550.7 408.7h2v4.5h-2zM555 408.7h2v4.5h-2zM532.4 415h1.7v4.8h-1.7zM535.7 415h1.7v4.8h-1.7zM539 415h1.7v4.8h-1.7zM542.3 415h1.7v4.8h-1.7zM545.6 415h1.7v4.8h-1.7zM548.9 415h1.7v4.8h-1.7zM552.2 415h1.7v4.8h-1.7zM560.4 415.5h1.7v6.9h-1.7zM525 421.4h2v3.6h-2zM525 428h2v3.6h-2zM532.4 427.8h1.7v3.8h-1.7zM535.7 427.8h1.7v3.8h-1.7zM539 427.8h1.7v3.8h-1.7zM542.3 427.8h1.7v3.8h-1.7zM545.6 427.8h1.7v3.8h-1.7zM548.9 427.8h1.7v3.8h-1.7zM552.2 427.8h1.7v3.8h-1.7zM552 433h2v4h-2zM549.3 389.8h1.7v4.6h-1.7zM584.9 389.8h1.7v4.6h-1.7zM620.9 389.8h1.7v4.6h-1.7zM557.7 388h6.2v1.5h-6.2zM594 388h6.2v1.5h-6.2zM629 388h6.2v1.5h-6.2zM421.5 446.5h6.2v1.6h-6.2zM421.5 449.5h6.2v1.6h-6.2zM433.2 446.5h4.8v1.6h-4.8zM433.2 449.5h4.8v1.6h-4.8zM453 446.5h5.8v1.6h-5.8zM453 449.5h5.8v1.6h-5.8zM463.2 446.5h5.8v1.6h-5.8zM463.2 449.5h5.8v1.6h-5.8zM484.7 446.5h6.2v1.6h-6.2zM484.7 449.5h6.2v1.6h-6.2zM494.9 446.5h5.8v1.6h-5.8zM494.9 449.5h5.8v1.6h-5.8zM445.7 446.5h1.7v4.2h-1.7zM477.7 446.5h1.7v4.2h-1.7zM420 455h5.4v1.9h-5.4zM420 458.1h5.4v1.9h-5.4zM420 461.1h5.4v1.9h-5.4zM420 464.1h5.4v1.9h-5.4zM435 455h5.4v1.9h-5.4zM435 458.1h5.4v1.9h-5.4zM435 461.1h5.4v1.9h-5.4zM435 464.1h5.4v1.9h-5.4zM451 455h5.4v1.9h-5.4zM451 458.1h5.4v1.9h-5.4zM451 461.1h5.4v1.9h-5.4zM451 464.1h5.4v1.9h-5.4zM467.2 455h5.4v1.9h-5.4zM467.2 458.1h5.4v1.9h-5.4zM467.2 461.1h5.4v1.9h-5.4zM467.2 464.1h5.4v1.9h-5.4zM482.2 455h5.4v1.9h-5.4zM482.2 458.1h5.4v1.9h-5.4zM482.2 461.1h5.4v1.9h-5.4zM482.2 464.1h5.4v1.9h-5.4zM498 455h5.4v1.9h-5.4zM498 458.1h5.4v1.9h-5.4zM498 461.1h5.4v1.9h-5.4zM498 464.1h5.4v1.9h-5.4zM509 452h1.9v4.4h-1.9zM423 468.6h5.8v1.6h-5.8zM423 471.6h5.8v1.6h-5.8zM432 468.6h5v1.6h-5zM432 471.6h5v1.6h-5zM455 468.6h4.9v1.6h-4.9zM455 471.6h4.9v1.6h-4.9zM463.2 468.6h5v1.6h-5zM463.2 471.6h5v1.6h-5zM486.1 468.6h5.4v1.6h-5.4zM486.1 471.6h5.4v1.6h-5.4zM494.3 468.6h5.8v1.6h-5.8zM494.3 471.6h5.8v1.6h-5.8zM445.3 467.2h1.7v4.4h-1.7zM477.7 467.2h1.7v4.4h-1.7zM533.7 485.4h1.8v4.4h-1.8zM424.3 491h1.7v3.6h-1.7zM428.2 491h1.7v3.6h-1.7zM465.7 491h1.7v3.6h-1.7zM469.6 491h1.7v3.6h-1.7zM506.5 491h1.7v3.6h-1.7zM510.4 491h1.7v3.6h-1.7zM425 499h1.2v3.6h-1.2zM427.6 499h1.2v3.6h-1.2zM430.2 499h1.2v3.6h-1.2zM432.8 499h1.2v3.6h-1.2zM435.4 499h1.2v3.6h-1.2zM465 499h1.2v3.6h-1.2zM467.4 499h1.2v3.6h-1.2zM469.8 499h1.2v3.6h-1.2zM472.2 499h1.2v3.6h-1.2zM474.6 499h1.2v3.6h-1.2zM477 499h1.2v3.6h-1.2zM506 499h1.2v3.6h-1.2zM508.2 499h1.2v3.6h-1.2zM510.4 499h1.2v3.6h-1.2zM512.6 499h1.2v3.6h-1.2zM514.8 499h1.2v3.6h-1.2zM517 499h1.2v3.6h-1.2zM519.2 499h1.2v3.6h-1.2zM459.9 501h1.6v3.8h-1.6zM499.7 501h1.6v3.8h-1.6zM445 504h1.9v4.4h-1.9zM448.8 504h1.9v4.4h-1.9zM485.7 504h1.9v4.4h-1.9zM489.6 504h1.9v4.4h-1.9zM526 506.5h1.9v3.9h-1.9zM530 506.5h1.9v3.9h-1.9zM425 511.3h1.2v3.5h-1.2zM427.6 511.3h1.2v3.5h-1.2zM430.2 511.3h1.2v3.5h-1.2zM432.8 511.3h1.2v3.5h-1.2zM435.4 511.3h1.2v3.5h-1.2zM465 511.3h1.2v3.5h-1.2zM467.4 511.3h1.2v3.5h-1.2zM469.8 511.3h1.2v3.5h-1.2zM472.2 511.3h1.2v3.5h-1.2zM474.6 511.3h1.2v3.5h-1.2zM477 511.3h1.2v3.5h-1.2zM506 511.3h1.2v3.5h-1.2zM508.2 511.3h1.2v3.5h-1.2zM510.4 511.3h1.2v3.5h-1.2zM512.6 511.3h1.2v3.5h-1.2zM514.8 511.3h1.2v3.5h-1.2zM517 511.3h1.2v3.5h-1.2zM519.2 511.3h1.2v3.5h-1.2zM590 469h2v4.4h-2zM593.4 469h2v4.4h-2zM588 477.4h2v3.9h-2zM592 477.4h2v3.9h-2zM588 483.6h2v3.9h-2zM592 483.6h2v3.9h-2zM591 502h2v4h-2zM616 457.5h6.2v1.9h-6.2zM616 460.2h6.2v1.6h-6.2zM616 462.8h6.2v1.6h-6.2zM616 467.2h6.2v1.4h-6.2zM616 469.8h6.2v1.4h-6.2zM616 472.2h6.2v1.4h-6.2zM616 474.4h6.2v1.4h-6.2zM626 464.6h6v1.1h-6zM616 490.6h5.8v1.1h-5.8zM383 511.6h1.2v3.4h-1.2zM385.7 511.6h1.2v3.4h-1.2zM388.4 511.6h1.2v3.4h-1.2zM391.1 511.6h1.2v3.4h-1.2zM393.8 511.6h1.2v3.4h-1.2zM396.5 511.6h1.2v3.4h-1.2zM366.5 518h1.9v4h-1.9zM378.8 518h2v3.9h-2zM383 518h2v3.9h-2zM388 518h2v3.9h-2zM392.4 518h2v3.9h-2zM389 532.6h5.3v1.6h-5.3zM389 536h5.3v1.6h-5.3zM389 539.4h5.3v1.6h-5.3zM389 542.8h5.3v1.6h-5.3zM389 546.2h5.3v1.6h-5.3zM311 537.2h2.4v3.8h-2.4zM311 545h1.2v3h-1.2zM313.1 545h1.2v3h-1.2zM315.2 545h1.2v3h-1.2zM317.3 545h1.2v3h-1.2zM319.4 545h1.2v3h-1.2zM321.5 545h1.2v3h-1.2zM323.6 545h1.2v3h-1.2zM325.7 545h1.2v3h-1.2zM311 556.7h1.2v3.4h-1.2zM313.1 556.7h1.2v3.4h-1.2zM315.2 556.7h1.2v3.4h-1.2zM317.3 556.7h1.2v3.4h-1.2zM319.4 556.7h1.2v3.4h-1.2zM321.5 556.7h1.2v3.4h-1.2zM323.6 556.7h1.2v3.4h-1.2zM325.7 556.7h1.2v3.4h-1.2zM288.2 556.3h2v3.3h-2zM294.6 556.3h2v3.3h-2zM311 565h2v4h-2zM291.7 562.5h2v4.3h-2zM297.9 562.5h2v4.3h-2zM246.5 562h1.9v3.9h-1.9zM251.8 562h1.9v3.9h-1.9zM256.6 562h1.9v3.9h-1.9zM260.9 562h1.9v3.9h-1.9zM264.4 562h1.9v3.9h-1.9zM268.7 562h1.9v3.9h-1.9zM273.2 562h1.9v3.9h-1.9zM278 562h1.9v3.9h-1.9zM238 571.4h1.9v4.6h-1.9zM239.9 579.8h1.9v5h-1.9zM247.6 571.4h1.9v4.6h-1.9zM259.2 579.8h1.9v5h-1.9zM271.8 571.4h1.9v4.6h-1.9zM278.5 579.8h1.9v5h-1.9zM286.3 571.4h1.9v4.6h-1.9zM293 579.8h1.9v5h-1.9zM301.4 597.5h6.8v1.3h-6.8zM304.3 606.6h1.9v2h-1.9zM269.9 605.7h6.2v1.2h-6.2zM272.2 615.4h1.9v1.9h-1.9zM275 620.5h6v1.5h-6zM255 620.4h1.9v3.3h-1.9zM260 620.4h1.9v3.3h-1.9zM285.8 650.4h2v3.9h-2zM285.8 659.7h2v3.9h-2zM290.7 682.5h6.3v1.5h-6.3zM252.6 699h5.6v1.6h-5.6zM252.6 702h5.6v1.6h-5.6zM274.6 688h1.9v3.8h-1.9zM279 688h1.9v3.8h-1.9zM266.4 693.7h1.9v3.9h-1.9zM271.2 693.7h1.9v3.9h-1.9zM275.1 693.7h1.9v3.9h-1.9zM279.6 693.7h1.9v3.9h-1.9zM263.5 701.5h1.9v3.9h-1.9zM270.7 701.5h1.9v3.9h-1.9zM275.1 701.5h1.9v3.9h-1.9zM278.4 701.5h1.9v3.9h-1.9zM282 701.5h1.9v3.9h-1.9zM263.4 708h1.8v3h-1.8zM368.5 567.4h2v4.4h-2zM373.3 567.4h2v4.4h-2zM378.8 567.4h2v4.4h-2zM385.4 567.4h2v4.4h-2zM376.8 575h2v4.6h-2zM380.7 575h2v4.6h-2zM385 575h2v4.6h-2zM416.5 575.6h1.9v3.6h-1.9zM385.4 582.3h1.9v4.5h-1.9zM392.4 584h4.6v1.2h-4.6zM392.4 588.3h4.6v1.2h-4.6zM401 584h5v1.2h-5zM402.4 609.2h1.9v3.9h-1.9zM402.4 618h1.9v3.9h-1.9zM362.2 603.5h4.9v1.2h-4.9zM362.2 605.5h4.9v1.2h-4.9zM362.2 607.5h4.9v1.2h-4.9zM362.2 609.5h4.9v1.2h-4.9zM362.2 611.5h4.9v1.2h-4.9zM362.2 616.5h4.9v1.3h-4.9zM362.2 618.9h4.9v1.3h-4.9zM362.2 621.2h4.9v1.3h-4.9zM362.2 623.5h4.9v1.3h-4.9zM362.2 625.9h4.9v1.3h-4.9zM362.2 631h4.9v1.3h-4.9zM362.2 633.5h4.9v1.3h-4.9zM362.2 635.9h4.9v1.3h-4.9zM362.2 638.4h4.9v1.3h-4.9zM362.2 640.8h4.9v1.3h-4.9zM362.2 643.2h4.9v1.3h-4.9zM362.2 645.7h4.9v1.3h-4.9zM352.3 603.7h5.5v1.7h-5.5zM352.3 606.3h5.5v1.7h-5.5zM352.3 616h5.5v1.4h-5.5zM352.3 624.3h5v1.7h-5zM418.4 671.4h1.6v1.4h-1.6zM419.3 518.2h1.9v3.8h-1.9zM424.6 518.2h1.9v3.8h-1.9zM429.4 518.2h1.9v3.8h-1.9zM433.7 518.2h1.9v3.8h-1.9zM438.2 518.2h1.9v3.8h-1.9zM444 518.2h1.9v3.8h-1.9zM452.8 518.2h1.9v3.8h-1.9zM462 518.2h1.9v3.8h-1.9zM466 518.2h1.9v3.8h-1.9zM470.3 518.2h1.9v3.8h-1.9zM474.6 518.2h1.9v3.8h-1.9zM489.7 518.2h1.9v3.8h-1.9zM501.8 518.2h1.9v3.8h-1.9zM506.8 518.2h1.9v3.8h-1.9zM511 518.2h1.9v3.8h-1.9zM516 518.2h1.9v3.8h-1.9zM534 518.2h1.9v3.8h-1.9zM426.5 537.2h6.6v1.5h-6.6zM426.5 540.1h6.6v1.5h-6.6zM426.5 543h6.6v1.5h-6.6zM426.5 545.9h6.6v1.5h-6.6zM449.9 535.3h6.4v1.6h-6.4zM449.9 538.2h6.4v1.6h-6.4zM449.9 541.1h6.4v1.6h-6.4zM449.9 544h6.4v1.6h-6.4zM449.9 546.9h6.4v1.6h-6.4zM489 537.2h4.6v1.4h-4.6zM489 540.1h4.6v1.4h-4.6zM489 543h4.6v1.4h-4.6zM489 545.9h4.6v1.4h-4.6zM521.2 535.3h5.8v1.4h-5.8zM521.2 537.7h5.8v1.4h-5.8zM521.2 540.1h5.8v1.4h-5.8zM521.2 542.6h5.8v1.4h-5.8zM521.2 545h5.8v1.4h-5.8zM521.2 547.4h5.8v1.4h-5.8zM521.2 549.8h5.8v1.4h-5.8zM521.2 552.2h5.8v1.4h-5.8zM521.2 554.7h5.8v1.4h-5.8zM521.2 557.1h5.8v1.4h-5.8zM521.2 559.5h5.8v1.4h-5.8zM521.2 561.9h5.8v1.4h-5.8zM561.3 531h5.7v1.9h-5.7zM561.3 533.7h5.7v1.9h-5.7zM561.3 536.4h5.7v1.9h-5.7zM561.3 539.1h5.7v1.9h-5.7zM562.2 543.6h1.9v4.6h-1.9zM560 550.4h6v1.4h-6zM560 554.3h6v1.7h-6zM569 550.4h6.3v1.4h-6.3zM569 554.3h6.3v1.7h-6.3zM555.4 561.8h1.9v4h-1.9zM424.6 558h6v1.2h-6zM438.8 555.6h1.7v4.2h-1.7zM461 563h2v3.8h-2zM466 563h2v3.8h-2zM470.7 563h2v3.8h-2zM476 563h2v3.8h-2zM481 563h2v3.8h-2zM436.8 571.8h2v4.7h-2zM440.7 571.8h2v4.7h-2zM448.9 571.8h2v4.7h-2zM457.6 571.8h2v4.7h-2zM463.5 571.8h2v4.7h-2zM468.3 571.8h2v4.7h-2zM473.8 571.8h2v4.7h-2zM416.8 575h1.9v3.5h-1.9zM433.3 581h1.4v3.2h-1.4zM435.9 581h1.4v3.2h-1.4zM438.6 581h1.4v3.2h-1.4zM441.2 581h1.4v3.2h-1.4zM443.9 581h1.4v3.2h-1.4zM446.6 581h1.4v3.2h-1.4zM449.2 581h1.4v3.2h-1.4zM451.9 581h1.4v3.2h-1.4zM454.5 581h1.4v3.2h-1.4zM457.2 581h1.4v3.2h-1.4zM459.8 581h1.4v3.2h-1.4zM462.4 581h1.4v3.2h-1.4zM465.1 581h1.4v3.2h-1.4zM467.8 581h1.4v3.2h-1.4zM470.4 581h1.4v3.2h-1.4zM473.1 581h1.4v3.2h-1.4zM475.7 581h1.4v3.2h-1.4zM478.4 581h1.4v3.2h-1.4zM433.3 623.6h1.4v3.1h-1.4zM435.9 623.6h1.4v3.1h-1.4zM438.6 623.6h1.4v3.1h-1.4zM441.2 623.6h1.4v3.1h-1.4zM443.9 623.6h1.4v3.1h-1.4zM446.6 623.6h1.4v3.1h-1.4zM449.2 623.6h1.4v3.1h-1.4zM451.9 623.6h1.4v3.1h-1.4zM454.5 623.6h1.4v3.1h-1.4zM457.2 623.6h1.4v3.1h-1.4zM459.8 623.6h1.4v3.1h-1.4zM462.4 623.6h1.4v3.1h-1.4zM465.1 623.6h1.4v3.1h-1.4zM467.8 623.6h1.4v3.1h-1.4zM470.4 623.6h1.4v3.1h-1.4zM473.1 623.6h1.4v3.1h-1.4zM475.7 623.6h1.4v3.1h-1.4zM478.4 623.6h1.4v3.1h-1.4zM427.9 586.2h3.9v1.3h-3.9zM427.9 588.8h3.9v1.3h-3.9zM427.9 591.4h3.9v1.3h-3.9zM427.9 594.1h3.9v1.3h-3.9zM427.9 596.7h3.9v1.3h-3.9zM427.9 599.3h3.9v1.3h-3.9zM427.9 601.9h3.9v1.3h-3.9zM427.9 604.5h3.9v1.3h-3.9zM427.9 607.2h3.9v1.3h-3.9zM427.9 609.8h3.9v1.3h-3.9zM427.9 612.4h3.9v1.3h-3.9zM427.9 615h3.9v1.3h-3.9zM427.9 617.6h3.9v1.3h-3.9zM427.9 620.3h3.9v1.3h-3.9zM482.9 586.2h3.9v1.3h-3.9zM482.9 588.8h3.9v1.3h-3.9zM482.9 591.4h3.9v1.3h-3.9zM482.9 594.1h3.9v1.3h-3.9zM482.9 596.7h3.9v1.3h-3.9zM482.9 599.3h3.9v1.3h-3.9zM482.9 601.9h3.9v1.3h-3.9zM482.9 604.5h3.9v1.3h-3.9zM482.9 607.2h3.9v1.3h-3.9zM482.9 609.8h3.9v1.3h-3.9zM482.9 612.4h3.9v1.3h-3.9zM482.9 615h3.9v1.3h-3.9zM482.9 617.6h3.9v1.3h-3.9zM482.9 620.3h3.9v1.3h-3.9zM413.9 584.9h5.8v1.4h-5.8zM413.9 588.5h5.8v1.7h-5.8zM413.9 595.4h5.8v2h-5.8zM413.9 600.2h5.8v2h-5.8zM413.9 604.7h5.8v2h-5.8zM413.9 610h5.8v2h-5.8zM413.9 616.6h5.8v2.4h-5.8zM413.9 621.6h5.8v2.2h-5.8zM413.9 625.6h5.8v2.2h-5.8zM494.6 579.6h1.9v4.2h-1.9zM499 579.6h1.9v4.2h-1.9zM506.8 579.6h2.3v4.2h-2.3zM493.2 591.3h6.2v1.4h-6.2zM493.2 596.5h6.2v1.4h-6.2zM493.2 601.4h6.2v2h-6.2zM493.2 607.2h6.2v1.6h-6.2zM493.2 610.1h6.2v2h-6.2zM493.2 619.9h6.2v1h-6.2zM503.3 590.7h4.9v1.4h-4.9zM503.3 595.6h4.9v1.6h-4.9zM503.3 600.4h4.9v2h-4.9zM503.3 605.7h4.9v1.2h-4.9zM511.1 590.7h5.8v1.4h-5.8zM511.1 596.5h5.8v1.4h-5.8zM511.1 601h5.8v2h-5.8zM504.9 619.9h6.2v1.4h-6.2zM504.9 623.2h6.2v1.6h-6.2zM514 623.7h5.9v1.1h-5.9zM497.9 628.6h5.8v1.2h-5.8zM424.6 632.9h1.9v4.4h-1.9zM440 632.9h1.9v4.4h-1.9zM446 632.9h1.9v4.4h-1.9zM454.7 632.9h1.9v4.4h-1.9zM460 632.9h1.9v4.4h-1.9zM470.7 632.9h1.9v4.4h-1.9zM477 632.9h1.9v4.4h-1.9zM481 632.9h1.9v4.4h-1.9zM485.4 632.9h1.9v4.4h-1.9zM489.7 632.9h1.9v4.4h-1.9zM433.3 632.9h1v4.4h-1zM468.7 641.2h1.9v3.4h-1.9zM474.5 641.2h1.9v3.4h-1.9zM481 641.2h5.8v1.6h-5.8zM522.8 641.2h4.8v1.4h-4.8zM522.8 644.1h4.8v1.4h-4.8zM522.8 647h4.8v1.4h-4.8zM547 590.7h6v1h-6zM554.9 587.2h5.8v1.2h-5.8zM554.9 590.1h5.8v1.2h-5.8zM563.2 587.2h5.8v1.2h-5.8zM563.2 590.1h5.8v1.2h-5.8zM545 594.6h1.3v4.2h-1.3zM547.9 594.6h1.3v4.2h-1.3zM550.8 594.6h1.3v4.2h-1.3zM553.7 594.6h1.3v4.2h-1.3zM556.6 594.6h1.3v4.2h-1.3zM545 607.2h1.3v4.2h-1.3zM547.9 607.2h1.3v4.2h-1.3zM550.8 607.2h1.3v4.2h-1.3zM553.7 607.2h1.3v4.2h-1.3zM556.6 607.2h1.3v4.2h-1.3zM567 605.2h2v3.8h-2zM577.6 609.5h1.6v3.9h-1.6zM550 620.4h1.9v3.3h-1.9zM554.9 620.4h1.9v3.3h-1.9zM558.7 620.4h1.9v3.3h-1.9zM562 650.4h2v4.5h-2zM567 650.4h2v4.5h-2zM545 662.6h1.9v3.9h-1.9zM418 671h6v1.5h-6zM489.3 671h1.8v4.7h-1.8zM433.3 700.5h5.9v1.6h-5.9zM433.3 704.1h5.9v1.6h-5.9zM433.3 707.7h5.9v1.6h-5.9zM444 697.6h4v1.4h-4zM444 700.5h4v1.4h-4zM444 703.4h4v1.4h-4zM444 706.3h4v1.4h-4zM444 709.2h4v1.4h-4zM459.6 697.6h3.3v1.3h-3.3zM459.6 700.5h3.3v1.3h-3.3zM459.6 703.4h3.3v1.3h-3.3zM459.6 706.3h3.3v1.3h-3.3zM459.6 709.2h3.3v1.3h-3.3zM468.3 703.5h5.9v1.7h-5.9zM468.3 708.3h5.9v1.7h-5.9zM476 703.5h6.3v1.7h-6.3zM476 708.3h6.3v1.7h-6.3zM509 703h1.9v3.4h-1.9zM513 679.5h6.3v1.8h-6.3zM513 682.5h6.3v1.8h-6.3zM513 685.6h6.3v1.8h-6.3zM513 688.6h6.3v1.8h-6.3zM513 691.7h6.3v1.8h-6.3zM513 694.8h6.3v1.8h-6.3zM513 697.8h6.3v1.8h-6.3zM513 700.9h6.3v1.8h-6.3zM513 703.9h6.3v1.8h-6.3zM513 707h6.3v1.8h-6.3zM513 710h6.3v1.8h-6.3zM521.2 671.8h5.8v2.2h-5.8zM521.2 675.4h5.8v2.2h-5.8zM521.2 679h5.8v2.2h-5.8zM521.2 682.6h5.8v2.2h-5.8zM521.2 686.2h5.8v2.2h-5.8zM521.2 689.8h5.8v2.2h-5.8zM521.2 693.4h5.8v2.2h-5.8zM521.2 697h5.8v2.2h-5.8zM521.2 700.6h5.8v2.2h-5.8zM521.2 704.2h5.8v2.2h-5.8zM521.2 707.8h5.8v2.2h-5.8zM546 679.5h1.6v3.2h-1.6zM549.1 679.5h1.6v3.2h-1.6zM552.3 679.5h1.6v3.2h-1.6zM555.5 679.5h1.6v3.2h-1.6zM558.6 679.5h1.6v3.2h-1.6zM561.8 679.5h1.6v3.2h-1.6zM564.9 679.5h1.6v3.2h-1.6zM568 679.5h1.6v3.2h-1.6zM571.2 679.5h1.6v3.2h-1.6zM574.4 679.5h1.6v3.2h-1.6zM538.7 685h4.5v1.3h-4.5zM538.7 687.9h4.5v1.3h-4.5zM538.7 690.8h4.5v1.3h-4.5zM538.7 693.7h4.5v1.3h-4.5zM538.7 696.6h4.5v1.3h-4.5zM538.7 699.5h4.5v1.3h-4.5zM538.7 702.4h4.5v1.3h-4.5zM538.7 705.3h4.5v1.3h-4.5zM538.7 708.2h4.5v1.3h-4.5zM546 710.3h1.6v1.7h-1.6zM549.1 710.3h1.6v1.7h-1.6zM552.3 710.3h1.6v1.7h-1.6zM555.5 710.3h1.6v1.7h-1.6zM558.6 710.3h1.6v1.7h-1.6zM561.8 710.3h1.6v1.7h-1.6zM564.9 710.3h1.6v1.7h-1.6zM568 710.3h1.6v1.7h-1.6zM571.2 710.3h1.6v1.7h-1.6zM574.4 710.3h1.6v1.7h-1.6zM542.6 669.2h1.9v4.4h-1.9zM547.7 669.2h1.9v4.4h-1.9zM551 669.2h1.9v4.4h-1.9zM565.5 669h2v4.6h-2zM571 669h2v4.6h-2zM576.2 669h2v4.6h-2zM581.5 669h2v4.6h-2zM593.7 668.6h1.9v4.6h-1.9zM597.6 668.6h1.9v4.6h-1.9zM601.5 668.6h1.9v4.6h-1.9zM592.8 674.4h5.4v1.4h-5.4zM608.7 668.6h2v4.4h-2zM614.5 676.2h2v4.5h-2zM621.5 676.2h2v4.5h-2zM595.7 680h6.3v1.6h-6.3zM595.7 683.5h6.3v1.6h-6.3zM591.8 689.3h6.2v1.7h-6.2zM591.8 692.8h6.2v1.7h-6.2zM591.8 699h6.2v1.7h-6.2zM591.8 702.5h6.2v1.7h-6.2zM591.8 708.5h6.2v1.7h-6.2zM601.5 689h5.3v1.8h-5.3zM601.5 692.6h5.3v1.8h-5.3zM601.5 706.5h5.3v1.8h-5.3zM611 685h6v1.8h-6zM611 688h6v1.8h-6zM611 691.8h6v1.8h-6zM611 696.6h6v1.8h-6zM611 699.6h6v1.8h-6zM611 704.5h6v1.8h-6zM617.7 696.3h6.2v1.8h-6.2zM617.7 699.6h6.2v1.8h-6.2zM617.7 704.5h6.2v1.8h-6.2zM679 713h1v1h-1zM546 712.6h1.6v3.2h-1.6zM549.1 712.6h1.6v3.2h-1.6zM552.3 712.6h1.6v3.2h-1.6zM555.5 712.6h1.6v3.2h-1.6zM558.6 712.6h1.6v3.2h-1.6zM561.8 712.6h1.6v3.2h-1.6zM564.9 712.6h1.6v3.2h-1.6zM568 712.6h1.6v3.2h-1.6zM571.2 712.6h1.6v3.2h-1.6zM574.4 712.6h1.6v3.2h-1.6zM532 722.5h1.8v3.4h-1.8zM535.3 722.5h1.8v3.4h-1.8zM538.6 722.5h1.8v3.4h-1.8zM541.9 722.5h1.8v3.4h-1.8zM545.2 722.5h1.8v3.4h-1.8zM548.5 722.5h1.8v3.4h-1.8zM551.8 722.5h1.8v3.4h-1.8zM555.1 722.5h1.8v3.4h-1.8zM611.5 721.5h6.4v1.6h-6.4zM611.5 724.3h6.4v1.6h-6.4zM611.5 727.1h6.4v1.6h-6.4zM611.5 729.9h6.4v1.6h-6.4zM611.5 732.7h6.4v1.6h-6.4zM627 721.5h5.6v1.6h-5.6zM627 724.3h5.6v1.6h-5.6zM627 727.1h5.6v1.6h-5.6zM627 729.9h5.6v1.6h-5.6zM627 732.7h5.6v1.6h-5.6zM587 747.5h1.9v5.6h-1.9zM590.4 747.5h1.9v5.6h-1.9zM593.8 747.5h1.9v5.6h-1.9zM597.2 747.5h1.9v5.6h-1.9zM600.6 747.5h1.9v5.6h-1.9zM604 747.5h1.9v5.6h-1.9zM607.4 747.5h1.9v5.6h-1.9zM610.8 747.5h1.9v5.6h-1.9zM568.5 757.5h2.2v2.2h-2.2zM566.7 761.7h2.2v2.2h-2.2zM562.5 763.5h2.2v2.2h-2.2zM558.3 761.7h2.2v2.2h-2.2zM556.5 757.5h2.2v2.2h-2.2zM558.2 753.3h2.2v2.2h-2.2zM562.5 751.5h2.2v2.2h-2.2zM566.7 753.2h2.2v2.2h-2.2zM500.5 746h2.2v2.2h-2.2zM505 746h2.2v2.2h-2.2zM511.5 746h2.2v2.2h-2.2zM516 746h2.2v2.2h-2.2zM522 746h2.2v2.2h-2.2zM527 746h2.2v2.2h-2.2zM503 752h2.4v2.2h-2.4zM509 752h2.4v2.2h-2.4zM520 752h2.4v2.2h-2.4zM525.5 752h2.4v2.2h-2.4zM411 745h1.9v2.6h-1.9zM414.4 745h1.9v2.6h-1.9zM417.8 745h1.9v2.6h-1.9zM421.2 745h1.9v2.6h-1.9zM424.6 745h1.9v2.6h-1.9zM428 745h1.9v2.6h-1.9zM431.4 745h1.9v2.6h-1.9zM434.8 745h1.9v2.6h-1.9zM438.2 745h1.9v2.6h-1.9zM411 749.6h1.9v2.6h-1.9zM414.4 749.6h1.9v2.6h-1.9zM417.8 749.6h1.9v2.6h-1.9zM421.2 749.6h1.9v2.6h-1.9zM424.6 749.6h1.9v2.6h-1.9zM428 749.6h1.9v2.6h-1.9zM431.4 749.6h1.9v2.6h-1.9zM434.8 749.6h1.9v2.6h-1.9zM438.2 749.6h1.9v2.6h-1.9zM196.5 723h2.6v2h-2.6zM201 727.5h2.6v2h-2.6zM207 723.5h2.6v2h-2.6zM212.5 721h2.6v2h-2.6zM218 725h2.6v2h-2.6zM200 735.5h2.6v2h-2.6zM206 739h2.6v2h-2.6zM212 735h2.6v2h-2.6zM218.5 738.5h2.6v2h-2.6zM223 733h2.6v2h-2.6zM197 741h2.6v2h-2.6zM209 746h2.6v2h-2.6zM216 744h2.6v2h-2.6zM222 742h2.6v2h-2.6zM271 701.4h2.2v5h-2.2zM274.4 701.4h2.2v5h-2.2zM277.8 701.4h2.2v5h-2.2zM281.2 701.4h2.2v5h-2.2zM271 714.4h2.2v4.2h-2.2zM274.4 714.4h2.2v4.2h-2.2zM277.8 714.4h2.2v4.2h-2.2zM281.2 714.4h2.2v4.2h-2.2zM324 745.4h2.2v2.2h-2.2zM328.5 745.4h2.2v2.2h-2.2zM323 745.4h2.2v2.2h-2.2zM329 745.4h2.2v2.2h-2.2zM325 722.8h2.4v1.6h-2.4zM329.5 722.8h2.4v1.6h-2.4zM296 735.5h1.9v2.6h-1.9zM300.5 735.5h1.9v2.6h-1.9z"/>
<path fill="#2f6e3e" d="M203 436.8h4.4v4.4h-4.4zM203 443.4h4.4v4.4h-4.4zM217.5 436.8h4.4v4.4h-4.4zM217.5 443.4h4.4v4.4h-4.4zM247.7 437.8h4.4v4.4h-4.4zM247.7 443.8h4.4v4.4h-4.4zM325.4 437.8h4.4v4.4h-4.4zM325.4 443.8h4.4v4.4h-4.4zM250.4 454.5h4.4v5.8h-4.4zM250.4 461.8h4.4v4.2h-4.4zM324 454.5h4.4v5.8h-4.4zM324 461.8h4.4v4.2h-4.4zM197 462.4h5v5.2h-5zM197 470.1h5v5.2h-5zM226 462.4h5v5.2h-5zM226 470.1h5v5.2h-5zM201 479.5h4.6v6.2h-4.6zM201 490.5h4.6v6.2h-4.6zM201 498.1h4.6v6.2h-4.6zM201 509.1h4.6v6.2h-4.6zM254.4 479.1h2.6v2.4h-2.6zM252.6 485.3h2.6v2.4h-2.6zM257.6 485.3h2.6v2.4h-2.6zM274 471.1h5v5.6h-5zM274 481.6h5v6.2h-5zM223 494.5h9v2.4h-9zM223 498.1h9v2.2h-9zM233.5 494.5h9v2.4h-9zM233.5 498.1h9v2.2h-9zM245.6 494.5h10.4v2.4h-10.4zM245.6 498.1h10.4v2.2h-10.4zM259 495.1h2.4v5h-2.4zM262.4 494.7h2.4v5.2h-2.4zM268.5 498.1h2.6v6.2h-2.6zM273.3 498.1h2.6v6.2h-2.6zM220.7 507.1h3.2v5.2h-3.2zM263 507.5h2.6v4.2h-2.6zM272.6 507.5h2.2v4.2h-2.2zM244 510.1h4v5.4h-4zM260 512.4h3v6.2h-3zM267.4 512.4h3.2v6.2h-3.2zM251 515.5h2.4v2.2h-2.4zM256.7 515.5h2.4v2.2h-2.4zM201 510.1h4.6v5.2h-4.6zM388.3 431.4h4.4v4.4h-4.4zM388.3 438.3h4.4v4.4h-4.4zM405.4 431.4h4.4v4.4h-4.4zM405.4 438.3h4.4v4.4h-4.4zM419.6 431.4h4.4v4.4h-4.4zM419.6 438.3h4.4v4.4h-4.4zM435.6 431.4h4.4v4.4h-4.4zM435.6 438.3h4.4v4.4h-4.4zM451 431.4h4.4v4.4h-4.4zM451 438.3h4.4v4.4h-4.4zM468 431.4h4.4v4.4h-4.4zM468 438.3h4.4v4.4h-4.4zM486 431.4h4.4v4.4h-4.4zM486 438.3h4.4v4.4h-4.4zM502 431.4h4.4v4.4h-4.4zM502 438.3h4.4v4.4h-4.4zM389.4 476.7h4.2v4.4h-4.2zM389.4 482.7h4.2v4.4h-4.2zM405.4 476.7h4.2v4.4h-4.2zM405.4 482.7h4.2v4.4h-4.2zM377.5 490.9h3.6v4h-3.6zM395 490.5h3.8v4.2h-3.8zM418.5 490.9h3.2v4h-3.2zM371.7 494.7h3.2v4.8h-3.2zM371.7 501.4h3.2v4.6h-3.2zM412.3 494.7h3.2v4.6h-3.2zM412.3 500.9h3.2v4.6h-3.2zM460.8 389.4h5.8v3h-5.8zM470.2 389.8h6.6v2.8h-6.6zM485 386.9h3.2v4.6h-3.2zM489.6 386.9h3.2v4.6h-3.2zM495.8 386.9h3.2v4.6h-3.2zM478.3 395.1h3.6v6.3h-3.6zM491.5 397.7h2.6v4.6h-2.6zM504 397.7h3v4.6h-3zM492 406.3h4.9v5.6h-4.9zM511.4 404.4h5.2v5.6h-5.2zM492 416.6h4.9v5.7h-4.9zM511.4 415.6h5.2v5.7h-5.2zM559 408.1h4v5.4h-4zM556 433.1h3.9v4.2h-3.9zM499.3 423.8h3.4v5.2h-3.4zM514.3 423.6h3.5v5.4h-3.5zM556.5 391.9h7.4v2.6h-7.4zM592.8 391.9h7.4v2.6h-7.4zM627.8 391.9h7.4v2.6h-7.4zM631.6 400.5h3.9v5.6h-3.9zM425.4 476.9h4.2v4.4h-4.2zM425.4 482.7h4.2v4.4h-4.2zM441.4 476.9h4.2v4.4h-4.2zM441.4 482.7h4.2v4.4h-4.2zM465 476.9h4.2v4.4h-4.2zM465 482.7h4.2v4.4h-4.2zM482 476.9h4.2v4.4h-4.2zM482 482.7h4.2v4.4h-4.2zM504.6 476.9h4.2v4.4h-4.2zM504.6 482.7h4.2v4.4h-4.2zM522.5 476.9h4.2v4.4h-4.2zM522.5 482.7h4.2v4.4h-4.2zM537 485.1h3.6v4.8h-3.6zM433.2 490.5h2.8v4.2h-2.8zM458.9 490.9h3.5v4h-3.5zM473.5 490.5h3.3v4.2h-3.3zM500.1 490.5h3.9v4.4h-3.9zM515.3 490.5h3.5v4.2h-3.5zM453.4 494.4h3.2v5h-3.2zM453.4 501.1h3.2v5h-3.2zM493.5 494.4h3.2v5h-3.2zM493.5 501.1h3.2v5h-3.2zM540 494.4h4.8v6.2h-4.8zM540 505.1h4.8v6h-4.8zM627 483.3h8.4v3.1h-8.4zM640.3 483.3h8.7v3.1h-8.7zM634 494.4h8.6v3.1h-8.6zM227.9 571.3h2.9v4.7h-2.9zM225 579.7h2.9v5.1h-2.9zM232.7 571.3h2.9v4.7h-2.9zM229.8 579.7h2.9v5.1h-2.9zM234.7 579.7h2.9v5.1h-2.9zM242.4 571.3h2.9v4.7h-2.9zM244.3 579.7h2.9v5.1h-2.9zM252.1 571.3h2.9v4.7h-2.9zM249.2 579.7h2.9v5.1h-2.9zM256.9 571.3h2.9v4.7h-2.9zM254 579.7h2.9v5.1h-2.9zM261.7 571.3h2.9v4.7h-2.9zM266.5 571.3h2.9v4.7h-2.9zM263.6 579.7h2.9v5.1h-2.9zM268.5 579.7h2.9v5.1h-2.9zM276.2 571.3h2.9v4.7h-2.9zM273.3 579.7h2.9v5.1h-2.9zM281 571.3h2.9v4.7h-2.9zM283 579.7h2.9v5.1h-2.9zM290.7 571.3h2.9v4.7h-2.9zM287.8 579.7h2.9v5.1h-2.9zM295.5 571.3h2.9v4.7h-2.9zM300.4 571.3h2.9v4.7h-2.9zM297.4 579.7h2.9v5.1h-2.9zM301.4 600.5h2.9v2.7h-2.9zM305.7 600.5h2.9v2.7h-2.9zM269.3 609.1h2.9v2.7h-2.9zM274.2 609.1h2.9v2.7h-2.9zM262.9 618.1h3.1v5.5h-3.1zM272.2 637.5h4.9v6.2h-4.9zM272.2 647.6h4.9v6.2h-4.9zM272.2 658.1h4.9v6.2h-4.9zM272.2 668.6h4.9v6.2h-4.9zM290 649.1h6v2.5h-6zM290 653.6h6v2.5h-6zM290 658.1h6v2.5h-6zM305.3 651.5h5.8v6.2h-5.8zM338.3 650.1h6.4v2.5h-6.4zM265.4 682.1h2.9v2.4h-2.9zM273.2 682.1h2.9v2.4h-2.9zM279 682.1h2.9v2.4h-2.9zM287.2 682.1h2.9v2.4h-2.9zM253.2 685.7h4.4v4.1h-4.4zM253.2 691.9h4.4v4.7h-4.4zM253.2 706.5h4.4v3.7h-4.4zM289.3 687.4h3.7v4.3h-3.7zM289.3 694.4h3.7v4.1h-3.7zM289.3 703.1h3.7v5.1h-3.7zM338.3 700.1h4.5v6.6h-4.5zM392.4 576.1h6.2v3.4h-6.2zM401 576.1h5.8v3.4h-5.8zM367 586.1h5.7v3.5h-5.7zM375.3 586.1h5.7v3.5h-5.7zM404 587.9h4v3.3h-4zM404 594.1h4v3.3h-4zM405.4 604.4h4.6v3.1h-4.6zM405.4 614.1h4.6v3.3h-4.6zM426.5 532.5h6.8v2.8h-6.8zM488 532.5h6v2.8h-6zM566 543.5h3.8v5h-3.8zM572.4 543.5h3.6v5h-3.6zM560 561.6h2.7v4.7h-2.7zM566 561.6h2.9v4.7h-2.9zM571 561.4h3.9v5.4h-3.9zM424 554.4h7.8v2.2h-7.8zM433 554.4h2.7v5.1h-2.7zM442 557.3h6.5v3.2h-6.5zM451.2 557.3h6.8v3.2h-6.8zM503 579.7h2.9v4.1h-2.9zM505.9 609.6h4.8v3h-4.8zM505.9 615.1h4.8v2.8h-4.8zM504.9 626.4h5.8v2.2h-5.8zM422 640h4v4.1h-4zM438 640.4h5v3.3h-5zM453 640.4h4.6v3.3h-4.6zM462 640.4h4v3.3h-4zM495 633.6h4.8v4h-4.8zM495 639.4h4.8v5h-4.8zM545 578.1h11.8v4.8h-11.8zM567.9 578.1h10.9v4.8h-10.9zM540.3 594.7h2.5v4.2h-2.5zM559.7 594.7h2.9v4.2h-2.9zM540.3 607.3h2.5v4.2h-2.5zM559.7 607.3h2.9v4.2h-2.9zM540.3 612.8h2.5v3.7h-2.5zM571.8 604.4h3.9v5.1h-3.9zM567 612.1h8.3v2.4h-8.3zM529 627.3h6.4v3.6h-6.4zM538.3 627.3h7.2v3.6h-7.2zM529 634.5h6.4v3.7h-6.4zM538.3 634.5h7.2v3.7h-7.2zM569 624.4h4.7v6.1h-4.7zM569 635.5h4.7v6h-4.7zM538.3 641.3h4.5v5.6h-4.5zM538.3 651.7h4.7v6.9h-4.7zM468 692.9h6.5v2.7h-6.5zM536 669.9h3.3v5.3h-3.3zM586 668.6h3.9v4.7h-3.9zM556 734.5h12v5.2h-12zM578 734.5h12v5.2h-12zM503 758.1h7v4.4h-7zM512 758.1h5.4v4.4h-5.4zM528 763.9h6v3.2h-6zM537.5 763.9h5.6v3.2h-5.6zM534.5 745.5h2.6v2.6h-2.6zM538.7 745.5h2.6v2.6h-2.6zM458.9 365.5h4.4v8.4h-4.4zM491.5 365.5h4.4v8.4h-4.4zM252.6 712.7h5v4.6h-5zM252.6 719.2h5v6.4h-5zM252.6 730.3h5v6h-5zM289 711.7h4.6v4.6h-4.6zM289 721.8h4.6v4.4h-4.6zM289 727.9h4.6v4.8h-4.6zM338.2 700.8h4.9v6.5h-4.9zM338.2 711.5h4.9v6.2h-4.9zM341.3 722.5h5.6v6.3h-5.6zM341.3 733.5h5.6v6.8h-5.6zM297.7 750.5h4.9v5.5h-4.9zM297.7 760.5h4.9v5.8h-4.9z"/>
<path fill="#4c9a3c" d="M402 534h4v1.3h-4zM402 537.2h4v1.3h-4zM402 540.4h4v1.3h-4zM402 543.6h4v1.3h-4zM392.8 603.5h4.2v1.2h-4.2zM392.8 605.5h4.2v1.2h-4.2zM392.8 607.5h4.2v1.2h-4.2zM392.8 609.5h4.2v1.2h-4.2zM392.8 611.5h4.2v1.2h-4.2zM392.8 616.5h4.2v1.2h-4.2zM392.8 618.9h4.2v1.2h-4.2zM392.8 621.2h4.2v1.2h-4.2zM392.8 623.5h4.2v1.2h-4.2zM392.8 625.9h4.2v1.2h-4.2zM392.8 631h4.2v1.2h-4.2zM392.8 633.5h4.2v1.2h-4.2zM392.8 635.9h4.2v1.2h-4.2zM392.8 638.4h4.2v1.2h-4.2zM392.8 640.8h4.2v1.2h-4.2zM392.8 643.2h4.2v1.2h-4.2zM392.8 645.7h4.2v1.2h-4.2zM417.8 534.5h3.9v1.2h-3.9zM417.8 537.5h3.9v1.2h-3.9zM417.8 540.5h3.9v1.2h-3.9zM417.8 543.5h3.9v1.2h-3.9zM462 535.5h5.4v1.3h-5.4zM462 538.4h5.4v1.3h-5.4zM462 541.3h5.4v1.3h-5.4zM462 544.2h5.4v1.3h-5.4zM479 535.5h4v1.3h-4zM479 538.4h4v1.3h-4zM479 541.3h4v1.3h-4zM479 544.2h4v1.3h-4zM532.9 538h4.5v1.3h-4.5zM532.9 540.6h4.5v1.3h-4.5zM532.9 543.2h4.5v1.3h-4.5zM532.9 545.8h4.5v1.3h-4.5zM532.9 548.4h4.5v1.3h-4.5zM532.9 551h4.5v1.3h-4.5zM532.9 553.6h4.5v1.3h-4.5zM532.9 556.2h4.5v1.3h-4.5zM551 538h4.2v1.3h-4.2zM551 540.6h4.2v1.3h-4.2zM551 543.2h4.2v1.3h-4.2zM551 545.8h4.2v1.3h-4.2zM551 548.4h4.2v1.3h-4.2zM551 551h4.2v1.3h-4.2zM551 553.6h4.2v1.3h-4.2zM551 556.2h4.2v1.3h-4.2zM429 660.7h3.9v1.2h-3.9zM479 660.7h4.9v1.2h-4.9zM429 663.1h3.9v1.2h-3.9zM479 663.1h4.9v1.2h-4.9zM429 665.5h3.9v1.2h-3.9zM479 665.5h4.9v1.2h-4.9zM429 667.9h3.9v1.2h-3.9zM479 667.9h4.9v1.2h-4.9zM429 670.3h3.9v1.2h-3.9zM479 670.3h4.9v1.2h-4.9zM429 672.7h3.9v1.2h-3.9zM479 672.7h4.9v1.2h-4.9zM429 675.1h3.9v1.2h-3.9zM479 675.1h4.9v1.2h-4.9zM429 677.5h3.9v1.2h-3.9zM479 677.5h4.9v1.2h-4.9zM429 679.9h3.9v1.2h-3.9zM479 679.9h4.9v1.2h-4.9zM429 682.3h3.9v1.2h-3.9zM479 682.3h4.9v1.2h-4.9zM578.8 685h4.2v1.3h-4.2zM578.8 687.9h4.2v1.3h-4.2zM578.8 690.8h4.2v1.3h-4.2zM578.8 693.7h4.2v1.3h-4.2zM578.8 696.6h4.2v1.3h-4.2zM578.8 699.5h4.2v1.3h-4.2zM578.8 702.4h4.2v1.3h-4.2zM578.8 705.3h4.2v1.3h-4.2zM578.8 708.2h4.2v1.3h-4.2zM268 683h1.8v1.8h-1.8zM272.5 683h1.8v1.8h-1.8zM277 683h1.8v1.8h-1.8zM281.5 683h1.8v1.8h-1.8zM268 688h1.8v1.8h-1.8zM272.5 688h1.8v1.8h-1.8zM277 688h1.8v1.8h-1.8zM281.5 688h1.8v1.8h-1.8zM268 693h1.8v1.8h-1.8zM272.5 693h1.8v1.8h-1.8zM277 693h1.8v1.8h-1.8zM281.5 693h1.8v1.8h-1.8zM272 722.4h1.9v2.2h-1.9zM276.5 722.4h1.9v2.2h-1.9zM281 722.4h1.9v2.2h-1.9zM272 727h1.9v2.2h-1.9zM276.5 727h1.9v2.2h-1.9zM281 727h1.9v2.2h-1.9z"/>
<path fill="#24552f" d="M259 659.1h2.7v5.4h-2.7zM452.4 600.5h9.3v6h-9.3zM549.4 626.4h7.4v3.1h-7.4zM549.4 635.5h7.4v3.7h-7.4z"/>
<path fill="none" stroke="#58d864" stroke-width="1.0" d="M203 436.8h4.4v4.4h-4.4zM203 443.4h4.4v4.4h-4.4zM217.5 436.8h4.4v4.4h-4.4zM217.5 443.4h4.4v4.4h-4.4zM247.7 437.8h4.4v4.4h-4.4zM247.7 443.8h4.4v4.4h-4.4zM325.4 437.8h4.4v4.4h-4.4zM325.4 443.8h4.4v4.4h-4.4zM250.4 454.5h4.4v5.8h-4.4zM250.4 461.8h4.4v4.2h-4.4zM324 454.5h4.4v5.8h-4.4zM324 461.8h4.4v4.2h-4.4zM197 462.4h5v5.2h-5zM197 470.1h5v5.2h-5zM226 462.4h5v5.2h-5zM226 470.1h5v5.2h-5zM201 479.5h4.6v6.2h-4.6zM201 490.5h4.6v6.2h-4.6zM201 498.1h4.6v6.2h-4.6zM201 509.1h4.6v6.2h-4.6zM254.4 479.1h2.6v2.4h-2.6zM252.6 485.3h2.6v2.4h-2.6zM257.6 485.3h2.6v2.4h-2.6zM274 471.1h5v5.6h-5zM274 481.6h5v6.2h-5zM223 494.5h9v2.4h-9zM223 498.1h9v2.2h-9zM233.5 494.5h9v2.4h-9zM233.5 498.1h9v2.2h-9zM245.6 494.5h10.4v2.4h-10.4zM245.6 498.1h10.4v2.2h-10.4zM259 495.1h2.4v5h-2.4zM262.4 494.7h2.4v5.2h-2.4zM268.5 498.1h2.6v6.2h-2.6zM273.3 498.1h2.6v6.2h-2.6zM220.7 507.1h3.2v5.2h-3.2zM263 507.5h2.6v4.2h-2.6zM272.6 507.5h2.2v4.2h-2.2zM244 510.1h4v5.4h-4zM260 512.4h3v6.2h-3zM267.4 512.4h3.2v6.2h-3.2zM251 515.5h2.4v2.2h-2.4zM256.7 515.5h2.4v2.2h-2.4zM201 510.1h4.6v5.2h-4.6zM388.3 431.4h4.4v4.4h-4.4zM388.3 438.3h4.4v4.4h-4.4zM405.4 431.4h4.4v4.4h-4.4zM405.4 438.3h4.4v4.4h-4.4zM419.6 431.4h4.4v4.4h-4.4zM419.6 438.3h4.4v4.4h-4.4zM435.6 431.4h4.4v4.4h-4.4zM435.6 438.3h4.4v4.4h-4.4zM451 431.4h4.4v4.4h-4.4zM451 438.3h4.4v4.4h-4.4zM468 431.4h4.4v4.4h-4.4zM468 438.3h4.4v4.4h-4.4zM486 431.4h4.4v4.4h-4.4zM486 438.3h4.4v4.4h-4.4zM502 431.4h4.4v4.4h-4.4zM502 438.3h4.4v4.4h-4.4zM389.4 476.7h4.2v4.4h-4.2zM389.4 482.7h4.2v4.4h-4.2zM405.4 476.7h4.2v4.4h-4.2zM405.4 482.7h4.2v4.4h-4.2zM377.5 490.9h3.6v4h-3.6zM395 490.5h3.8v4.2h-3.8zM418.5 490.9h3.2v4h-3.2zM371.7 494.7h3.2v4.8h-3.2zM371.7 501.4h3.2v4.6h-3.2zM412.3 494.7h3.2v4.6h-3.2zM412.3 500.9h3.2v4.6h-3.2zM460.8 389.4h5.8v3h-5.8zM470.2 389.8h6.6v2.8h-6.6zM485 386.9h3.2v4.6h-3.2zM489.6 386.9h3.2v4.6h-3.2zM495.8 386.9h3.2v4.6h-3.2zM478.3 395.1h3.6v6.3h-3.6zM491.5 397.7h2.6v4.6h-2.6zM504 397.7h3v4.6h-3zM492 406.3h4.9v5.6h-4.9zM511.4 404.4h5.2v5.6h-5.2zM492 416.6h4.9v5.7h-4.9zM511.4 415.6h5.2v5.7h-5.2zM559 408.1h4v5.4h-4zM556 433.1h3.9v4.2h-3.9zM499.3 423.8h3.4v5.2h-3.4zM514.3 423.6h3.5v5.4h-3.5zM556.5 391.9h7.4v2.6h-7.4zM592.8 391.9h7.4v2.6h-7.4zM627.8 391.9h7.4v2.6h-7.4zM631.6 400.5h3.9v5.6h-3.9zM425.4 476.9h4.2v4.4h-4.2zM425.4 482.7h4.2v4.4h-4.2zM441.4 476.9h4.2v4.4h-4.2zM441.4 482.7h4.2v4.4h-4.2zM465 476.9h4.2v4.4h-4.2zM465 482.7h4.2v4.4h-4.2zM482 476.9h4.2v4.4h-4.2zM482 482.7h4.2v4.4h-4.2zM504.6 476.9h4.2v4.4h-4.2zM504.6 482.7h4.2v4.4h-4.2zM522.5 476.9h4.2v4.4h-4.2zM522.5 482.7h4.2v4.4h-4.2zM537 485.1h3.6v4.8h-3.6zM433.2 490.5h2.8v4.2h-2.8zM458.9 490.9h3.5v4h-3.5zM473.5 490.5h3.3v4.2h-3.3zM500.1 490.5h3.9v4.4h-3.9zM515.3 490.5h3.5v4.2h-3.5zM453.4 494.4h3.2v5h-3.2zM453.4 501.1h3.2v5h-3.2zM493.5 494.4h3.2v5h-3.2zM493.5 501.1h3.2v5h-3.2zM540 494.4h4.8v6.2h-4.8zM540 505.1h4.8v6h-4.8zM627 483.3h8.4v3.1h-8.4zM640.3 483.3h8.7v3.1h-8.7zM634 494.4h8.6v3.1h-8.6zM227.9 571.3h2.9v4.7h-2.9zM225 579.7h2.9v5.1h-2.9zM232.7 571.3h2.9v4.7h-2.9zM229.8 579.7h2.9v5.1h-2.9zM234.7 579.7h2.9v5.1h-2.9zM242.4 571.3h2.9v4.7h-2.9zM244.3 579.7h2.9v5.1h-2.9zM252.1 571.3h2.9v4.7h-2.9zM249.2 579.7h2.9v5.1h-2.9zM256.9 571.3h2.9v4.7h-2.9zM254 579.7h2.9v5.1h-2.9zM261.7 571.3h2.9v4.7h-2.9zM266.5 571.3h2.9v4.7h-2.9zM263.6 579.7h2.9v5.1h-2.9zM268.5 579.7h2.9v5.1h-2.9zM276.2 571.3h2.9v4.7h-2.9zM273.3 579.7h2.9v5.1h-2.9zM281 571.3h2.9v4.7h-2.9zM283 579.7h2.9v5.1h-2.9zM290.7 571.3h2.9v4.7h-2.9zM287.8 579.7h2.9v5.1h-2.9zM295.5 571.3h2.9v4.7h-2.9zM300.4 571.3h2.9v4.7h-2.9zM297.4 579.7h2.9v5.1h-2.9zM301.4 600.5h2.9v2.7h-2.9zM305.7 600.5h2.9v2.7h-2.9zM269.3 609.1h2.9v2.7h-2.9zM274.2 609.1h2.9v2.7h-2.9zM262.9 618.1h3.1v5.5h-3.1zM272.2 637.5h4.9v6.2h-4.9zM272.2 647.6h4.9v6.2h-4.9zM272.2 658.1h4.9v6.2h-4.9zM272.2 668.6h4.9v6.2h-4.9zM290 649.1h6v2.5h-6zM290 653.6h6v2.5h-6zM290 658.1h6v2.5h-6zM305.3 651.5h5.8v6.2h-5.8zM338.3 650.1h6.4v2.5h-6.4zM265.4 682.1h2.9v2.4h-2.9zM273.2 682.1h2.9v2.4h-2.9zM279 682.1h2.9v2.4h-2.9zM287.2 682.1h2.9v2.4h-2.9zM253.2 685.7h4.4v4.1h-4.4zM253.2 691.9h4.4v4.7h-4.4zM253.2 706.5h4.4v3.7h-4.4zM289.3 687.4h3.7v4.3h-3.7zM289.3 694.4h3.7v4.1h-3.7zM289.3 703.1h3.7v5.1h-3.7zM338.3 700.1h4.5v6.6h-4.5zM392.4 576.1h6.2v3.4h-6.2zM401 576.1h5.8v3.4h-5.8zM367 586.1h5.7v3.5h-5.7zM375.3 586.1h5.7v3.5h-5.7zM404 587.9h4v3.3h-4zM404 594.1h4v3.3h-4zM405.4 604.4h4.6v3.1h-4.6zM405.4 614.1h4.6v3.3h-4.6zM426.5 532.5h6.8v2.8h-6.8zM488 532.5h6v2.8h-6zM566 543.5h3.8v5h-3.8zM572.4 543.5h3.6v5h-3.6zM560 561.6h2.7v4.7h-2.7zM566 561.6h2.9v4.7h-2.9zM571 561.4h3.9v5.4h-3.9zM424 554.4h7.8v2.2h-7.8zM433 554.4h2.7v5.1h-2.7zM442 557.3h6.5v3.2h-6.5zM451.2 557.3h6.8v3.2h-6.8zM503 579.7h2.9v4.1h-2.9zM505.9 609.6h4.8v3h-4.8zM505.9 615.1h4.8v2.8h-4.8zM504.9 626.4h5.8v2.2h-5.8zM422 640h4v4.1h-4zM438 640.4h5v3.3h-5zM453 640.4h4.6v3.3h-4.6zM462 640.4h4v3.3h-4zM495 633.6h4.8v4h-4.8zM495 639.4h4.8v5h-4.8zM545 578.1h11.8v4.8h-11.8zM567.9 578.1h10.9v4.8h-10.9zM540.3 594.7h2.5v4.2h-2.5zM559.7 594.7h2.9v4.2h-2.9zM540.3 607.3h2.5v4.2h-2.5zM559.7 607.3h2.9v4.2h-2.9zM540.3 612.8h2.5v3.7h-2.5zM571.8 604.4h3.9v5.1h-3.9zM567 612.1h8.3v2.4h-8.3zM529 627.3h6.4v3.6h-6.4zM538.3 627.3h7.2v3.6h-7.2zM529 634.5h6.4v3.7h-6.4zM538.3 634.5h7.2v3.7h-7.2zM569 624.4h4.7v6.1h-4.7zM569 635.5h4.7v6h-4.7zM538.3 641.3h4.5v5.6h-4.5zM538.3 651.7h4.7v6.9h-4.7zM468 692.9h6.5v2.7h-6.5zM536 669.9h3.3v5.3h-3.3zM586 668.6h3.9v4.7h-3.9zM556 734.5h12v5.2h-12zM578 734.5h12v5.2h-12zM503 758.1h7v4.4h-7zM512 758.1h5.4v4.4h-5.4zM528 763.9h6v3.2h-6zM537.5 763.9h5.6v3.2h-5.6zM534.5 745.5h2.6v2.6h-2.6zM538.7 745.5h2.6v2.6h-2.6zM458.9 365.5h4.4v8.4h-4.4zM491.5 365.5h4.4v8.4h-4.4zM252.6 712.7h5v4.6h-5zM252.6 719.2h5v6.4h-5zM252.6 730.3h5v6h-5zM289 711.7h4.6v4.6h-4.6zM289 721.8h4.6v4.4h-4.6zM289 727.9h4.6v4.8h-4.6zM338.2 700.8h4.9v6.5h-4.9zM338.2 711.5h4.9v6.2h-4.9zM341.3 722.5h5.6v6.3h-5.6zM341.3 733.5h5.6v6.8h-5.6zM297.7 750.5h4.9v5.5h-4.9zM297.7 760.5h4.9v5.8h-4.9z"/>
<path fill="none" stroke="#3f9a4a" stroke-width="1.0" d="M259 659.1h2.7v5.4h-2.7zM452.4 600.5h9.3v6h-9.3zM549.4 626.4h7.4v3.1h-7.4zM549.4 635.5h7.4v3.7h-7.4z"/>
</g></g>
</g>
<text x="972" y="487.4" font-size="82.5" fill="#00ff00" text-anchor="start" font-weight="bold" font-family="'DejaVu Sans','Liberation Sans',sans-serif" textLength="307" lengthAdjust="spacingAndGlyphs" stroke="#00ff00" stroke-width="2.4" stroke-linejoin="round">GOOD</text>
<rect x="1131.2" y="460" width="131.6" height="144" fill="#ffffff" stroke="#aca899" stroke-width="1"/>
<rect x="1262.6" y="461" width="1.2" height="144" fill="#8a8880" opacity="0.7"/><rect x="1132" y="604" width="131.8" height="1.2" fill="#8a8880" opacity="0.7"/>
<rect x="1133.4" y="461.8" width="127.6" height="11.8" fill="#316ac5" />
<text x="1148.3" y="471.2" font-size="8.6" fill="#fff" text-anchor="start" font-weight="normal" font-family="'DejaVu Sans','Liberation Sans',sans-serif" textLength="39.2" lengthAdjust="spacingAndGlyphs" >Zoom Fit</text>
<text x="1148.3" y="483.3" font-size="8.6" fill="#000" text-anchor="start" font-weight="normal" font-family="'DejaVu Sans','Liberation Sans',sans-serif" textLength="45.1" lengthAdjust="spacingAndGlyphs" >Zoom Out</text>
<text x="1148.3" y="496.2" font-size="8.6" fill="#000" text-anchor="start" font-weight="normal" font-family="'DejaVu Sans','Liberation Sans',sans-serif" textLength="37.1" lengthAdjust="spacingAndGlyphs" >Zoom In</text>
<text x="1148.3" y="515.6" font-size="8.6" fill="#000" text-anchor="start" font-weight="normal" font-family="'DejaVu Sans','Liberation Sans',sans-serif" textLength="40.9" lengthAdjust="spacingAndGlyphs" >Select All</text>
<text x="1148.3" y="528.1" font-size="8.6" fill="#000" text-anchor="start" font-weight="normal" font-family="'DejaVu Sans','Liberation Sans',sans-serif" textLength="52.0" lengthAdjust="spacingAndGlyphs" >Unselect All</text>
<text x="1148.3" y="540.6" font-size="8.6" fill="#000" text-anchor="start" font-weight="normal" font-family="'DejaVu Sans','Liberation Sans',sans-serif" textLength="92.0" lengthAdjust="spacingAndGlyphs" >Select identical pads</text>
<text x="1148.3" y="560" font-size="8.6" fill="#000" text-anchor="start" font-weight="normal" font-family="'DejaVu Sans','Liberation Sans',sans-serif" textLength="70.5" lengthAdjust="spacingAndGlyphs" >Display Options</text>
<text x="1148.3" y="579.5" font-size="8.6" fill="#000" text-anchor="start" font-weight="normal" font-family="'DejaVu Sans','Liberation Sans',sans-serif" textLength="73.9" lengthAdjust="spacingAndGlyphs" >Image Setting...</text>
<text x="1148.3" y="598.6" font-size="8.6" fill="#aca899" text-anchor="start" font-weight="normal" font-family="'DejaVu Sans','Liberation Sans',sans-serif" textLength="82.2" lengthAdjust="spacingAndGlyphs" >Show Trend Chart</text>
<rect x="1134.4" y="501.9" width="126" height="1" fill="#aca899" />
<rect x="1134.4" y="547.1" width="126" height="1" fill="#aca899" />
<rect x="1134.4" y="566.2" width="126" height="1" fill="#aca899" />
<rect x="1134.4" y="585.3" width="126" height="1" fill="#aca899" />
<path d="M1252.6,552.8 l4.2,3.7 l-4.2,3.7 z" fill="#000"/>
</svg>
</body></html>
